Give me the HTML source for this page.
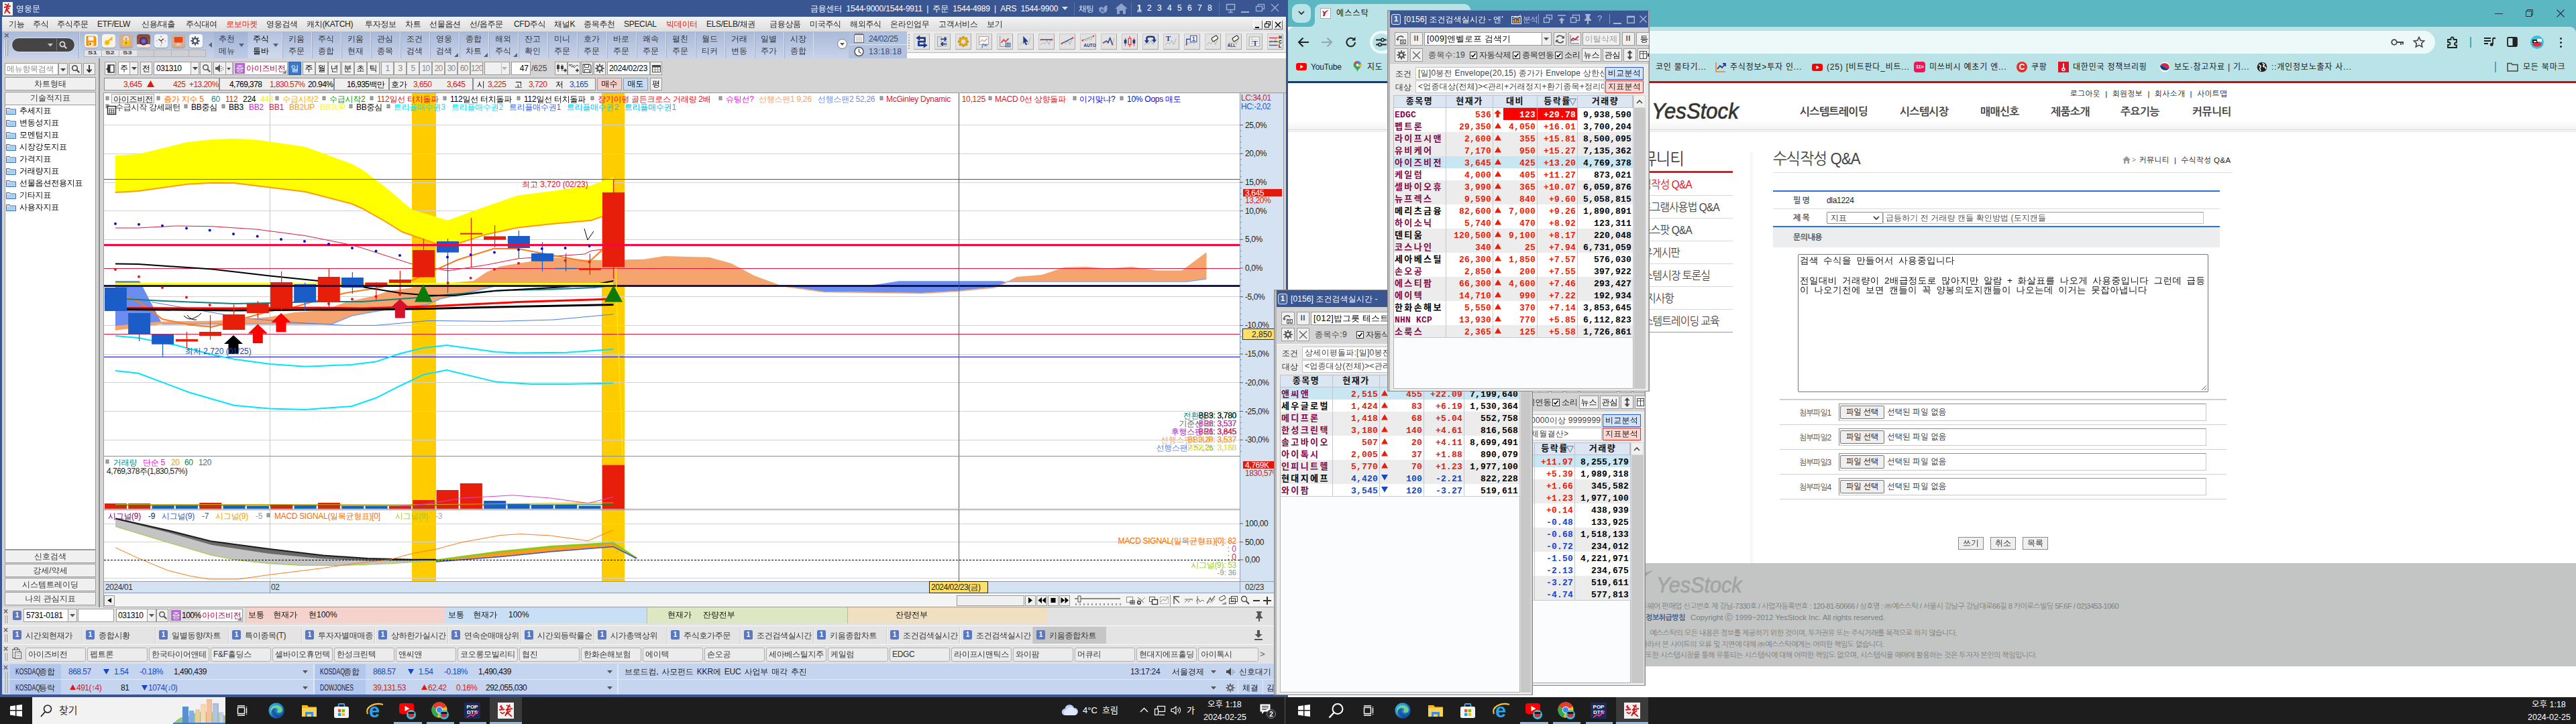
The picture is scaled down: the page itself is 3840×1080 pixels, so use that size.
<!DOCTYPE html>
<html lang="ko"><head><meta charset="utf-8"><title>screen</title>
<style>
html,body{margin:0;padding:0;background:#fff;}
#root{position:relative;width:3840px;height:1080px;overflow:hidden;background:#fff;font-family:"Liberation Sans","WenQuanYi Zen Hei",sans-serif;font-size:12px;color:#000;}
#root div{position:absolute;box-sizing:border-box;}
#root svg{position:absolute;overflow:visible;}
.t{white-space:nowrap;line-height:14px;}
.g{font-family:"Liberation Sans","WenQuanYi Zen Hei",sans-serif;}
.m{font-family:"Liberation Sans","Noto Sans CJK KR",sans-serif;}
.n{font-family:"Liberation Sans","NanumGothic",sans-serif;}
.btn{background:#f0f0f0;border:1px solid #9a9a9a;text-align:center;line-height:18px;white-space:nowrap;overflow:hidden;}
.inp{background:#fff;border:1px solid #9a9a9a;line-height:18px;white-space:nowrap;overflow:hidden;}
.r{color:#e0190d;} .b{color:#1545c8;}

</style></head>
<body>
<div id="root">
<!-- s_left_top -->
<div style="left:0px;top:0px;width:1920px;height:1040px;background:#3a5692;"></div>
<div style="left:4px;top:3px;width:15px;height:20px;background:#f4f4f4;"><svg width="15" height="20" viewBox="0 0 15 20"><path d="M3 3l4 2M9 2l-2 5M2 8l10-2M7 7l-4 10M5 11l6 6M10 9l-6 4" stroke="#d01818" stroke-width="1.8" fill="none"/></svg></div>
<div class="t" style="left:24px;top:6px;color:#fff;font-size:12px;">영웅문</div>
<div class="t" style="left:1208px;top:6px;color:#fff;font-size:12px;letter-spacing:-0.2px;">금융센터&nbsp; 1544-9000/1544-9911&nbsp; |&nbsp; 주문&nbsp; 1544-4989&nbsp; |&nbsp; ARS&nbsp; 1544-9900</div>
<svg style="left:1583px;top:10px" width="10" height="6"><path d="M0 0h9l-4.5 5z" fill="#d8e0f0"/></svg>
<div style="left:1601px;top:3px;width:1px;height:20px;background:#5a74a8;"></div>
<div class="t" style="left:1608px;top:6px;color:#e4eaf6;font-size:12px;letter-spacing:-1px;">채팅</div>
<svg style="left:1636px;top:5px" width="18" height="16"><path d="M2 7l4-2 3 2 3-4 3 1-1 3 1 1-2 5-6 2-4-3z" fill="#8ea2cc"/><text x="5" y="13" font-size="8" font-weight="bold" fill="#3a5692" font-family="Liberation Sans,sans-serif">K</text></svg>
<svg style="left:1662px;top:5px" width="19" height="16"><path d="M0 8L9.5 0 19 8h-3v8h-4v-5H7v5H3V8z" fill="#8ea2cc"/></svg>
<div style="left:1686px;top:3px;width:1px;height:20px;background:#5a74a8;"></div>
<div class="t" style="left:1695px;top:5px;color:#fff;font-size:12px;font-weight:bold;text-decoration:underline;">1</div>
<div class="t" style="left:1710px;top:5px;color:#fff;font-size:12px;">2</div>
<div class="t" style="left:1725px;top:5px;color:#fff;font-size:12px;">3</div>
<div class="t" style="left:1740px;top:5px;color:#fff;font-size:12px;">4</div>
<div class="t" style="left:1755px;top:5px;color:#fff;font-size:12px;">5</div>
<div class="t" style="left:1770px;top:5px;color:#fff;font-size:12px;">6</div>
<div class="t" style="left:1785px;top:5px;color:#fff;font-size:12px;">7</div>
<div class="t" style="left:1800px;top:5px;color:#fff;font-size:12px;">8</div>
<div style="left:1817px;top:3px;width:1px;height:20px;background:#5a74a8;"></div>
<svg style="left:1828px;top:6px" width="14" height="14"><rect x="0.5" y="0.5" width="12" height="8" fill="none" stroke="#9fb0d4" stroke-width="1.5"/><path d="M6.5 9v3M3 12.5h7" stroke="#9fb0d4" stroke-width="1.5"/></svg>
<div style="left:1850px;top:17px;width:12px;height:2px;background:#9fb0d4;"></div>
<svg style="left:1872px;top:6px" width="14" height="12"><rect x="3.5" y="0.5" width="9" height="7" fill="none" stroke="#9fb0d4" stroke-width="1.3"/><rect x="0.5" y="3.5" width="9" height="7" fill="#3a5692" stroke="#9fb0d4" stroke-width="1.3"/></svg>
<svg style="left:1895px;top:6px" width="12" height="12"><path d="M0 0l11 11M11 0L0 11" stroke="#9fb0d4" stroke-width="1.3"/></svg>
<div style="left:3px;top:25px;width:1914px;height:22px;background:linear-gradient(#f2f2f2,#dedede);"></div>
<div class="t" style="left:13px;top:29px;letter-spacing:-0.3px;color:#222;">기능</div>
<div class="t" style="left:49px;top:29px;letter-spacing:-0.3px;color:#222;">주식</div>
<div class="t" style="left:85px;top:29px;letter-spacing:-0.3px;color:#222;">주식주문</div>
<div class="t" style="left:145px;top:29px;letter-spacing:-0.3px;color:#222;">ETF/ELW</div>
<div class="t" style="left:211px;top:29px;letter-spacing:-0.3px;color:#222;">신용/대출</div>
<div class="t" style="left:277px;top:29px;letter-spacing:-0.3px;color:#222;">주식대여</div>
<div class="t" style="left:337px;top:29px;letter-spacing:-0.3px;color:#e8150a;">로보마켓</div>
<div class="t" style="left:397px;top:29px;letter-spacing:-0.3px;color:#222;">영웅검색</div>
<div class="t" style="left:457px;top:29px;letter-spacing:-0.3px;color:#222;">캐치(KATCH)</div>
<div class="t" style="left:544px;top:29px;letter-spacing:-0.3px;color:#222;">투자정보</div>
<div class="t" style="left:604px;top:29px;letter-spacing:-0.3px;color:#222;">차트</div>
<div class="t" style="left:640px;top:29px;letter-spacing:-0.3px;color:#222;">선물옵션</div>
<div class="t" style="left:700px;top:29px;letter-spacing:-0.3px;color:#222;">선/옵주문</div>
<div class="t" style="left:766px;top:29px;letter-spacing:-0.3px;color:#222;">CFD주식</div>
<div class="t" style="left:826px;top:29px;letter-spacing:-0.3px;color:#222;">채널K</div>
<div class="t" style="left:870px;top:29px;letter-spacing:-0.3px;color:#222;">종목추천</div>
<div class="t" style="left:930px;top:29px;letter-spacing:-0.3px;color:#222;">SPECIAL</div>
<div class="t" style="left:993px;top:29px;letter-spacing:-0.3px;color:#e8150a;">빅데이터</div>
<div class="t" style="left:1053px;top:29px;letter-spacing:-0.3px;color:#222;">ELS/ELB/채권</div>
<div class="t" style="left:1147px;top:29px;letter-spacing:-0.3px;color:#222;">금융상품</div>
<div class="t" style="left:1207px;top:29px;letter-spacing:-0.3px;color:#222;">미국주식</div>
<div class="t" style="left:1267px;top:29px;letter-spacing:-0.3px;color:#222;">해외주식</div>
<div class="t" style="left:1327px;top:29px;letter-spacing:-0.3px;color:#222;">온라인업무</div>
<div class="t" style="left:1399px;top:29px;letter-spacing:-0.3px;color:#222;">고객서비스</div>
<div class="t" style="left:1471px;top:29px;letter-spacing:-0.3px;color:#222;">보기</div>
<div style="left:1868px;top:30px;width:14px;height:14px;background:#ececec;border:1px solid #fff;border-right-color:#666;border-bottom-color:#666;"></div>
<div style="left:1883px;top:30px;width:14px;height:14px;background:#ececec;border:1px solid #fff;border-right-color:#666;border-bottom-color:#666;"></div>
<div style="left:1898px;top:30px;width:14px;height:14px;background:#ececec;border:1px solid #fff;border-right-color:#666;border-bottom-color:#666;"></div>
<div style="left:1871px;top:40px;width:6px;height:2px;background:#000;"></div>
<svg style="left:1885px;top:32px" width="10" height="10"><rect x="2.5" y="0.5" width="6" height="5" fill="none" stroke="#000"/><rect x="0.5" y="3.5" width="6" height="5" fill="#ececec" stroke="#000"/></svg>
<svg style="left:1901px;top:33px" width="9" height="9"><path d="M0 0l8 8M8 0L0 8" stroke="#000" stroke-width="1.4"/></svg>
<div style="left:3px;top:47px;width:1349px;height:40px;background:linear-gradient(#a9b9d9,#c8d3ea);"></div>
<div class="t" style="left:6px;top:46px;color:#666;font-size:13px;font-weight:bold;">×</div>
<div style="left:7px;top:59px;width:2px;height:25px;background:#fff;border-right:1px solid #888;"></div>
<div style="left:10px;top:59px;width:2px;height:25px;background:#fff;border-right:1px solid #888;"></div>
<div style="left:17px;top:56px;width:95px;height:22px;background:#454545;border-radius:11px;border:1px solid #dfe5f0;"></div>
<svg style="left:71px;top:65px" width="9" height="5"><path d="M0 0h8l-4 4.5z" fill="#c8c8c8"/></svg>
<div style="left:84px;top:58px;width:1px;height:18px;background:#777;"></div>
<svg style="left:88px;top:61px" width="13" height="13"><circle cx="5" cy="5" r="3.6" fill="none" stroke="#ddd" stroke-width="1.7"/><path d="M7.8 7.8l3.6 3.6" stroke="#ddd" stroke-width="2"/></svg>
<div style="left:126px;top:51px;width:20px;height:20px;background:#fdf7e8;border-radius:4px;box-shadow:0 1px 1px rgba(0,0,0,.25);"></div>
<div style="left:152px;top:51px;width:20px;height:20px;background:#fbf4e2;border-radius:4px;box-shadow:0 1px 1px rgba(0,0,0,.25);"></div>
<div style="left:178px;top:51px;width:20px;height:20px;background:#d7ad8e;border-radius:4px;box-shadow:0 1px 1px rgba(0,0,0,.25);"></div>
<div style="left:204px;top:51px;width:20px;height:20px;background:#f5e8dc;border-radius:4px;box-shadow:0 1px 1px rgba(0,0,0,.25);"></div>
<div style="left:230px;top:51px;width:20px;height:20px;background:#eef1f2;border-radius:4px;box-shadow:0 1px 1px rgba(0,0,0,.25);"></div>
<div style="left:256px;top:51px;width:20px;height:20px;background:#d7ad8e;border-radius:4px;box-shadow:0 1px 1px rgba(0,0,0,.25);"></div>
<div style="left:282px;top:51px;width:20px;height:20px;background:#f7f8f9;border-radius:4px;box-shadow:0 1px 1px rgba(0,0,0,.25);"></div>
<svg style="left:128px;top:53px" width="16" height="16"><path d="M1 1h12l2 2v12H1z" fill="#f59a0c" stroke="#d87a00" stroke-width=".8"/><rect x="3.500" y="1.500" width="8" height="6" fill="#f4f6fb"/><rect x="4.500" y="10" width="7" height="5" fill="#fbe9c8"/><rect x="5.500" y="11" width="2" height="3" fill="#a05a00"/></svg>
<svg style="left:155px;top:54px" width="14" height="14"><circle cx="4.5" cy="9.5" r="3.5" fill="#f7b612"/><path d="M6.5 7.5l6-6M10 4l2 2" stroke="#f7b612" stroke-width="2.2"/></svg>
<svg style="left:181px;top:53px" width="14" height="16"><path d="M4 7V4.5a3 3 0 016 0V7" fill="none" stroke="#f3f3f3" stroke-width="1.6"/><rect x="2" y="7" width="10" height="8" rx="1" fill="#f7c41a"/><rect x="6.3" y="9.5" width="1.6" height="3" fill="#8a5a10"/></svg>
<svg style="left:204px;top:51px" width="20" height="20"><rect x="0" y="0" width="20" height="20" rx="4" fill="#f3e6d4"/><path d="M0 4a4 4 0 014-4h12a4 4 0 014 4v3H0z" fill="#8a4a3c"/><rect x="0" y="7" width="20" height="8" fill="#7a3e34" opacity=".85"/><circle cx="10" cy="10.500" r="6" fill="#3a2a4a"/><circle cx="10" cy="10.500" r="4.600" fill="#6a4a9c"/><circle cx="10" cy="10.500" r="2.300" fill="#8a6cc0"/><circle cx="3.500" cy="3.500" r="1" fill="#e83030"/></svg>
<svg style="left:232px;top:53px" width="16" height="16"><path d="M8 8L4.5 5.5M8 8l4-3.2" stroke="#333" stroke-width="1.2"/><path d="M8 8l1.5 4" stroke="#d22" stroke-width="1"/><circle cx="8" cy="1.5" r=".8" fill="#d22"/><circle cx="14.5" cy="8" r=".8" fill="#888"/><circle cx="8" cy="14.5" r=".8" fill="#888"/><circle cx="1.5" cy="8" r=".8" fill="#888"/></svg>
<svg style="left:258px;top:54px" width="16" height="14"><rect x="1" y="0.5" width="14" height="9.5" rx="1" fill="#f0470c" stroke="#c7c7c7"/><path d="M8 10v2.5M4.5 13h7" stroke="#ddd" stroke-width="1.4"/></svg>
<svg style="left:284px;top:54px" width="14" height="14"><circle cx="7" cy="7" r="3.6" fill="none" stroke="#4a5263" stroke-width="2.4"/><path d="M7 0.3v2.4M7 11.3v2.4M.3 7h2.4M11.3 7h2.4M2.2 2.2l1.8 1.8M10 10l1.8 1.8M2.2 11.8L4 10M10 4l1.8-1.8" stroke="#4a5263" stroke-width="2"/></svg>
<div style="left:125px;top:74px;width:182px;height:11px;background:#cfcfcf;border:1px solid #b0b4bc;"></div>
<div style="left:151px;top:75px;width:1px;height:9px;background:#b4b4b4;"></div>
<div style="left:177px;top:75px;width:1px;height:9px;background:#b4b4b4;"></div>
<div style="left:203px;top:75px;width:1px;height:9px;background:#b4b4b4;"></div>
<div style="left:229px;top:75px;width:1px;height:9px;background:#b4b4b4;"></div>
<div style="left:255px;top:75px;width:1px;height:9px;background:#b4b4b4;"></div>
<div style="left:281px;top:75px;width:1px;height:9px;background:#b4b4b4;"></div>
<div style="left:126px;top:75px;width:78px;height:9px;background:#e6e6e6;"></div>
<div style="left:151px;top:75px;width:1px;height:9px;background:#b4b4b4;"></div>
<div style="left:177px;top:75px;width:1px;height:9px;background:#b4b4b4;"></div>
<div style="left:118px;top:48px;width:1px;height:39px;background:#d3dcee;"></div>
<div style="left:117px;top:48px;width:1px;height:39px;background:#9babc9;"></div>
<div class="t" style="left:131px;top:73px;font-size:8px;font-weight:bold;color:#444;line-height:12px;transform:scaleX(1.4);transform-origin:0 0;">S1</div>
<div class="t" style="left:157px;top:73px;font-size:8px;font-weight:bold;color:#444;line-height:12px;transform:scaleX(1.4);transform-origin:0 0;">S2</div>
<div class="t" style="left:183px;top:73px;font-size:8px;font-weight:bold;color:#444;line-height:12px;transform:scaleX(1.4);transform-origin:0 0;">S3</div>
<svg style="left:311px;top:63px" width="6" height="9"><path d="M5 0v8L0 4z" fill="#5a6474"/></svg>
<div style="left:319px;top:48px;width:50px;height:39px;background:linear-gradient(#a2b3d6,#bfcbe6);"></div>
<div class="t" style="left:326px;top:51px;color:#333;">추천</div>
<div class="t" style="left:326px;top:69px;color:#333;">메뉴</div>
<svg style="left:356px;top:65px" width="8" height="5"><path d="M0 0h8l-4 5z" fill="#566074"/></svg>
<div style="left:370px;top:48px;width:50px;height:39px;background:linear-gradient(#b4c2e0,#d0daee);"></div>
<div class="t" style="left:377px;top:51px;color:#000;">주식</div>
<div class="t" style="left:377px;top:69px;color:#000;">툴바</div>
<svg style="left:407px;top:65px" width="8" height="5"><path d="M0 0h8l-4 5z" fill="#566074"/></svg>
<div style="left:420px;top:48px;width:1px;height:39px;background:#d6deef;"></div>
<div style="left:421px;top:48px;width:1px;height:39px;background:#9dadcd;"></div>
<div class="t" style="left:430px;top:51px;color:#333;">키움</div>
<div class="t" style="left:430px;top:69px;color:#333;">주문</div>
<div style="left:464px;top:48px;width:1px;height:39px;background:#d6deef;"></div>
<div style="left:465px;top:48px;width:1px;height:39px;background:#9dadcd;"></div>
<div class="t" style="left:474px;top:51px;color:#333;">주식</div>
<div class="t" style="left:474px;top:69px;color:#333;">종합</div>
<div style="left:508px;top:48px;width:1px;height:39px;background:#d6deef;"></div>
<div style="left:509px;top:48px;width:1px;height:39px;background:#9dadcd;"></div>
<div class="t" style="left:518px;top:51px;color:#333;">키움</div>
<div class="t" style="left:518px;top:69px;color:#333;">현재</div>
<div style="left:552px;top:48px;width:1px;height:39px;background:#d6deef;"></div>
<div style="left:553px;top:48px;width:1px;height:39px;background:#9dadcd;"></div>
<div class="t" style="left:562px;top:51px;color:#333;">관심</div>
<div class="t" style="left:562px;top:69px;color:#333;">종목</div>
<div style="left:596px;top:48px;width:1px;height:39px;background:#d6deef;"></div>
<div style="left:597px;top:48px;width:1px;height:39px;background:#9dadcd;"></div>
<div class="t" style="left:606px;top:51px;color:#333;">조건</div>
<div class="t" style="left:606px;top:69px;color:#333;">검색</div>
<div style="left:640px;top:48px;width:1px;height:39px;background:#d6deef;"></div>
<div style="left:641px;top:48px;width:1px;height:39px;background:#9dadcd;"></div>
<div class="t" style="left:650px;top:51px;color:#333;">영웅</div>
<div class="t" style="left:650px;top:69px;color:#333;">검색</div>
<svg style="left:677px;top:79px" width="6" height="6"><path d="M6 0v6H0z" fill="#5a6474"/></svg>
<div style="left:684px;top:48px;width:1px;height:39px;background:#d6deef;"></div>
<div style="left:685px;top:48px;width:1px;height:39px;background:#9dadcd;"></div>
<div class="t" style="left:694px;top:51px;color:#333;">종합</div>
<div class="t" style="left:694px;top:69px;color:#333;">차트</div>
<svg style="left:721px;top:79px" width="6" height="6"><path d="M6 0v6H0z" fill="#5a6474"/></svg>
<div style="left:728px;top:48px;width:1px;height:39px;background:#d6deef;"></div>
<div style="left:729px;top:48px;width:1px;height:39px;background:#9dadcd;"></div>
<div class="t" style="left:738px;top:51px;color:#333;">해외</div>
<div class="t" style="left:738px;top:69px;color:#333;">주식</div>
<svg style="left:765px;top:79px" width="6" height="6"><path d="M6 0v6H0z" fill="#5a6474"/></svg>
<div style="left:772px;top:48px;width:1px;height:39px;background:#d6deef;"></div>
<div style="left:773px;top:48px;width:1px;height:39px;background:#9dadcd;"></div>
<div class="t" style="left:782px;top:51px;color:#333;">잔고</div>
<div class="t" style="left:782px;top:69px;color:#333;">확인</div>
<div style="left:816px;top:48px;width:1px;height:39px;background:#d6deef;"></div>
<div style="left:817px;top:48px;width:1px;height:39px;background:#9dadcd;"></div>
<div class="t" style="left:826px;top:51px;color:#333;">미니</div>
<div class="t" style="left:826px;top:69px;color:#333;">주문</div>
<div style="left:860px;top:48px;width:1px;height:39px;background:#d6deef;"></div>
<div style="left:861px;top:48px;width:1px;height:39px;background:#9dadcd;"></div>
<div class="t" style="left:870px;top:51px;color:#333;">호가</div>
<div class="t" style="left:870px;top:69px;color:#333;">주문</div>
<div style="left:904px;top:48px;width:1px;height:39px;background:#d6deef;"></div>
<div style="left:905px;top:48px;width:1px;height:39px;background:#9dadcd;"></div>
<div class="t" style="left:914px;top:51px;color:#333;">바로</div>
<div class="t" style="left:914px;top:69px;color:#333;">주문</div>
<div style="left:948px;top:48px;width:1px;height:39px;background:#d6deef;"></div>
<div style="left:949px;top:48px;width:1px;height:39px;background:#9dadcd;"></div>
<div class="t" style="left:958px;top:51px;color:#333;">쾌속</div>
<div class="t" style="left:958px;top:69px;color:#333;">주문</div>
<div style="left:992px;top:48px;width:1px;height:39px;background:#d6deef;"></div>
<div style="left:993px;top:48px;width:1px;height:39px;background:#9dadcd;"></div>
<div class="t" style="left:1002px;top:51px;color:#333;">펼친</div>
<div class="t" style="left:1002px;top:69px;color:#333;">주문</div>
<div style="left:1036px;top:48px;width:1px;height:39px;background:#d6deef;"></div>
<div style="left:1037px;top:48px;width:1px;height:39px;background:#9dadcd;"></div>
<div class="t" style="left:1046px;top:51px;color:#333;">월드</div>
<div class="t" style="left:1046px;top:69px;color:#333;">티커</div>
<div style="left:1080px;top:48px;width:1px;height:39px;background:#d6deef;"></div>
<div style="left:1081px;top:48px;width:1px;height:39px;background:#9dadcd;"></div>
<div class="t" style="left:1090px;top:51px;color:#333;">거래</div>
<div class="t" style="left:1090px;top:69px;color:#333;">변동</div>
<div style="left:1124px;top:48px;width:1px;height:39px;background:#d6deef;"></div>
<div style="left:1125px;top:48px;width:1px;height:39px;background:#9dadcd;"></div>
<div class="t" style="left:1134px;top:51px;color:#333;">일별</div>
<div class="t" style="left:1134px;top:69px;color:#333;">주가</div>
<div style="left:1168px;top:48px;width:1px;height:39px;background:#d6deef;"></div>
<div style="left:1169px;top:48px;width:1px;height:39px;background:#9dadcd;"></div>
<div class="t" style="left:1178px;top:51px;color:#333;">시장</div>
<div class="t" style="left:1178px;top:69px;color:#333;">종합</div>
<div style="left:1212px;top:48px;width:1px;height:39px;background:#d6deef;"></div>
<div style="left:1248px;top:58px;width:15px;height:15px;background:#fff;border:1px solid #7a7a7a;border-radius:8px;"></div>
<svg style="left:1252px;top:64px" width="8" height="5"><path d="M0 0h7l-3.5 4z" fill="#555"/></svg>
<div style="left:1265px;top:48px;width:87px;height:19px;background:#b3c2df;border-bottom:1px solid #dbe3f1;"></div>
<div style="left:1265px;top:68px;width:87px;height:19px;background:#b3c2df;"></div>
<svg style="left:1273px;top:49px" width="16" height="16"><rect x="0.5" y="2.5" width="14" height="12" fill="#fff" stroke="#666"/><path d="M3 0v4M6 0v4M9 0v4M12 0v4" stroke="#555"/><path d="M2 7h11M2 9.5h11M2 12h11M4.5 5v9M7.5 5v9M10.5 5v9" stroke="#bbb" stroke-width=".8"/></svg>
<div class="t" style="left:1295px;top:51px;color:#3c4a66;letter-spacing:-0.4px;">24/02/25</div>
<svg style="left:1273px;top:69px" width="16" height="16"><circle cx="7.5" cy="8" r="6.5" fill="#fff" stroke="#555" stroke-width="1.5"/><path d="M7.5 4v4.5l3 2" stroke="#555" stroke-width="1.4" fill="none"/></svg>
<div class="t" style="left:1295px;top:70px;color:#3c4a66;letter-spacing:0.3px;">13:18:18</div>
<div style="left:1352px;top:47px;width:565px;height:31px;background:#eaeaea;"></div>
<div style="left:1352px;top:78px;width:565px;height:1px;background:#b8b8b8;"></div>
<div style="left:1352px;top:79px;width:565px;height:8px;background:#fcfcfc;"></div>
<div style="left:1354px;top:51px;width:2px;height:2px;background:#aaa;"></div>
<div style="left:1354px;top:55px;width:2px;height:2px;background:#aaa;"></div>
<div style="left:1354px;top:59px;width:2px;height:2px;background:#aaa;"></div>
<div style="left:1354px;top:63px;width:2px;height:2px;background:#aaa;"></div>
<div style="left:1354px;top:67px;width:2px;height:2px;background:#aaa;"></div>
<div style="left:1354px;top:71px;width:2px;height:2px;background:#aaa;"></div>
<div style="left:1362px;top:50px;width:24px;height:24px;background:#e2e2e2;border:1px solid #a8a8a8;border-left-color:#c8c8c8;border-top-color:#c8c8c8;"><svg width="22" height="22" viewBox="0 0 24 24"><path d="M7 6H17v6H7v6h10" stroke="#1d3a8c" stroke-width="3" fill="none"/><path d="M9 1.500L2.500 6 9 10.500zM15 13.500L21.500 18 15 22.500z" fill="#1d3a8c"/></svg></div>
<div style="left:1393px;top:50px;width:24px;height:24px;background:#e2e2e2;border:1px solid #a8a8a8;border-left-color:#c8c8c8;border-top-color:#c8c8c8;"><svg width="22" height="22" viewBox="0 0 24 24"><path d="M4 4h6v16H4zM14 5h6M14 12h6M14 19h6" stroke="#999" fill="none"/><path d="M9 8h8M15 5l3 3-3 3M19 16h-8M13 13l-3 3 3 3" stroke="#1d3a8c" stroke-width="1.8" fill="none"/></svg></div>
<div style="left:1424px;top:50px;width:24px;height:24px;background:#e2e2e2;border:1px solid #a8a8a8;border-left-color:#c8c8c8;border-top-color:#c8c8c8;"><svg width="22" height="22" viewBox="0 0 24 24"><circle cx="12" cy="12" r="5" fill="none" stroke="#e9a400" stroke-width="3"/><path d="M12 3v3M12 18v3M3 12h3M18 12h3M5.6 5.6l2.2 2.2M16.2 16.2l2.2 2.2M5.6 18.4l2.2-2.2M16.2 7.8l2.2-2.2" stroke="#e9a400" stroke-width="2.6"/><circle cx="12" cy="12" r="7.5" fill="none" stroke="#7a5a00" stroke-width=".6"/></svg></div>
<div style="left:1455px;top:50px;width:24px;height:24px;background:#e2e2e2;border:1px solid #a8a8a8;border-left-color:#c8c8c8;border-top-color:#c8c8c8;"><svg width="22" height="22" viewBox="0 0 24 24"><rect x="4" y="4" width="15" height="13" fill="#fff" stroke="#999"/><path d="M5 13l4-4 3 3 5-5" stroke="#e33" fill="none"/><text x="8" y="21" font-size="10" fill="#1d3a8c" font-family="Liberation Serif,serif" font-style="italic">f∞</text></svg></div>
<div style="left:1486px;top:50px;width:24px;height:24px;background:#e2e2e2;border:1px solid #a8a8a8;border-left-color:#c8c8c8;border-top-color:#c8c8c8;"><svg width="22" height="22" viewBox="0 0 24 24"><path d="M4 3v17h16" stroke="#666" fill="none" stroke-dasharray="2 1"/><path d="M6 14l4-5 3 3 5-5" stroke="#e33" stroke-width="1.8" fill="none"/><rect x="13.500" y="14.500" width="7" height="6" fill="#fff" stroke="#1d3a8c"/><path d="M17 14.500v6M13.500 17.500h7" stroke="#1d3a8c"/></svg></div>
<div style="left:1517px;top:50px;width:24px;height:24px;background:#e2e2e2;border:1px solid #a8a8a8;border-left-color:#c8c8c8;border-top-color:#c8c8c8;"><svg width="22" height="22" viewBox="0 0 24 24"><path d="M2 18l4-5 3 3 4-8 3 9 4-12" stroke="#aaa" fill="none"/><path d="M8 3l8 9-4 .3 2.200 4.700-2 1-2.200-4.800L8 15z" fill="#1d3a8c"/></svg></div>
<div style="left:1548px;top:50px;width:24px;height:24px;background:#e2e2e2;border:1px solid #a8a8a8;border-left-color:#c8c8c8;border-top-color:#c8c8c8;"><svg width="22" height="22" viewBox="0 0 24 24"><path d="M2 18l4-5 3 3 4-6 3 7 4-10" stroke="#aaa" fill="none"/><path d="M3 9h18" stroke="#1d3a8c" stroke-width="1.5"/><circle cx="3" cy="9" r="1.300" fill="#e33"/><circle cx="21" cy="9" r="1.300" fill="#e33"/></svg></div>
<div style="left:1579px;top:50px;width:24px;height:24px;background:#e2e2e2;border:1px solid #a8a8a8;border-left-color:#c8c8c8;border-top-color:#c8c8c8;"><svg width="22" height="22" viewBox="0 0 24 24"><path d="M2 18l4-5 3 3 4-6 3 7 4-10" stroke="#aaa" fill="none"/><path d="M3 15L21 6" stroke="#1d3a8c" stroke-width="1.5"/><circle cx="3" cy="15" r="1.300" fill="#e33"/><circle cx="21" cy="6" r="1.300" fill="#e33"/></svg></div>
<div style="left:1610px;top:50px;width:24px;height:24px;background:#e2e2e2;border:1px solid #a8a8a8;border-left-color:#c8c8c8;border-top-color:#c8c8c8;"><svg width="22" height="22" viewBox="0 0 24 24"><path d="M2 12l4-3 3 2 4-4 3 3 4-6" stroke="#aaa" fill="none"/><path d="M3 10L21 3" stroke="#888" stroke-width="1"/><circle cx="3" cy="10" r="1.300" fill="#e33"/><circle cx="21" cy="3" r="1.300" fill="#e33"/><text x="5" y="21" font-size="7" font-weight="bold" fill="#1d3a8c" font-family="Liberation Sans,sans-serif">AUTO</text></svg></div>
<div style="left:1641px;top:50px;width:24px;height:24px;background:#e2e2e2;border:1px solid #a8a8a8;border-left-color:#c8c8c8;border-top-color:#c8c8c8;"><svg width="22" height="22" viewBox="0 0 24 24"><path d="M2 14l4-2 3 3 4-9 4 12 4-12" stroke="#aaa" fill="none"/><path d="M3 14l5-3 3 3 3-8 4 11" stroke="#1d3a8c" stroke-width="1.400" fill="none"/><circle cx="3" cy="14" r="1.200" fill="#e33"/><circle cx="8" cy="11" r="1.200" fill="#e33"/><circle cx="18" cy="17" r="1.200" fill="#e33"/></svg></div>
<div style="left:1672px;top:50px;width:24px;height:24px;background:#e2e2e2;border:1px solid #a8a8a8;border-left-color:#c8c8c8;border-top-color:#c8c8c8;"><svg width="22" height="22" viewBox="0 0 24 24"><path d="M5 6v13M12 3v18M19 6v13" stroke="#e33" stroke-width="1.200"/><rect x="3" y="9" width="4" height="6" fill="#1d3a8c"/><rect x="10" y="7" width="4" height="10" fill="#fff" stroke="#e33" stroke-width="1.500"/><rect x="17" y="9" width="4" height="6" fill="#1d3a8c"/></svg></div>
<div style="left:1703px;top:50px;width:24px;height:24px;background:#e2e2e2;border:1px solid #a8a8a8;border-left-color:#c8c8c8;border-top-color:#c8c8c8;"><svg width="22" height="22" viewBox="0 0 24 24"><path d="M2 18l4-5 3 3 4-6 3 7 4-10" stroke="#aaa" fill="none"/><path d="M6 13V7q0-3 3-3h6q3 0 3 3v5" stroke="#1d3a8c" stroke-width="2.800" fill="none"/><path d="M2 10h8l-4 5zM14 9h8l-4 5z" fill="#1d3a8c"/></svg></div>
<div style="left:1734px;top:50px;width:24px;height:24px;background:#e2e2e2;border:1px solid #a8a8a8;border-left-color:#c8c8c8;border-top-color:#c8c8c8;"><svg width="22" height="22" viewBox="0 0 24 24"><path d="M2 18l4-5 3 3 4-6 3 7 4-10" stroke="#aaa" fill="none"/><text x="3" y="11" font-size="12" font-weight="bold" fill="#1d3a8c" font-family="Liberation Serif,serif">T</text></svg></div>
<div style="left:1765px;top:50px;width:24px;height:24px;background:#e2e2e2;border:1px solid #a8a8a8;border-left-color:#c8c8c8;border-top-color:#c8c8c8;"><svg width="22" height="22" viewBox="0 0 24 24"><path d="M2 18l4-5 3 3 4-6 3 7" stroke="#aaa" fill="none"/><path d="M3 17V8h6" stroke="#1d3a8c" stroke-width="1.300" fill="none"/><circle cx="3" cy="17" r="1.300" fill="#e33"/><rect x="9.500" y="2.500" width="10" height="10" fill="#fff" stroke="#1d3a8c"/><text x="12" y="11" font-size="9" font-weight="bold" fill="#1d3a8c" font-family="Liberation Sans,sans-serif">1</text></svg></div>
<div style="left:1796px;top:50px;width:24px;height:24px;background:#e2e2e2;border:1px solid #a8a8a8;border-left-color:#c8c8c8;border-top-color:#c8c8c8;"><svg width="22" height="22" viewBox="0 0 24 24"><path d="M2 18l4-5 3 3 4-6 3 7 4-10" stroke="#aaa" fill="none"/><rect x="10" y="4" width="10" height="6" rx="2" transform="rotate(-35 15 7)" fill="#fdfbe8" stroke="#222" stroke-width="1.200"/></svg></div>
<div style="left:1827px;top:50px;width:24px;height:24px;background:#e2e2e2;border:1px solid #a8a8a8;border-left-color:#c8c8c8;border-top-color:#c8c8c8;"><svg width="22" height="22" viewBox="0 0 24 24"><path d="M2 18l4-5 3 3 4-6 3 7 4-10" stroke="#aaa" fill="none"/><rect x="10" y="4" width="10" height="6" rx="2" transform="rotate(-35 15 7)" fill="#fdfbe8" stroke="#222" stroke-width="1.200"/><text x="2" y="21" font-size="7" font-weight="bold" fill="#1d3a8c" font-family="Liberation Sans,sans-serif">ALL</text></svg></div>
<div style="left:1858px;top:50px;width:24px;height:24px;background:#e2e2e2;border:1px solid #a8a8a8;border-left-color:#c8c8c8;border-top-color:#c8c8c8;"><svg width="22" height="22" viewBox="0 0 24 24"><rect x="3.500" y="4.500" width="17" height="15" fill="#fff" stroke="#999"/><path d="M3.500 8h17M3.500 11.500h17M3.500 15h17M8 4.500v15" stroke="#bbb"/><text x="9" y="18" font-size="12" font-weight="bold" fill="#1d3a8c" font-family="Liberation Serif,serif">T</text></svg></div>
<div style="left:1889px;top:50px;width:24px;height:24px;background:#e2e2e2;border:1px solid #a8a8a8;border-left-color:#c8c8c8;border-top-color:#c8c8c8;"><svg width="22" height="22" viewBox="0 0 24 24"><path d="M2 6h14" stroke="#e33" stroke-width="1.500"/><path d="M2 12h14" stroke="#222" stroke-width="1.500"/><path d="M2 18h14" stroke="#1d5ad0" stroke-width="1.500"/><path d="M3 16l3-6 3 3 3-5 3 4" stroke="#aaa" fill="none"/><text x="17.500" y="8" font-size="7" font-weight="bold" fill="#000" font-family="Liberation Sans,sans-serif">H</text><text x="17.500" y="15" font-size="7" font-weight="bold" fill="#000" font-family="Liberation Sans,sans-serif">C</text><text x="17.500" y="22" font-size="7" font-weight="bold" fill="#000" font-family="Liberation Sans,sans-serif">L</text></svg></div>
<!-- s_left_panel -->
<div style="left:3px;top:87px;width:1914px;height:819px;background:#d4d4d4;"></div>
<div class="inp" style="left:7px;top:94px;width:80px;height:18px;color:#8a8a8a;padding-left:2px;line-height:16px;letter-spacing:-0.3px;">메뉴항목검색</div>
<div class="btn" style="left:87px;top:94px;width:14px;height:18px;"><svg width="9" height="5" style="left:2px;top:7px"><path d="M0 0h8l-4 4.500z" fill="#444"/></svg></div>
<div class="btn" style="left:103px;top:94px;width:19px;height:18px;"><svg width="14" height="14" viewBox="0 0 14 14" style="left:2px;top:1px"><circle cx="5.5" cy="5.5" r="3.8" fill="none" stroke="#444" stroke-width="1.6"/><path d="M8.300 8.300l4 4" stroke="#444" stroke-width="2"/></svg></div>
<div class="btn" style="left:124px;top:94px;width:18px;height:18px;"><svg width="10" height="12" style="left:3px;top:2px"><path d="M5 0v9M1.500 6.500L5 10.500l3.500-4" stroke="#222" stroke-width="1.800" fill="none"/></svg></div>
<div class="btn" style="left:7px;top:115px;width:136px;height:20px;line-height:18px;color:#333;">차트형태</div>
<div class="btn" style="left:7px;top:137px;width:136px;height:19px;line-height:17px;color:#333;border-bottom:none;">기술적지표</div>
<div style="left:7px;top:156px;width:136px;height:664px;background:#fff;border:1px solid #9a9a9a;"></div>
<svg style="left:9px;top:159px" width="15" height="12"><path d="M0.500 2.500h5l1 1.500h8v7.500h-14z" fill="#cfe3f7" stroke="#2f6fb5"/><path d="M1.500 5.500h12v5h-12z" fill="#a8cdf0"/></svg>
<div class="t" style="left:29px;top:158px;letter-spacing:-0.2px;">추세지표</div>
<svg style="left:9px;top:177px" width="15" height="12"><path d="M0.500 2.500h5l1 1.500h8v7.500h-14z" fill="#cfe3f7" stroke="#2f6fb5"/><path d="M1.500 5.500h12v5h-12z" fill="#a8cdf0"/></svg>
<div class="t" style="left:29px;top:176px;letter-spacing:-0.2px;">변동성지표</div>
<svg style="left:9px;top:195px" width="15" height="12"><path d="M0.500 2.500h5l1 1.500h8v7.500h-14z" fill="#cfe3f7" stroke="#2f6fb5"/><path d="M1.500 5.500h12v5h-12z" fill="#a8cdf0"/></svg>
<div class="t" style="left:29px;top:194px;letter-spacing:-0.2px;">모멘텀지표</div>
<svg style="left:9px;top:213px" width="15" height="12"><path d="M0.500 2.500h5l1 1.500h8v7.500h-14z" fill="#cfe3f7" stroke="#2f6fb5"/><path d="M1.500 5.500h12v5h-12z" fill="#a8cdf0"/></svg>
<div class="t" style="left:29px;top:212px;letter-spacing:-0.2px;">시장강도지표</div>
<svg style="left:9px;top:231px" width="15" height="12"><path d="M0.500 2.500h5l1 1.500h8v7.500h-14z" fill="#cfe3f7" stroke="#2f6fb5"/><path d="M1.500 5.500h12v5h-12z" fill="#a8cdf0"/></svg>
<div class="t" style="left:29px;top:230px;letter-spacing:-0.2px;">가격지표</div>
<svg style="left:9px;top:249px" width="15" height="12"><path d="M0.500 2.500h5l1 1.500h8v7.500h-14z" fill="#cfe3f7" stroke="#2f6fb5"/><path d="M1.500 5.500h12v5h-12z" fill="#a8cdf0"/></svg>
<div class="t" style="left:29px;top:248px;letter-spacing:-0.2px;">거래량지표</div>
<svg style="left:9px;top:267px" width="15" height="12"><path d="M0.500 2.500h5l1 1.500h8v7.500h-14z" fill="#cfe3f7" stroke="#2f6fb5"/><path d="M1.500 5.500h12v5h-12z" fill="#a8cdf0"/></svg>
<div class="t" style="left:29px;top:266px;letter-spacing:-0.2px;">선물옵션전용지표</div>
<svg style="left:9px;top:285px" width="15" height="12"><path d="M0.500 2.500h5l1 1.500h8v7.500h-14z" fill="#cfe3f7" stroke="#2f6fb5"/><path d="M1.500 5.500h12v5h-12z" fill="#a8cdf0"/></svg>
<div class="t" style="left:29px;top:284px;letter-spacing:-0.2px;">기타지표</div>
<svg style="left:9px;top:303px" width="15" height="12"><path d="M0.500 2.500h5l1 1.500h8v7.500h-14z" fill="#cfe3f7" stroke="#2f6fb5"/><path d="M1.500 5.500h12v5h-12z" fill="#a8cdf0"/></svg>
<div class="t" style="left:29px;top:302px;letter-spacing:-0.2px;">사용자지표</div>
<div class="btn" style="left:7px;top:820px;width:136px;height:20px;line-height:18px;color:#333;">신호검색</div>
<div class="btn" style="left:7px;top:841px;width:136px;height:20px;line-height:18px;color:#333;">강세/약세</div>
<div class="btn" style="left:7px;top:862px;width:136px;height:20px;line-height:18px;color:#333;">시스템트레이딩</div>
<div class="btn" style="left:7px;top:883px;width:136px;height:20px;line-height:18px;color:#333;">나의 관심지표</div>
<div style="left:143px;top:87px;width:11px;height:819px;background:#d4d4d4;"></div>
<div style="left:147px;top:87px;width:2px;height:819px;background:#8c8c8c;"></div>
<div class="btn" style="left:156px;top:92px;width:17px;height:20px;"><svg width="13" height="13" style="left:1px;top:3px"><rect x="3" y="1" width="9" height="11" fill="#fff" stroke="#333" stroke-width="1.400"/><rect x="3" y="1" width="3.500" height="11" fill="#333"/><path d="M0 7l3-2.500v5z" fill="#333"/></svg></div>
<div class="btn" style="left:176px;top:92px;width:18px;height:20px;background:#fff;">주</div>
<div class="btn" style="left:193px;top:92px;width:13px;height:20px;"><svg width="9" height="5" style="left:2px;top:7px"><path d="M0 0h8l-4 4.500z" fill="#444"/></svg></div>
<div class="btn" style="left:209px;top:92px;width:18px;height:20px;">전</div>
<div class="inp" style="left:229px;top:92px;width:56px;height:20px;padding-left:3px;letter-spacing:-0.4px;">031310</div>
<div class="btn" style="left:284px;top:92px;width:13px;height:20px;"><svg width="9" height="5" style="left:2px;top:7px"><path d="M0 0h8l-4 4.500z" fill="#444"/></svg></div>
<div class="btn" style="left:298px;top:92px;width:18px;height:20px;"><svg width="14" height="14" viewBox="0 0 14 14" style="left:2px;top:2px"><circle cx="5.500" cy="5.500" r="3.800" fill="none" stroke="#555" stroke-width="1.500"/><path d="M8.300 8.300l4 4" stroke="#555" stroke-width="2"/></svg></div>
<div class="btn" style="left:318px;top:92px;width:19px;height:20px;"><svg width="14" height="12" style="left:2px;top:3px"><path d="M0 4h3l4-4v12l-4-4H0z" fill="#555"/><path d="M9 3v1M9 6v1M9 9v1M11.500 4.500v1M11.500 7v1" stroke="#555" stroke-width="1.200"/></svg></div>
<div class="btn" style="left:336px;top:92px;width:11px;height:20px;"><svg width="7" height="4" style="left:1px;top:8px"><path d="M0 0h6l-3 3.500z" fill="#444"/></svg></div>
<div style="left:348px;top:92px;width:81px;height:20px;background:#fff;border:1px solid #9a9a9a;"></div>
<div style="left:350px;top:94px;width:15px;height:16px;background:#b565d6;color:#fff;text-align:center;line-height:16px;">증</div>
<div class="t" style="left:367px;top:95px;color:#a0104a;letter-spacing:-0.3px;">아이즈비전</div>
<svg style="left:421px;top:104px" width="6" height="6"><path d="M6 0v6H0z" fill="#888"/></svg>
<div class="btn" style="left:430px;top:92px;width:19px;height:20px;background:#3d78c8;color:#fff;border-color:#2e62aa;">일</div>
<div class="btn" style="left:451px;top:92px;width:19px;height:20px;">주</div>
<div class="btn" style="left:470px;top:92px;width:19px;height:20px;">월</div>
<div class="btn" style="left:489px;top:92px;width:19px;height:20px;">년</div>
<div class="btn" style="left:509px;top:92px;width:19px;height:20px;">분</div>
<div class="btn" style="left:528px;top:92px;width:19px;height:20px;">초</div>
<div class="btn" style="left:547px;top:92px;width:19px;height:20px;">틱</div>
<div class="btn" style="left:568px;top:92px;width:19px;height:20px;color:#8a8a8a;letter-spacing:-0.8px;">1</div>
<div class="btn" style="left:587px;top:92px;width:19px;height:20px;color:#8a8a8a;letter-spacing:-0.8px;">3</div>
<div class="btn" style="left:606px;top:92px;width:19px;height:20px;color:#8a8a8a;letter-spacing:-0.8px;">5</div>
<div class="btn" style="left:625px;top:92px;width:19px;height:20px;color:#8a8a8a;letter-spacing:-0.8px;">10</div>
<div class="btn" style="left:644px;top:92px;width:19px;height:20px;color:#8a8a8a;letter-spacing:-0.8px;">20</div>
<div class="btn" style="left:663px;top:92px;width:19px;height:20px;color:#8a8a8a;letter-spacing:-0.8px;">30</div>
<div class="btn" style="left:682px;top:92px;width:19px;height:20px;color:#8a8a8a;letter-spacing:-0.8px;">60</div>
<div class="btn" style="left:701px;top:92px;width:19px;height:20px;color:#8a8a8a;letter-spacing:-0.8px;">120</div>
<div class="btn" style="left:722px;top:92px;width:38px;height:20px;"><svg width="9" height="5" style="left:25px;top:7px"><path d="M0 0h8l-4 4.500z" fill="#b0b0b0"/></svg></div>
<div style="left:747px;top:92px;width:1px;height:20px;background:#c0c0c0;"></div>
<div class="inp" style="left:762px;top:92px;width:29px;height:20px;text-align:right;padding-right:2px;">47</div>
<div class="t" style="left:792px;top:95px;color:#444;">/625</div>
<div class="btn" style="left:827px;top:92px;width:19px;height:20px;"><svg width="16" height="14" style="left:1px;top:2px"><path d="M3 0v12M9 1v10" stroke="#444"/><rect x="1" y="2" width="4" height="6" fill="#444"/><rect x="7" y="3" width="4" height="5" fill="#444"/><path d="M11 10h5M13.500 7.500v5" stroke="#333" stroke-width="1.600"/></svg></div>
<div class="btn" style="left:846px;top:92px;width:19px;height:20px;"><svg width="16" height="14" style="left:1px;top:2px"><path d="M0 3l4-2 4 5 4-4 3 2M0 1l5 4 4-3" stroke="#555" fill="none"/><path d="M10 10h5M12.500 7.500v5" stroke="#333" stroke-width="1.600"/></svg></div>
<div class="btn" style="left:866px;top:92px;width:18px;height:20px;"><svg width="14" height="14" style="left:1px;top:2px"><path d="M1 1h10l2 2v10H1z" fill="#eee" stroke="#555" stroke-width="1.300"/><rect x="3.500" y="1.500" width="6" height="4" fill="#fff" stroke="#555"/><rect x="3.500" y="8.500" width="7" height="4.500" fill="#fff" stroke="#555"/></svg></div>
<div class="btn" style="left:885px;top:92px;width:18px;height:20px;"><svg width="14" height="14" style="left:1px;top:2px"><circle cx="7" cy="7" r="3.500" fill="none" stroke="#555" stroke-width="2.200"/><path d="M7 .3v2.400M7 11.300v2.400M.3 7h2.400M11.300 7h2.400M2.200 2.200l1.800 1.800M10 10l1.800 1.800M2.200 11.800L4 10M10 4l1.800-1.800" stroke="#555" stroke-width="1.900"/></svg></div>
<div class="inp" style="left:905px;top:92px;width:64px;height:20px;padding-left:2px;letter-spacing:-0.3px;">2024/02/23</div>
<div class="btn" style="left:969px;top:92px;width:18px;height:20px;"><svg width="13" height="12" style="left:2px;top:3px"><rect x=".500" y="1.500" width="12" height="10" fill="#fff" stroke="#444"/><rect x=".500" y="1.500" width="12" height="3" fill="#444"/><path d="M4.500 4v7M8.500 4v7M1 8h11" stroke="#888"/></svg></div>
<div style="left:155px;top:116px;width:172px;height:19px;background:#efefef;border:1px solid #8e8e8e;"></div>
<div style="left:327px;top:116px;width:171px;height:19px;background:#efefef;border:1px solid #8e8e8e;"></div>
<div style="left:498px;top:116px;width:82px;height:19px;background:#efefef;border:1px solid #8e8e8e;"></div>
<div style="left:580px;top:116px;width:125px;height:19px;background:#efefef;border:1px solid #8e8e8e;"></div>
<div style="left:705px;top:116px;width:183px;height:19px;background:#efefef;border:1px solid #8e8e8e;"></div>
<div class="t" style="left:184px;top:119px;color:#e0190d;letter-spacing:-0.55px;">3,645</div>
<svg style="left:219px;top:120px" width="11" height="10"><path d="M5.500 0L11 10H0z" fill="#e0190d"/></svg>
<div class="t" style="left:258px;top:119px;color:#e0190d;letter-spacing:-0.55px;">425&nbsp; +13.20%</div>
<div class="t" style="left:342px;top:119px;color:#000;letter-spacing:-0.55px;">4,769,378</div>
<div class="t" style="left:402px;top:119px;color:#e0190d;letter-spacing:-0.55px;">1,830.57%</div>
<div class="t" style="left:459px;top:119px;color:#000;letter-spacing:-0.55px;">20.94%</div>
<div class="t" style="left:517px;top:119px;color:#000;letter-spacing:-0.55px;">16,935백만</div>
<div class="t" style="left:583px;top:119px;color:#000;">호가</div>
<div class="t" style="left:616px;top:119px;color:#e0190d;letter-spacing:-0.55px;">3,650</div>
<div class="t" style="left:666px;top:119px;color:#e0190d;letter-spacing:-0.55px;">3,645</div>
<div class="t" style="left:711px;top:119px;color:#000;">시</div>
<div class="t" style="left:727px;top:119px;color:#e0190d;letter-spacing:-0.55px;">3,225</div>
<div class="t" style="left:767px;top:119px;color:#000;">고</div>
<div class="t" style="left:788px;top:119px;color:#e0190d;letter-spacing:-0.55px;">3,720</div>
<div class="t" style="left:828px;top:119px;color:#000;">저</div>
<div class="t" style="left:849px;top:119px;color:#1545c8;letter-spacing:-0.55px;">3,165</div>
<div class="btn" style="left:890px;top:116px;width:37px;height:19px;background:#f6cfc8;line-height:17px;">매수</div>
<div class="btn" style="left:929px;top:116px;width:37px;height:19px;background:#c4dcf6;line-height:17px;">매도</div>
<div class="btn" style="left:969px;top:116px;width:18px;height:19px;line-height:17px;">평</div>
<!-- s_chart -->
<div style="left:154px;top:138px;width:1763px;height:768px;background:#fff;border:1px solid #9a9a9a;"></div>
<div style="left:1848px;top:139px;width:65px;height:746px;background:#d5e2f1;border-left:1px solid #8c9cb4;"></div>
<div style="left:1913px;top:139px;width:4px;height:766px;background:#d4d4d4;border-left:1px solid #999;"></div>
<div style="left:155px;top:867px;width:1758px;height:18px;background:#d5e2f1;border-top:1px solid #8c9cb4;border-bottom:1px solid #8c9cb4;"></div>
<div style="left:155px;top:885px;width:1758px;height:20px;background:#f4f4f4;"></div>
<svg style="left:0;top:0" width="1920" height="910" viewBox="0 0 1920 910" font-family="Liberation Sans,WenQuanYi Zen Hei,sans-serif" font-size="12">
<rect x="614" y="139" width="36" height="728" fill="#ffcc00"/>
<rect x="897" y="139" width="34" height="728" fill="#ffcc00"/>
<path d="M155 186.5 H1848" stroke="#d2d2d2" stroke-width="1"/>
<path d="M155 229.5 H1848" stroke="#d2d2d2" stroke-width="1"/>
<path d="M155 272.5 H1848" stroke="#d2d2d2" stroke-width="1"/>
<path d="M155 314.5 H1848" stroke="#d2d2d2" stroke-width="1"/>
<path d="M155 357.5 H1848" stroke="#d2d2d2" stroke-width="1"/>
<path d="M155 442.5 H1848" stroke="#d2d2d2" stroke-width="1"/>
<path d="M155 485.5 H1848" stroke="#d2d2d2" stroke-width="1"/>
<path d="M155 528.5 H1848" stroke="#d2d2d2" stroke-width="1"/>
<path d="M155 570.5 H1848" stroke="#d2d2d2" stroke-width="1"/>
<path d="M155 613.5 H1848" stroke="#d2d2d2" stroke-width="1"/>
<path d="M155 656.5 H1848" stroke="#d2d2d2" stroke-width="1"/>
<path d="M155 781.5 H1848" stroke="#d2d2d2" stroke-width="1"/>
<path d="M155 808.5 H1848" stroke="#d2d2d2" stroke-width="1"/>
<path d="M155 862.5 H1848" stroke="#d2d2d2" stroke-width="1"/>
<path d="M402.500 139V867" stroke="#c8c8c8"/>
<polygon points="172,232 206,230 279,212 316,208 349,206.7 382,208.4 455,219 524.5,244.5 540,253 573,278 614.6,313 667.6,328.8 705.7,314.6 772,291.4 825,284.7 881.4,276.5 914.5,263.9 914.5,317 898,322.9 881.4,328.8 825,333.8 772,339.4 725.6,349.4 682.5,363.3 649.4,363.3 599.7,346 573,329.5 540,311 524.5,304 455,286 349,273 316,272.7 279,274.7 206,285 172,287" fill="#ffff00" />
<polyline points="172,287 206,285 279,274.7 316,272.7 349,273 455,286 524.5,304 540,311 573,329.5 599.7,346 649.4,363.3 682.5,363.3 725.6,349.4 772,339.4 825,333.8 881.4,328.8 898,322.9 914.5,317" fill="none" stroke="#ff9a00" stroke-width="2" />
<polygon points="172,419 208,419 242,483.4 172,491" fill="#6b8df0" />
<polygon points="172,486 242,479.4 242,483.4 172,493" fill="#f4a46c" />
<polygon points="242,479.4 316,478.8 365,476 402,472.8 438,466 481.5,463 514.6,451 560,440.7 579.8,434 614.6,429 649.4,424 705.7,419 725.6,405.7 745.5,397.4 772,393 792,389.8 825,384 871.5,387.5 898,388 960,386.7 990,382 1057,383.8 1090.5,393 1124,411 1161,424.8 1172,427 1172,427.4 735.6,427.4 656,446 636,454.6 583,461 560,464.5 524.5,471 494.7,483.4 242,483.4" fill="#f4a46c" />
<polyline points="242,483.4 494.7,483.4 524.5,471 560,464.5 583,461 636,454.6 656,446 735.6,427.4" fill="none" stroke="#7f9cf0" stroke-width="1.5" />
<polygon points="1172,427 1228,435 1374,437 1426,434 1482,428.5 1501,421 1493,419.2 1340,419.2 1310,424 1290,426" fill="#6b8df0" />
<polyline points="1172,427.4 1228,435.5 1374,437.5 1426,434.5 1482,429 1501,421" fill="none" stroke="#f4a46c" stroke-width="1.5" />
<polygon points="1501,421 1504.6,418.5 1515.8,412.9 1553,409.9 1586.6,398.7 1620,398 1650,400.5 1687,398 1724.6,403.5 1762,403.5 1798.5,376.3 1798.5,415.5 1769,419.2 1504.6,419.2" fill="#f4a46c" />
<polyline points="1501,420 1769,420 1798.5,416" fill="none" stroke="#7f9cf0" stroke-width="1.5" />
<path d="M155 267.500H1848" stroke="#e8143c" stroke-width="1"/>
<path d="M155 400.500H1848" stroke="#e8143c" stroke-width="1"/>
<path d="M155 498.500H1848" stroke="#e8143c" stroke-width="1"/>
<path d="M155 532.500H1848" stroke="#0a0ae0" stroke-width="1"/>
<polyline points="172,501 206,504 262.7,515 316,529 349,535.8 402,543 455,546.7 524.5,544 560,539.6 596,527.5 631,519 666,515 739,525 772,526.5 845,525.8 914.5,520.9" fill="none" stroke="#00e5ff" stroke-width="2" />
<polyline points="172,553 206,556.7 282.6,585.5 349,604.7 402,609.4 455,611 524.5,606 560,593.8 596,575.6 631,559 666,552 739,569.6 792,573 845,573 914.5,571.6" fill="none" stroke="#00e5ff" stroke-width="2" />
<polyline points="226,450.6 365,474.5 438,481 514.6,485.4 560,485.4 639,478.4 739,479.4 825,477 914.5,468.8" fill="none" stroke="#4a7ae8" stroke-width="1" />
<polyline points="172,340 206,340 262.7,337 316,337.7 382,342 455,351.6 524.5,365.5 540,370 614.6,394 667.6,404 725.6,395 772,385.8 871.5,379 881.4,374 898,372 914.5,368" fill="none" stroke="#e8143c" stroke-width="1" />
<polyline points="189,443 208,451 242,476 282.6,484.4 316,487.7 335.6,482.8 401,464.5 438,458 481.5,446 514.6,437 560,430 614.6,418 649.4,402.4 682.5,387.5 735.6,371 772,371 825,381 878,390.8 898,372.6 914.5,360" fill="none" stroke="#ff7a1a" stroke-width="2" />
<polyline points="189,446 226,448 282.6,450.6 349,453 402,452 475,450 540,450 616,444.6 666,439.7 739,433.7 825,431.4 884.7,429 914.5,425.7" fill="none" stroke="#0e8080" stroke-width="2" />
<polyline points="189,459.5 349,460 475,459 540,460 639,456.9 772,450.6 904.6,446.3 914.5,446" fill="none" stroke="#ff0000" stroke-width="3" />
<polyline points="189,461.5 349,463 475,462 540,462 639,460.5 739,457.9 914.5,454.6" fill="none" stroke="#000" stroke-width="3" />
<polyline points="172,393.6 206,394 316,401.5 402,411.5 475,419 540,428 596,437 639,440.7 679,440.7 739,433.7 825,429 884.7,424.7 914.5,419" fill="none" stroke="#000" stroke-width="2" />
<path d="M172 423.400H914" stroke="#ffff00" stroke-width="3"/>
<path d="M172.4 429V464" stroke="#1a5cc8" stroke-width="1.200"/>
<rect x="155.9" y="429" width="33" height="35" fill="#1a5cc8"/>
<path d="M207.6 467V509" stroke="#1a5cc8" stroke-width="1.200"/>
<rect x="191.1" y="467" width="33" height="31.5" fill="#1a5cc8"/>
<path d="M242.6 498V531.5" stroke="#1a5cc8" stroke-width="1.200"/>
<rect x="226.1" y="498.7" width="33" height="14.9" fill="#1a5cc8"/>
<path d="M278.4 495V519" stroke="#e61e0a" stroke-width="1.200"/>
<rect x="261.9" y="506" width="33" height="3.5" fill="#e61e0a"/>
<path d="M313.5 470V507" stroke="#e61e0a" stroke-width="1.200"/>
<rect x="297" y="495" width="33" height="6" fill="#e61e0a"/>
<path d="M348.6 454.6V492" stroke="#e61e0a" stroke-width="1.200"/>
<rect x="332.1" y="469" width="33" height="23" fill="#e61e0a"/>
<path d="M384.3 449V474.5" stroke="#e61e0a" stroke-width="1.200"/>
<rect x="367.8" y="453" width="33" height="14" fill="#e61e0a"/>
<path d="M419.6 405V463" stroke="#e61e0a" stroke-width="1.200"/>
<rect x="403.1" y="421" width="33" height="38" fill="#e61e0a"/>
<path d="M454.7 421.4V463" stroke="#1a5cc8" stroke-width="1.200"/>
<rect x="438.2" y="424" width="33" height="27" fill="#1a5cc8"/>
<path d="M490.3 400.5V459.5" stroke="#e61e0a" stroke-width="1.200"/>
<rect x="473.8" y="413" width="33" height="37.6" fill="#e61e0a"/>
<path d="M525.4 406V438" stroke="#1a5cc8" stroke-width="1.200"/>
<rect x="508.9" y="414" width="33" height="15" fill="#1a5cc8"/>
<path d="M560.8 421V448" stroke="#e61e0a" stroke-width="1.200"/>
<rect x="544.3" y="421.4" width="33" height="3.6" fill="#e61e0a"/>
<path d="M596.4 404V441.6" stroke="#e61e0a" stroke-width="1.200"/>
<rect x="579.9" y="417" width="33" height="5" fill="#e61e0a"/>
<path d="M631.5 356V413.5" stroke="#e61e0a" stroke-width="1.200"/>
<rect x="615" y="373" width="33" height="40.5" fill="#e61e0a"/>
<path d="M667.5 356V437" stroke="#1a5cc8" stroke-width="1.200"/>
<rect x="651" y="360" width="33" height="16.6" fill="#1a5cc8"/>
<path d="M702.5 325V398.4" stroke="#e61e0a" stroke-width="1.200"/>
<rect x="686" y="347.6" width="33" height="2" fill="#e61e0a"/>
<path d="M737.6 336V369" stroke="#e61e0a" stroke-width="1.200"/>
<rect x="721.1" y="352.5" width="33" height="5.2" fill="#e61e0a"/>
<path d="M773.4 343.7V385.8" stroke="#1a5cc8" stroke-width="1.200"/>
<rect x="756.9" y="352" width="33" height="18" fill="#1a5cc8"/>
<path d="M808.5 361V404.7" stroke="#1a5cc8" stroke-width="1.200"/>
<rect x="792" y="378" width="33" height="11.8" fill="#1a5cc8"/>
<path d="M843.6 378V404.7" stroke="#1a5cc8" stroke-width="1.200"/>
<rect x="827.1" y="399.8" width="33" height="1.5" fill="#1a5cc8"/>
<path d="M879.4 378.5V409.7" stroke="#e61e0a" stroke-width="1.200"/>
<rect x="862.9" y="400" width="33" height="2.8" fill="#e61e0a"/>
<path d="M914.5 268V415.7" stroke="#e61e0a" stroke-width="1.200"/>
<rect x="898" y="287" width="33" height="111.5" fill="#e61e0a"/>
<path d="M155 365.500H1848" stroke="#f8083c" stroke-width="3"/>
<path d="M155 426.500H1848" stroke="#14145a" stroke-width="3"/>
<circle cx="172" cy="333.7" r="2" fill="#0a0ae0"/>
<circle cx="207" cy="334.7" r="2" fill="#0a0ae0"/>
<circle cx="242" cy="336.7" r="2" fill="#0a0ae0"/>
<circle cx="278" cy="340.6" r="2" fill="#0a0ae0"/>
<circle cx="312.7" cy="343.6" r="2" fill="#0a0ae0"/>
<circle cx="348" cy="349" r="2" fill="#0a0ae0"/>
<circle cx="383.7" cy="352.6" r="2" fill="#0a0ae0"/>
<circle cx="419" cy="357" r="2" fill="#0a0ae0"/>
<circle cx="454" cy="360" r="2" fill="#0a0ae0"/>
<circle cx="490" cy="364" r="2" fill="#0a0ae0"/>
<circle cx="525" cy="370" r="2" fill="#0a0ae0"/>
<circle cx="560.5" cy="374.6" r="2" fill="#0a0ae0"/>
<circle cx="596" cy="380.9" r="2" fill="#0a0ae0"/>
<circle cx="667" cy="383.5" r="2" fill="#0a0ae0"/>
<circle cx="701.7" cy="379.9" r="2" fill="#0a0ae0"/>
<circle cx="737" cy="376.6" r="2" fill="#0a0ae0"/>
<circle cx="773" cy="372.6" r="2" fill="#0a0ae0"/>
<circle cx="807.8" cy="371" r="2" fill="#0a0ae0"/>
<circle cx="842.6" cy="370" r="2" fill="#0a0ae0"/>
<circle cx="878.7" cy="367" r="2" fill="#0a0ae0"/>
<circle cx="172" cy="402" r="2" fill="#e8141e"/>
<circle cx="207" cy="412.8" r="2" fill="#e8141e"/>
<circle cx="242" cy="429" r="2" fill="#e8141e"/>
<circle cx="278" cy="443.6" r="2" fill="#e8141e"/>
<circle cx="312.7" cy="455" r="2" fill="#e8141e"/>
<circle cx="490" cy="453" r="2" fill="#e8141e"/>
<circle cx="525" cy="446.3" r="2" fill="#e8141e"/>
<circle cx="560.5" cy="442.3" r="2" fill="#e8141e"/>
<circle cx="596" cy="439" r="2" fill="#e8141e"/>
<circle cx="667.6" cy="422" r="2" fill="#e8141e"/>
<circle cx="701.7" cy="414.7" r="2" fill="#e8141e"/>
<circle cx="737" cy="401.7" r="2" fill="#e8141e"/>
<circle cx="773" cy="392.8" r="2" fill="#e8141e"/>
<circle cx="842.6" cy="388.8" r="2" fill="#e8141e"/>
<circle cx="878.7" cy="390.8" r="2" fill="#e8141e"/>
<polyline points="918,400 921,500 926,620 928,680" fill="none" stroke="#ffee00" stroke-width="1.2" />
<polygon points="348,500 362,513 355.5,513 355.5,528 340.5,528 340.5,513 334,513" fill="#000" />
<polygon points="384.3,483.4 398.8,497.4 391.8,497.4 391.8,512 376.8,512 376.8,497.4 369.8,497.4" fill="#ff0000" />
<polygon points="419,467 433.5,481 426.5,481 426.5,495.3 411.5,495.3 411.5,481 404.5,481" fill="#ff0000" />
<polygon points="596.3,446 611.3,460 603.8,460 603.8,474.5 588.8,474.5 588.8,460 581.3,460" fill="#d8102a" />
<polygon points="631,423.8 644.4,450.6 618,450.6" fill="#0a7a0a" />
<polygon points="914.5,425.4 928,450.6 901,450.6" fill="#0a7a0a" />
<path d="M1429.500 139V867" stroke="#e02020"/>
<path d="M871 341l5 17 9-13" stroke="#000" fill="none"/>
<path d="M274 471q8 8 16 3q6-2 10-7M279 470q6 8 14 7" stroke="#000" fill="none"/>
<text x="778" y="279" fill="#e8141e">최고 3,720 (02/23)</text>
<text x="276" y="528" fill="#1545c8">최저 2,720 (01/25)</text>
<path d="M155 680.500H1848" stroke="#8e8e8e"/><path d="M155 758.500H1848" stroke="#d0d0d0"/><path d="M155 760.500H1848" stroke="#8e8e8e"/>
<rect x="155.9" y="751" width="33" height="8" fill="#e61e0a"/>
<rect x="191.233" y="751" width="33" height="8" fill="#e61e0a"/>
<rect x="226.566" y="753.7" width="33" height="5.3" fill="#1a5cc8"/>
<rect x="261.899" y="753.7" width="33" height="5.3" fill="#1a5cc8"/>
<rect x="297.232" y="750" width="33" height="9" fill="#e61e0a"/>
<rect x="332.565" y="753.7" width="33" height="5.3" fill="#1a5cc8"/>
<rect x="367.898" y="754.8" width="33" height="4.2" fill="#1a5cc8"/>
<rect x="403.231" y="753" width="33" height="6" fill="#e61e0a"/>
<rect x="438.564" y="753.7" width="33" height="5.3" fill="#1a5cc8"/>
<rect x="473.897" y="750" width="33" height="9" fill="#e61e0a"/>
<rect x="509.23" y="754.8" width="33" height="4.2" fill="#1a5cc8"/>
<rect x="544.563" y="754.8" width="33" height="4.2" fill="#1a5cc8"/>
<rect x="579.896" y="754.8" width="33" height="4.2" fill="#e61e0a"/>
<rect x="615.229" y="746" width="33" height="13" fill="#e61e0a"/>
<rect x="650.562" y="731" width="33" height="28" fill="#e61e0a"/>
<rect x="685.895" y="721" width="33" height="38" fill="#e61e0a"/>
<rect x="721.228" y="747" width="33" height="12" fill="#1a5cc8"/>
<rect x="756.561" y="751.5" width="33" height="7.5" fill="#1a5cc8"/>
<rect x="791.894" y="753" width="33" height="6" fill="#1a5cc8"/>
<rect x="827.227" y="753" width="33" height="6" fill="#1a5cc8"/>
<rect x="862.56" y="754.5" width="33" height="4.5" fill="#1a5cc8"/>
<rect x="897.893" y="693.7" width="33" height="65.3" fill="#e61e0a"/>
<polyline points="172,752.5 400,752.5 600,753 914,750" fill="none" stroke="#e8a000" stroke-width="1" />
<polyline points="172,754 600,754 914,752.5" fill="none" stroke="#0a8a3a" stroke-width="1" />
<polyline points="596,755 634,752 690,743 764.6,738.8 820.6,743 876.5,750.7 914,741.4" fill="none" stroke="#e040d0" stroke-width="1" />
<polygon points="172,773.4 249.5,791 316,807.6 402,819 481.6,828.5 548,833 614,834.8 650,834.8 650,836.5 581,840.8 514.7,843.4 448,843.4 402,840.8 355.6,835.8 316,828.5 249.5,809 172,785.4" fill="#c4c4c4" />
<polygon points="172,773.4 249.5,791 316,807.6 402,819 481.6,828.5 548,833 614,834.8 650,834.8 650,835.5 614,836.5 548,836.5 481.6,833.5 402,826 316,813 249.5,794 172,774.5" fill="#6a6a6a" />
<polyline points="172,773.4 249.5,791 316,807.6 402,819 481.6,828.5 548,833 614,834.8 650,834.8" fill="none" stroke="#1a1a1a" stroke-width="2" />
<polyline points="172,785.4 249.5,809 316,828.5 355.6,835.8 402,840.8 448,843.4 514.7,843.4 581,840.8 650,836.5" fill="none" stroke="#9acd32" stroke-width="1" />
<polygon points="650,836 746,823 820.6,815.6 914,810 949,833 949,833 914,815.6 820.6,823 746,830.5 650,838" fill="#ff9a1a" />
<polyline points="650,836 746,823 820.6,815.6 914,810 949,833" fill="none" stroke="#8cc818" stroke-width="3" />
<polyline points="650,838 746,830.5 820.6,823 914,815.6 949,833" fill="none" stroke="#3a50d8" stroke-width="1.5" />
<path d="M155 835.500H1848" stroke="#000" stroke-dasharray="3 2"/>
<polyline points="172,816.9 206,832.5 249.5,850.7 282.6,859 312.5,864 355.6,864 402,857.3 448,851.7 481.6,847.4 514.7,842.4 548,838.4 581,834.8 614,825.8 650,819.2 690,808.6 746,798.5 776,796.6 820.6,799 876.5,806.7 914,790.7" fill="none" stroke="#ff7a1a" stroke-width="1" />
<path d="M1848 186.5h5" stroke="#556"/>
<text x="1856" y="190.5" fill="#222" letter-spacing="-0.4">25,0%</text>
<path d="M1848 195.04h3" stroke="#8896aa"/>
<path d="M1848 203.58h3" stroke="#8896aa"/>
<path d="M1848 212.12h3" stroke="#8896aa"/>
<path d="M1848 220.66h3" stroke="#8896aa"/>
<path d="M1848 229.2h5" stroke="#556"/>
<text x="1856" y="233.2" fill="#222" letter-spacing="-0.4">20,0%</text>
<path d="M1848 237.74h3" stroke="#8896aa"/>
<path d="M1848 246.28h3" stroke="#8896aa"/>
<path d="M1848 254.82h3" stroke="#8896aa"/>
<path d="M1848 263.36h3" stroke="#8896aa"/>
<path d="M1848 272h5" stroke="#556"/>
<text x="1856" y="276" fill="#222" letter-spacing="-0.4">15,0%</text>
<path d="M1848 280.54h3" stroke="#8896aa"/>
<path d="M1848 289.08h3" stroke="#8896aa"/>
<path d="M1848 297.62h3" stroke="#8896aa"/>
<path d="M1848 306.16h3" stroke="#8896aa"/>
<path d="M1848 314.6h5" stroke="#556"/>
<text x="1856" y="318.6" fill="#222" letter-spacing="-0.4">10,0%</text>
<path d="M1848 323.14h3" stroke="#8896aa"/>
<path d="M1848 331.68h3" stroke="#8896aa"/>
<path d="M1848 340.22h3" stroke="#8896aa"/>
<path d="M1848 348.76h3" stroke="#8896aa"/>
<path d="M1848 357.3h5" stroke="#556"/>
<text x="1856" y="361.3" fill="#222" letter-spacing="-0.4">5,0%</text>
<path d="M1848 365.84h3" stroke="#8896aa"/>
<path d="M1848 374.38h3" stroke="#8896aa"/>
<path d="M1848 382.92h3" stroke="#8896aa"/>
<path d="M1848 391.46h3" stroke="#8896aa"/>
<path d="M1848 400h5" stroke="#556"/>
<text x="1856" y="404" fill="#222" letter-spacing="-0.4">0,0%</text>
<path d="M1848 408.54h3" stroke="#8896aa"/>
<path d="M1848 417.08h3" stroke="#8896aa"/>
<path d="M1848 425.62h3" stroke="#8896aa"/>
<path d="M1848 434.16h3" stroke="#8896aa"/>
<path d="M1848 442.7h5" stroke="#556"/>
<text x="1856" y="446.7" fill="#222" letter-spacing="-0.4">-5,0%</text>
<path d="M1848 451.24h3" stroke="#8896aa"/>
<path d="M1848 459.78h3" stroke="#8896aa"/>
<path d="M1848 468.32h3" stroke="#8896aa"/>
<path d="M1848 476.86h3" stroke="#8896aa"/>
<path d="M1848 485.4h5" stroke="#556"/>
<text x="1856" y="489.4" fill="#222" letter-spacing="-0.4">-10,0%</text>
<path d="M1848 493.94h3" stroke="#8896aa"/>
<path d="M1848 502.48h3" stroke="#8896aa"/>
<path d="M1848 511.02h3" stroke="#8896aa"/>
<path d="M1848 519.56h3" stroke="#8896aa"/>
<path d="M1848 528h5" stroke="#556"/>
<text x="1856" y="532" fill="#222" letter-spacing="-0.4">-15,0%</text>
<path d="M1848 536.54h3" stroke="#8896aa"/>
<path d="M1848 545.08h3" stroke="#8896aa"/>
<path d="M1848 553.62h3" stroke="#8896aa"/>
<path d="M1848 562.16h3" stroke="#8896aa"/>
<path d="M1848 570.8h5" stroke="#556"/>
<text x="1856" y="574.8" fill="#222" letter-spacing="-0.4">-20,0%</text>
<path d="M1848 579.34h3" stroke="#8896aa"/>
<path d="M1848 587.88h3" stroke="#8896aa"/>
<path d="M1848 596.42h3" stroke="#8896aa"/>
<path d="M1848 604.96h3" stroke="#8896aa"/>
<path d="M1848 613.5h5" stroke="#556"/>
<text x="1856" y="617.5" fill="#222" letter-spacing="-0.4">-25,0%</text>
<path d="M1848 622.04h3" stroke="#8896aa"/>
<path d="M1848 630.58h3" stroke="#8896aa"/>
<path d="M1848 639.12h3" stroke="#8896aa"/>
<path d="M1848 647.66h3" stroke="#8896aa"/>
<path d="M1848 656.2h5" stroke="#556"/>
<text x="1856" y="660.2" fill="#222" letter-spacing="-0.4">-30,0%</text>
<path d="M1848 664.74h3" stroke="#8896aa"/>
<path d="M1848 673.28h3" stroke="#8896aa"/>
<path d="M1848 781h5" stroke="#556"/>
<text x="1856" y="785" fill="#222" letter-spacing="-0.4">100,00</text>
<path d="M1848 808.6h5" stroke="#556"/>
<text x="1856" y="812.6" fill="#222" letter-spacing="-0.4">50,00</text>
<path d="M1848 835h5" stroke="#556"/>
<text x="1856" y="839" fill="#222" letter-spacing="-0.4">0,00</text>
<text x="1850" y="150" fill="#e0190d" letter-spacing="-0.5">LC:34,01</text>
<text x="1850" y="163" fill="#1a5cc8" letter-spacing="-0.5">HC:-2,02</text>
<rect x="1853" y="282" width="58" height="11" fill="#e0190d"/><text x="1856" y="292" fill="#fff" letter-spacing="-0.4">3,645</text>
<text x="1856" y="303" fill="#e0190d" letter-spacing="-0.4">13,20%</text>
<rect x="1852.500" y="490.500" width="58" height="16" fill="#ffe066" stroke="#333"/><text x="1896" y="503" text-anchor="end" fill="#222">2,850</text>
<rect x="1853" y="688" width="58" height="11" fill="#e0190d"/><text x="1856" y="698" fill="#fff" letter-spacing="-0.4">4,769K</text>
<text x="1856" y="710" fill="#e0190d" letter-spacing="-0.4">1830,57%</text>
<text x="1843" y="624" text-anchor="end" fill="#0e8a6a" letter-spacing="-0.3">전환선 9: 3,780</text>
<text x="1843" y="636" text-anchor="end" fill="#555" letter-spacing="-0.3">기준선 26: 3,537</text>
<text x="1843" y="648" text-anchor="end" fill="#a020c0" letter-spacing="-0.3">후행스팬 26: 3,645</text>
<text x="1843" y="660" text-anchor="end" fill="#f4a46c" letter-spacing="-0.3">선행스팬1 9,26: 3,537</text>
<text x="1843" y="672" text-anchor="end" fill="#5a80e0" letter-spacing="-0.3">선행스팬2 52,26: 3,168</text>
<text x="1843" y="624" text-anchor="end" fill="#000" letter-spacing="-0.3">BB3: 3,780</text>
<text x="1843" y="636" text-anchor="end" fill="#e020d0" letter-spacing="-0.3">BB2: 3,537</text>
<text x="1843" y="648" text-anchor="end" fill="#e8143c" letter-spacing="-0.3">BB1: 3,845</text>
<text x="1843" y="660" text-anchor="end" fill="#ff9a00" letter-spacing="-0.3">BB2UP: 3,537</text>
<text x="1843" y="672" text-anchor="end" fill="#ffff00" letter-spacing="-0.3">BB3UP: 3,168</text>
<text x="1843" y="811" text-anchor="end" fill="#ff6a00" letter-spacing="-0.3">MACD SIGNAL(일목균형표)[0]: 82</text>
<text x="1843" y="823" text-anchor="end" fill="#e020d0">: 0</text>
<text x="1843" y="835" text-anchor="end" fill="#e8143c">: 0</text>
<text x="1843" y="847" text-anchor="end" fill="#9acd32" letter-spacing="-0.3">시그널(9): 53</text>
<text x="1843" y="858" text-anchor="end" fill="#888" font-size="11">-9: 36</text>
<path d="M402.500 867V885" stroke="#8c9cb4"/><path d="M1848.500 867V885" stroke="#8c9cb4"/>
<text x="157" y="880" fill="#333" letter-spacing="-0.4">2024/01</text><text x="404" y="880" fill="#333" letter-spacing="-0.4">02</text><text x="1856" y="880" fill="#333" letter-spacing="-0.4">02/23</text>
<rect x="1385.500" y="867.500" width="87" height="17" fill="#ffe066" stroke="#222"/><text x="1388" y="880" fill="#222" letter-spacing="-0.5">2024/02/23(금)</text>
<rect x="158" y="686" width="4" height="5" fill="#aaa" stroke="#666" stroke-width=".8"/>
<text x="169" y="694" fill="#0e8a8a" letter-spacing="-0.3">거래량</text>
<text x="213" y="694" fill="#e020d0" letter-spacing="-0.3">단순 5</text>
<text x="255" y="694" fill="#f0a000" letter-spacing="-0.3">20</text>
<text x="275" y="694" fill="#0a8a3a" letter-spacing="-0.3">60</text>
<text x="296" y="694" fill="#666" letter-spacing="-0.3">120</text>
<text x="159" y="707" fill="#222" letter-spacing="-0.5">4,769,378주(1,830,57%)</text>
<text x="161" y="774" fill="#800080" letter-spacing="-0.3">시그널(9)</text>
<text x="221" y="774" fill="#222" letter-spacing="-0.3">-9</text>
<text x="241" y="774" fill="#2a60d8" letter-spacing="-0.3">시그널(9)</text>
<text x="301" y="774" fill="#555" letter-spacing="-0.3">-7</text>
<text x="321" y="774" fill="#f0a000" letter-spacing="-0.3">시그널(9)</text>
<text x="381" y="774" fill="#999" letter-spacing="-0.3">-5</text>
<text x="409" y="774" fill="#ff6a00" letter-spacing="-0.3">MACD SIGNAL(일목균형표)[0]</text>
<text x="589" y="774" fill="#9acd32" letter-spacing="-0.3">시그널(9)</text>
<text x="649" y="774" fill="#aaa" letter-spacing="-0.3">-3</text>
<rect x="398" y="766" width="4" height="5" fill="#aaa" stroke="#666" stroke-width=".8"/>
<rect x="166.500" y="140.500" width="63" height="13" fill="#f4f4f4" stroke="#aaa"/><text x="169" y="151.500" fill="#222" letter-spacing="-0.2">아이즈비전</text>
<text x="244" y="151.500" fill="#ff6a00" letter-spacing="-0.25">종가 지수 5</text>
<text x="315" y="151.500" fill="#0e8a8a" letter-spacing="-0.25">60</text>
<text x="336" y="151.500" fill="#e8141e" letter-spacing="-0.25">112</text>
<text x="362" y="151.500" fill="#000" letter-spacing="-0.25">224</text>
<text x="388" y="151.500" fill="#ffee00" letter-spacing="-0.25">448</text>
<text x="421" y="151.500" fill="#ffaa00" letter-spacing="-0.25">수급시작2</text>
<text x="491" y="151.500" fill="#0a9a0a" letter-spacing="-0.25">수급시작2</text>
<text x="562" y="151.500" fill="#e8141e" letter-spacing="-0.25">112일선 터치돌파</text>
<text x="671" y="151.500" fill="#000" letter-spacing="-0.25">112일선 터치돌파</text>
<text x="781" y="151.500" fill="#000" letter-spacing="-0.25">112일선 터치돌파</text>
<text x="891" y="151.500" fill="#e8141e" letter-spacing="-0.25">장기이평 골든크로스 거래량 2배</text>
<text x="1082" y="151.500" fill="#f010e0" letter-spacing="-0.25">슈팅선?</text>
<text x="1131" y="151.500" fill="#f4a46c" letter-spacing="-0.25">선행스팬1 9,26</text>
<text x="1219" y="151.500" fill="#6a8fe8" letter-spacing="-0.25">선행스팬2 52,26</text>
<text x="1321" y="151.500" fill="#e8141e" letter-spacing="-0.25">McGinley Dynamic</text>
<text x="1433.7" y="151.500" fill="#e8141e" letter-spacing="-0.25">10,125</text>
<text x="1483" y="151.500" fill="#e8141e" letter-spacing="-0.25">MACD 0선 상향돌파</text>
<text x="1609" y="151.500" fill="#0a0ae0" letter-spacing="-0.25">이거맞냐?</text>
<text x="1680" y="151.500" fill="#0a0ae0" letter-spacing="-0.25">10% Oops 매도</text>
<rect x="158" y="144" width="4" height="5" fill="#aaa" stroke="#666" stroke-width=".8"/>
<rect x="234" y="144" width="4" height="5" fill="#aaa" stroke="#666" stroke-width=".8"/>
<rect x="411" y="144" width="4" height="5" fill="#aaa" stroke="#666" stroke-width=".8"/>
<rect x="481" y="144" width="4" height="5" fill="#aaa" stroke="#666" stroke-width=".8"/>
<rect x="552" y="144" width="4" height="5" fill="#aaa" stroke="#666" stroke-width=".8"/>
<rect x="661" y="144" width="4" height="5" fill="#aaa" stroke="#666" stroke-width=".8"/>
<rect x="771" y="144" width="4" height="5" fill="#aaa" stroke="#666" stroke-width=".8"/>
<rect x="881" y="144" width="4" height="5" fill="#aaa" stroke="#666" stroke-width=".8"/>
<rect x="1072" y="144" width="4" height="5" fill="#aaa" stroke="#666" stroke-width=".8"/>
<rect x="1312" y="144" width="4" height="5" fill="#aaa" stroke="#666" stroke-width=".8"/>
<rect x="1474" y="144" width="4" height="5" fill="#aaa" stroke="#666" stroke-width=".8"/>
<rect x="1600" y="144" width="4" height="5" fill="#aaa" stroke="#666" stroke-width=".8"/>
<rect x="1670" y="144" width="4" height="5" fill="#aaa" stroke="#666" stroke-width=".8"/>
<text x="172" y="163.500" fill="#222" letter-spacing="-0.25">수급시작 강세패턴</text>
<text x="285" y="163.500" fill="#000" letter-spacing="-0.25">BB중심</text>
<text x="341" y="163.500" fill="#000" letter-spacing="-0.25">BB3</text>
<text x="371" y="163.500" fill="#f010e0" letter-spacing="-0.25">BB2</text>
<text x="401" y="163.500" fill="#e8143c" letter-spacing="-0.25">BB1</text>
<text x="431" y="163.500" fill="#ff9a00" letter-spacing="-0.25">BB2UP</text>
<text x="477" y="163.500" fill="#ffff00" letter-spacing="-0.25">BB3UP</text>
<text x="531" y="163.500" fill="#000" letter-spacing="-0.25">BB중심</text>
<text x="587" y="163.500" fill="#00e5ff" letter-spacing="-0.25">트리플매수권3</text>
<text x="673" y="163.500" fill="#00e5ff" letter-spacing="-0.25">트리플매수권2</text>
<text x="759" y="163.500" fill="#3060ff" letter-spacing="-0.25">트리플매수권1</text>
<text x="845" y="163.500" fill="#00c8ff" letter-spacing="-0.25">트리플매수권2</text>
<text x="931" y="163.500" fill="#00b8f0" letter-spacing="-0.25">트리플매수권1</text>
<rect x="158" y="156" width="4" height="5" fill="#aaa" stroke="#666" stroke-width=".8"/>
<rect x="275" y="156" width="4" height="5" fill="#aaa" stroke="#666" stroke-width=".8"/>
<rect x="331" y="156" width="4" height="5" fill="#aaa" stroke="#666" stroke-width=".8"/>
<rect x="521" y="156" width="4" height="5" fill="#aaa" stroke="#666" stroke-width=".8"/>
<rect x="577" y="156" width="4" height="5" fill="#aaa" stroke="#666" stroke-width=".8"/>
<rect x="160.500" y="158.500" width="12" height="12" fill="#fff" stroke="#222" stroke-width="1.400"/><path d="M162 162h9M163.500 162v8M166.500 162v8M169.500 162v8M162 165h9M162 168h9" stroke="#444" stroke-width=".8"/>
</svg>
<div class="btn" style="left:155px;top:888px;width:16px;height:16px;line-height:14px;font-size:9px;">◀</div>
<div style="left:1426px;top:888px;width:101px;height:16px;background:#f0f0f0;border:1px solid #999;"></div>
<div class="btn" style="left:1528px;top:888px;width:16px;height:16px;"><svg width="14" height="14" style="left:0;top:0"><path d="M4 2v9l6-4.500z" fill="#000"/></svg></div>
<div class="btn" style="left:1545px;top:888px;width:16px;height:16px;"><svg width="14" height="14" style="left:0;top:0"><path d="M7 2v9L1.500 6.500zM13 2v9L7.500 6.500z" fill="#000"/></svg></div>
<div class="btn" style="left:1562px;top:888px;width:16px;height:16px;"><svg width="14" height="14" style="left:0;top:0"><rect x="3.500" y="3" width="7" height="7" fill="#000"/></svg></div>
<div class="btn" style="left:1579px;top:888px;width:16px;height:16px;"><svg width="14" height="14" style="left:0;top:0"><path d="M1.500 2v9L7 6.500zM7.500 2v9L13 6.500z" fill="#000"/></svg></div>
<svg style="left:1600px;top:888px" width="72" height="16"><path d="M2 5h68" stroke="#888" stroke-width="2"/><rect x="7" y="1" width="4" height="9" fill="#eee" stroke="#555"/><path d="M4 12v3" stroke="#444"/><path d="M10 12v3" stroke="#444"/><path d="M16 12v3" stroke="#444"/><path d="M22 12v3" stroke="#444"/><path d="M28 12v3" stroke="#444"/><path d="M34 12v3" stroke="#444"/><path d="M40 12v3" stroke="#444"/><path d="M46 12v3" stroke="#444"/><path d="M52 12v3" stroke="#444"/><path d="M58 12v3" stroke="#444"/><path d="M64 12v3" stroke="#444"/><path d="M70 12v3" stroke="#444"/></svg>
<div style="left:1744px;top:887px;width:1px;height:18px;background:#999;"></div>
<svg style="left:1678px;top:888px" width="15" height="15"><rect x="1.500" y="2.500" width="9" height="8" fill="#fff" stroke="#888"/><rect x="7" y="8" width="6" height="5" fill="#fff" stroke="#333"/><path d="M10 8v5M7 10.500h6" stroke="#333"/></svg>
<svg style="left:1694px;top:888px" width="15" height="15"><path d="M1 9l4-4 3 3 5-5" stroke="#888" fill="none"/><path d="M2 3l9 8" stroke="#555"/><circle cx="4" cy="11" r="2.200" fill="none" stroke="#333" stroke-width="1.600"/></svg>
<svg style="left:1712px;top:888px" width="15" height="15"><rect x="1.500" y="2.500" width="8" height="7" fill="#fff" stroke="#555"/><rect x="5.500" y="6.500" width="8" height="7" fill="#fff" stroke="#333" stroke-width="1.400"/></svg>
<svg style="left:1728px;top:888px" width="15" height="15"><rect x="1.500" y="2.500" width="12" height="10" fill="none" stroke="#999" stroke-dasharray="2 1"/><path d="M2 10l4-4 3 2 4-5" stroke="#888" fill="none"/></svg>
<svg style="left:1747px;top:888px" width="15" height="15"><path d="M2 2h9M3 2v11M3 3l8 8" stroke="#444" stroke-width="1.300" fill="none"/></svg>
<svg style="left:1765px;top:888px" width="15" height="15"><path d="M1 6h12" stroke="#666"/><path d="M1 11l3-4 3 3 3-5 3 3" stroke="#888" fill="none"/></svg>
<svg style="left:1782px;top:888px" width="15" height="15"><path d="M3 1v12M1 9l3-4 3 5 3-3 3 2" stroke="#666" fill="none"/></svg>
<svg style="left:1798px;top:888px" width="15" height="15"><path d="M1 12l5-8 2 4 5-7" stroke="#666" stroke-width="1.400" fill="none"/><path d="M1 13l4-4 3 2 5-6" stroke="#999" fill="none"/></svg>
<svg style="left:1815px;top:888px" width="15" height="15"><rect x="3" y="2" width="9" height="5" rx="1.500" transform="rotate(-30 7 5)" fill="#fff" stroke="#444"/><path d="M8 12v2M10 11v3M12 10v4" stroke="#444"/></svg>
<svg style="left:1831px;top:888px" width="15" height="15"><rect x="1.500" y="4.500" width="9" height="8" fill="#fff" stroke="#444"/><rect x="4.500" y="1.500" width="9" height="8" fill="none" stroke="#444"/><path d="M3 10l2-2 2 1 2-3" stroke="#444" fill="none"/></svg>
<svg style="left:1849px;top:888px" width="15" height="15"><circle cx="5.500" cy="5.500" r="4" fill="none" stroke="#444" stroke-width="1.300"/><path d="M8.500 8.500l4.500 4.500" stroke="#444" stroke-width="1.800"/></svg>
<svg style="left:1866px;top:888px" width="15" height="15"><path d="M2 8h10" stroke="#333" stroke-width="2"/></svg>
<svg style="left:1882px;top:888px" width="15" height="15"><path d="M1 8h12M7 2v12" stroke="#333" stroke-width="2"/></svg>
<!-- s_left_bottom -->
<div style="left:3px;top:906px;width:1914px;height:27px;background:#e2e2e2;"></div>
<div class="t" style="left:5px;top:905px;color:#666;font-size:12px;font-weight:bold;">×</div><div style="left:6px;top:918px;width:2px;height:12px;background:#fff;border-right:1px solid #888;"></div><div style="left:9px;top:918px;width:2px;height:12px;background:#fff;border-right:1px solid #888;"></div>
<div style="left:19px;top:911px;width:13px;height:14px;background:#5a78c0;border-radius:2px;color:#fff;font-size:10px;font-weight:bold;text-align:center;line-height:14px;">1</div>
<div class="inp" style="left:35px;top:908px;width:67px;height:20px;padding-left:3px;letter-spacing:-0.3px;line-height:18px;">5731-0181</div>
<div class="btn" style="left:101px;top:908px;width:14px;height:20px;"><svg width="9" height="5" style="left:2px;top:7px"><path d="M0 0h8l-4 4.500z" fill="#555"/></svg></div>
<div class="inp" style="left:116px;top:908px;width:54px;height:20px;"></div>
<div class="inp" style="left:173px;top:908px;width:47px;height:20px;padding-left:2px;letter-spacing:-0.4px;line-height:18px;">031310</div>
<div class="btn" style="left:219px;top:908px;width:14px;height:20px;"><svg width="9" height="5" style="left:2px;top:7px"><path d="M0 0h8l-4 4.500z" fill="#555"/></svg></div>
<div class="btn" style="left:233px;top:908px;width:18px;height:20px;"><svg width="14" height="14" viewBox="0 0 14 14" style="left:2px;top:2px"><circle cx="5.500" cy="5.500" r="3.800" fill="none" stroke="#555" stroke-width="1.500"/><path d="M8.300 8.300l4 4" stroke="#555" stroke-width="2"/></svg></div>
<div style="left:253px;top:908px;width:109px;height:20px;background:#fff;border:1px solid #9a9a9a;"></div>
<div style="left:255px;top:910px;width:15px;height:16px;background:#b565d6;color:#fff;text-align:center;line-height:16px;">증</div>
<div style="left:271px;top:910px;width:28px;height:16px;background:#dcdcdc;line-height:16px;letter-spacing:-0.5px;">100%</div>
<div class="t" style="left:301px;top:911px;color:#a0104a;letter-spacing:-0.3px;">아이즈비전</div>
<svg style="left:354px;top:920px" width="6" height="6"><path d="M6 0v6H0z" fill="#888"/></svg>
<div style="left:366px;top:906px;width:298px;height:24px;background:#f5d3cc;border-left:1px solid #c8c8c8;"></div>
<div class="t" style="left:370px;top:910px;color:#111;">보통&nbsp;&nbsp;&nbsp; 현재가&nbsp;&nbsp;&nbsp;&nbsp; 현100%</div>
<div style="left:664px;top:906px;width:300px;height:24px;background:#c9dff5;"></div>
<div class="t" style="left:668px;top:910px;color:#111;">보통&nbsp;&nbsp;&nbsp; 현재가&nbsp;&nbsp;&nbsp;&nbsp; 100%</div>
<div style="left:964px;top:906px;width:299px;height:24px;background:#dde8c2;border-left:1px solid #b8c0a8;"></div>
<div class="t" style="left:995px;top:910px;color:#111;">현재가&nbsp;&nbsp;&nbsp;&nbsp; 잔량전부</div>
<div style="left:1263px;top:906px;width:298px;height:24px;background:#f0dfc0;border-left:1px solid #c8b898;"></div>
<div class="t" style="left:1335px;top:910px;color:#111;">잔량전부</div>
<svg style="left:1870px;top:911px" width="14" height="16"><path d="M3 1h8v2H9.500v5l2.500 2v1.500H8V16H6v-4.500H2V10l2.500-2V3H3z" fill="#555"/></svg>
<div style="left:3px;top:933px;width:1914px;height:28px;background:#e4e4e4;border-top:1px solid #f8f8f8;"></div>
<div class="t" style="left:5px;top:933px;color:#666;font-size:12px;font-weight:bold;">×</div><div style="left:6px;top:946px;width:2px;height:12px;background:#fff;border-right:1px solid #888;"></div><div style="left:9px;top:946px;width:2px;height:12px;background:#fff;border-right:1px solid #888;"></div>
<div style="left:122px;top:936px;width:1px;height:24px;background:#cfcfcf;"></div>
<div style="left:123px;top:936px;width:1px;height:24px;background:#f6f6f6;"></div>
<div style="left:19px;top:940px;width:13px;height:14px;background:#5a78c0;border-radius:2px;color:#fff;font-size:10px;font-weight:bold;text-align:center;line-height:14px;">1</div>
<div class="t" style="left:38px;top:941px;color:#333;letter-spacing:-0.3px;">시간외현재가</div>
<div style="left:231px;top:936px;width:1px;height:24px;background:#cfcfcf;"></div>
<div style="left:232px;top:936px;width:1px;height:24px;background:#f6f6f6;"></div>
<div style="left:128px;top:940px;width:13px;height:14px;background:#5a78c0;border-radius:2px;color:#fff;font-size:10px;font-weight:bold;text-align:center;line-height:14px;">1</div>
<div class="t" style="left:147px;top:941px;color:#333;letter-spacing:-0.3px;">종합시황</div>
<div style="left:340px;top:936px;width:1px;height:24px;background:#cfcfcf;"></div>
<div style="left:341px;top:936px;width:1px;height:24px;background:#f6f6f6;"></div>
<div style="left:237px;top:940px;width:13px;height:14px;background:#5a78c0;border-radius:2px;color:#fff;font-size:10px;font-weight:bold;text-align:center;line-height:14px;">1</div>
<div class="t" style="left:256px;top:941px;color:#333;letter-spacing:-0.3px;">일별동향/차트</div>
<div style="left:449px;top:936px;width:1px;height:24px;background:#cfcfcf;"></div>
<div style="left:450px;top:936px;width:1px;height:24px;background:#f6f6f6;"></div>
<div style="left:346px;top:940px;width:13px;height:14px;background:#5a78c0;border-radius:2px;color:#fff;font-size:10px;font-weight:bold;text-align:center;line-height:14px;">1</div>
<div class="t" style="left:365px;top:941px;color:#333;letter-spacing:-0.3px;">특이종목(T)</div>
<div style="left:558px;top:936px;width:1px;height:24px;background:#cfcfcf;"></div>
<div style="left:559px;top:936px;width:1px;height:24px;background:#f6f6f6;"></div>
<div style="left:455px;top:940px;width:13px;height:14px;background:#5a78c0;border-radius:2px;color:#fff;font-size:10px;font-weight:bold;text-align:center;line-height:14px;">1</div>
<div class="t" style="left:474px;top:941px;color:#333;letter-spacing:-0.3px;">투자자별매매종</div>
<div style="left:667px;top:936px;width:1px;height:24px;background:#cfcfcf;"></div>
<div style="left:668px;top:936px;width:1px;height:24px;background:#f6f6f6;"></div>
<div style="left:564px;top:940px;width:13px;height:14px;background:#5a78c0;border-radius:2px;color:#fff;font-size:10px;font-weight:bold;text-align:center;line-height:14px;">1</div>
<div class="t" style="left:583px;top:941px;color:#333;letter-spacing:-0.3px;">상하한가실시간</div>
<div style="left:776px;top:936px;width:1px;height:24px;background:#cfcfcf;"></div>
<div style="left:777px;top:936px;width:1px;height:24px;background:#f6f6f6;"></div>
<div style="left:673px;top:940px;width:13px;height:14px;background:#5a78c0;border-radius:2px;color:#fff;font-size:10px;font-weight:bold;text-align:center;line-height:14px;">1</div>
<div class="t" style="left:692px;top:941px;color:#333;letter-spacing:-0.3px;">연속순매매상위</div>
<div style="left:885px;top:936px;width:1px;height:24px;background:#cfcfcf;"></div>
<div style="left:886px;top:936px;width:1px;height:24px;background:#f6f6f6;"></div>
<div style="left:782px;top:940px;width:13px;height:14px;background:#5a78c0;border-radius:2px;color:#fff;font-size:10px;font-weight:bold;text-align:center;line-height:14px;">1</div>
<div class="t" style="left:801px;top:941px;color:#333;letter-spacing:-0.3px;">시간외등락률순</div>
<div style="left:994px;top:936px;width:1px;height:24px;background:#cfcfcf;"></div>
<div style="left:995px;top:936px;width:1px;height:24px;background:#f6f6f6;"></div>
<div style="left:891px;top:940px;width:13px;height:14px;background:#5a78c0;border-radius:2px;color:#fff;font-size:10px;font-weight:bold;text-align:center;line-height:14px;">1</div>
<div class="t" style="left:910px;top:941px;color:#333;letter-spacing:-0.3px;">시가총액상위</div>
<div style="left:1103px;top:936px;width:1px;height:24px;background:#cfcfcf;"></div>
<div style="left:1104px;top:936px;width:1px;height:24px;background:#f6f6f6;"></div>
<div style="left:1000px;top:940px;width:13px;height:14px;background:#5a78c0;border-radius:2px;color:#fff;font-size:10px;font-weight:bold;text-align:center;line-height:14px;">1</div>
<div class="t" style="left:1019px;top:941px;color:#333;letter-spacing:-0.3px;">주식호가주문</div>
<div style="left:1212px;top:936px;width:1px;height:24px;background:#cfcfcf;"></div>
<div style="left:1213px;top:936px;width:1px;height:24px;background:#f6f6f6;"></div>
<div style="left:1109px;top:940px;width:13px;height:14px;background:#5a78c0;border-radius:2px;color:#fff;font-size:10px;font-weight:bold;text-align:center;line-height:14px;">1</div>
<div class="t" style="left:1128px;top:941px;color:#333;letter-spacing:-0.3px;">조건검색실시간</div>
<div style="left:1321px;top:936px;width:1px;height:24px;background:#cfcfcf;"></div>
<div style="left:1322px;top:936px;width:1px;height:24px;background:#f6f6f6;"></div>
<div style="left:1218px;top:940px;width:13px;height:14px;background:#5a78c0;border-radius:2px;color:#fff;font-size:10px;font-weight:bold;text-align:center;line-height:14px;">1</div>
<div class="t" style="left:1237px;top:941px;color:#333;letter-spacing:-0.3px;">키움종합차트</div>
<div style="left:1430px;top:936px;width:1px;height:24px;background:#cfcfcf;"></div>
<div style="left:1431px;top:936px;width:1px;height:24px;background:#f6f6f6;"></div>
<div style="left:1327px;top:940px;width:13px;height:14px;background:#5a78c0;border-radius:2px;color:#fff;font-size:10px;font-weight:bold;text-align:center;line-height:14px;">1</div>
<div class="t" style="left:1346px;top:941px;color:#333;letter-spacing:-0.3px;">조건검색실시간</div>
<div style="left:1539px;top:936px;width:1px;height:24px;background:#cfcfcf;"></div>
<div style="left:1540px;top:936px;width:1px;height:24px;background:#f6f6f6;"></div>
<div style="left:1436px;top:940px;width:13px;height:14px;background:#5a78c0;border-radius:2px;color:#fff;font-size:10px;font-weight:bold;text-align:center;line-height:14px;">1</div>
<div class="t" style="left:1455px;top:941px;color:#333;letter-spacing:-0.3px;">조건검색실시간</div>
<div style="left:1540px;top:935px;width:109px;height:25px;background:#c6c6c6;"></div>
<div style="left:1545px;top:940px;width:13px;height:14px;background:#5a78c0;border-radius:2px;color:#fff;font-size:10px;font-weight:bold;text-align:center;line-height:14px;">1</div>
<div class="t" style="left:1564px;top:941px;color:#333;letter-spacing:-0.3px;">키움종합차트</div>
<svg style="left:1869px;top:940px" width="14" height="15"><path d="M5 0h4v6h3.500L7 11.500 1.500 6H5zM1 13h12v2H1z" fill="#555"/></svg>
<div style="left:3px;top:961px;width:1914px;height:29px;background:#e2e2e2;border-top:1px solid #f8f8f8;"></div>
<div class="t" style="left:5px;top:961px;color:#666;font-size:12px;font-weight:bold;">×</div><div style="left:6px;top:974px;width:2px;height:12px;background:#fff;border-right:1px solid #888;"></div><div style="left:9px;top:974px;width:2px;height:12px;background:#fff;border-right:1px solid #888;"></div>
<svg style="left:18px;top:966px" width="15" height="18"><rect x="1" y="2.500" width="10" height="13" fill="#f4f4f4" stroke="#555"/><rect x="3.500" y=".500" width="5" height="3" fill="#ddd" stroke="#555"/><rect x="4.500" y="6.500" width="9" height="10" fill="#fff" stroke="#555"/><path d="M6 9h6M6 11.500h6M6 14h6" stroke="#999"/></svg>
<div style="left:38px;top:966px;width:90px;height:21px;background:#ececec;border:1px solid #b0b0b0;border-radius:3px;text-align:left;padding-left:3px;line-height:19px;color:#333;letter-spacing:-0.3px;white-space:nowrap;overflow:hidden;">아이즈비전</div>
<div style="left:130px;top:966px;width:90px;height:21px;background:#ececec;border:1px solid #b0b0b0;border-radius:3px;text-align:left;padding-left:3px;line-height:19px;color:#333;letter-spacing:-0.3px;white-space:nowrap;overflow:hidden;">펩트론</div>
<div style="left:222px;top:966px;width:90px;height:21px;background:#ececec;border:1px solid #b0b0b0;border-radius:3px;text-align:left;padding-left:3px;line-height:19px;color:#333;letter-spacing:-0.3px;white-space:nowrap;overflow:hidden;">한국타이어앤테</div>
<div style="left:314px;top:966px;width:90px;height:21px;background:#ececec;border:1px solid #b0b0b0;border-radius:3px;text-align:left;padding-left:3px;line-height:19px;color:#333;letter-spacing:-0.3px;white-space:nowrap;overflow:hidden;">F&amp;F홀딩스</div>
<div style="left:406px;top:966px;width:90px;height:21px;background:#ececec;border:1px solid #b0b0b0;border-radius:3px;text-align:left;padding-left:3px;line-height:19px;color:#333;letter-spacing:-0.3px;white-space:nowrap;overflow:hidden;">셀바이오휴먼텍</div>
<div style="left:498px;top:966px;width:90px;height:21px;background:#ececec;border:1px solid #b0b0b0;border-radius:3px;text-align:left;padding-left:3px;line-height:19px;color:#333;letter-spacing:-0.3px;white-space:nowrap;overflow:hidden;">한성크린텍</div>
<div style="left:590px;top:966px;width:90px;height:21px;background:#ececec;border:1px solid #b0b0b0;border-radius:3px;text-align:left;padding-left:3px;line-height:19px;color:#333;letter-spacing:-0.3px;white-space:nowrap;overflow:hidden;">앤씨앤</div>
<div style="left:682px;top:966px;width:90px;height:21px;background:#ececec;border:1px solid #b0b0b0;border-radius:3px;text-align:left;padding-left:3px;line-height:19px;color:#333;letter-spacing:-0.3px;white-space:nowrap;overflow:hidden;">코오롱모빌리티</div>
<div style="left:774px;top:966px;width:90px;height:21px;background:#ececec;border:1px solid #b0b0b0;border-radius:3px;text-align:left;padding-left:3px;line-height:19px;color:#333;letter-spacing:-0.3px;white-space:nowrap;overflow:hidden;">협진</div>
<div style="left:866px;top:966px;width:90px;height:21px;background:#ececec;border:1px solid #b0b0b0;border-radius:3px;text-align:left;padding-left:3px;line-height:19px;color:#333;letter-spacing:-0.3px;white-space:nowrap;overflow:hidden;">한화손해보험</div>
<div style="left:958px;top:966px;width:90px;height:21px;background:#ececec;border:1px solid #b0b0b0;border-radius:3px;text-align:left;padding-left:3px;line-height:19px;color:#333;letter-spacing:-0.3px;white-space:nowrap;overflow:hidden;">에이텍</div>
<div style="left:1050px;top:966px;width:90px;height:21px;background:#ececec;border:1px solid #b0b0b0;border-radius:3px;text-align:left;padding-left:3px;line-height:19px;color:#333;letter-spacing:-0.3px;white-space:nowrap;overflow:hidden;">손오공</div>
<div style="left:1142px;top:966px;width:90px;height:21px;background:#ececec;border:1px solid #b0b0b0;border-radius:3px;text-align:left;padding-left:3px;line-height:19px;color:#333;letter-spacing:-0.3px;white-space:nowrap;overflow:hidden;">세아베스틸지주</div>
<div style="left:1234px;top:966px;width:90px;height:21px;background:#ececec;border:1px solid #b0b0b0;border-radius:3px;text-align:left;padding-left:3px;line-height:19px;color:#333;letter-spacing:-0.3px;white-space:nowrap;overflow:hidden;">케일럼</div>
<div style="left:1326px;top:966px;width:90px;height:21px;background:#ececec;border:1px solid #b0b0b0;border-radius:3px;text-align:left;padding-left:3px;line-height:19px;color:#333;letter-spacing:-0.3px;white-space:nowrap;overflow:hidden;">EDGC</div>
<div style="left:1418px;top:966px;width:90px;height:21px;background:#ececec;border:1px solid #b0b0b0;border-radius:3px;text-align:left;padding-left:3px;line-height:19px;color:#333;letter-spacing:-0.3px;white-space:nowrap;overflow:hidden;">라이프시맨틱스</div>
<div style="left:1510px;top:966px;width:90px;height:21px;background:#ececec;border:1px solid #b0b0b0;border-radius:3px;text-align:left;padding-left:3px;line-height:19px;color:#333;letter-spacing:-0.3px;white-space:nowrap;overflow:hidden;">와이팜</div>
<div style="left:1602px;top:966px;width:90px;height:21px;background:#ececec;border:1px solid #b0b0b0;border-radius:3px;text-align:left;padding-left:3px;line-height:19px;color:#333;letter-spacing:-0.3px;white-space:nowrap;overflow:hidden;">머큐리</div>
<div style="left:1694px;top:966px;width:90px;height:21px;background:#ececec;border:1px solid #b0b0b0;border-radius:3px;text-align:left;padding-left:3px;line-height:19px;color:#333;letter-spacing:-0.3px;white-space:nowrap;overflow:hidden;">현대지에프홀딩</div>
<div style="left:1786px;top:966px;width:90px;height:21px;background:#ececec;border:1px solid #b0b0b0;border-radius:3px;text-align:left;padding-left:3px;line-height:19px;color:#333;letter-spacing:-0.3px;white-space:nowrap;overflow:hidden;">아이톡시</div>
<div class="t" style="left:1878px;top:969px;color:#666;font-size:13px;">&gt;</div>
<div style="left:3px;top:990px;width:1914px;height:46px;background:#c5d5f0;"></div>
<div style="left:3px;top:1013px;width:1914px;height:1px;background:#dfe8f8;"></div>
<div class="t" style="left:5px;top:989px;color:#666;font-size:12px;font-weight:bold;">×</div><div style="left:6px;top:1002px;width:2px;height:32px;background:#fff;border-right:1px solid #888;"></div><div style="left:9px;top:1002px;width:2px;height:32px;background:#fff;border-right:1px solid #888;"></div>
<div style="left:15px;top:991px;width:76px;height:22px;background:#b3c7ec;"></div>
<div style="left:15px;top:1014px;width:76px;height:22px;background:#b3c7ec;"></div>
<div class="t" style="left:23px;top:995px;color:#222;"><span style="display:inline-block;width:35px;"><span style="display:inline-block;transform:scaleX(.72);transform-origin:0 50%;">KOSDAQ</span></span>종합</div>
<div class="t" style="left:102px;top:995px;color:#1545c8;letter-spacing:-0.5px;">868.57</div>
<svg style="left:154px;top:998px" width="9" height="8"><path d="M0 0h9L4.500 8z" fill="#1545c8"/></svg>
<div class="t" style="left:170px;top:995px;color:#1545c8;letter-spacing:-0.5px;">1.54</div>
<div class="t" style="left:208px;top:995px;color:#1545c8;letter-spacing:-0.5px;">-0.18%</div>
<div class="t" style="left:259px;top:995px;color:#111;letter-spacing:-0.5px;">1,490,439</div>
<svg style="left:451px;top:1000px" width="9" height="5"><path d="M0 0h8l-4 4.500z" fill="#555"/></svg>
<svg style="left:451px;top:1024px" width="9" height="5"><path d="M0 0h8l-4 4.500z" fill="#555"/></svg>
<div style="left:469px;top:991px;width:76px;height:22px;background:#b3c7ec;"></div>
<div style="left:469px;top:1014px;width:76px;height:22px;background:#b3c7ec;"></div>
<div class="t" style="left:477px;top:995px;color:#222;"><span style="display:inline-block;width:35px;"><span style="display:inline-block;transform:scaleX(.72);transform-origin:0 50%;">KOSDAQ</span></span>종합</div>
<div class="t" style="left:556px;top:995px;color:#1545c8;letter-spacing:-0.5px;">868.57</div>
<svg style="left:608px;top:998px" width="9" height="8"><path d="M0 0h9L4.500 8z" fill="#1545c8"/></svg>
<div class="t" style="left:624px;top:995px;color:#1545c8;letter-spacing:-0.5px;">1.54</div>
<div class="t" style="left:662px;top:995px;color:#1545c8;letter-spacing:-0.5px;">-0.18%</div>
<div class="t" style="left:713px;top:995px;color:#111;letter-spacing:-0.5px;">1,490,439</div>
<svg style="left:905px;top:1000px" width="9" height="5"><path d="M0 0h8l-4 4.500z" fill="#555"/></svg>
<svg style="left:905px;top:1024px" width="9" height="5"><path d="M0 0h8l-4 4.500z" fill="#555"/></svg>
<div style="left:467px;top:991px;width:2px;height:45px;background:#dfe8f8;"></div>
<div style="left:920px;top:991px;width:2px;height:45px;background:#dfe8f8;"></div>
<div class="t" style="left:23px;top:1019px;color:#222;"><span style="display:inline-block;width:35px;"><span style="display:inline-block;transform:scaleX(.72);transform-origin:0 50%;">KOSDAQ</span></span>등락</div>
<svg style="left:104px;top:1021px" width="9" height="8"><path d="M0 8h9L4.500 0z" fill="#e0190d"/></svg>
<div class="t" style="left:114px;top:1019px;color:#e0190d;letter-spacing:-0.5px;">491(↑4)</div>
<div class="t" style="left:180px;top:1019px;color:#111;letter-spacing:-0.5px;">81</div>
<svg style="left:211px;top:1022px" width="9" height="8"><path d="M0 0h9L4.500 8z" fill="#1545c8"/></svg>
<div class="t" style="left:221px;top:1019px;color:#1545c8;letter-spacing:-0.5px;">1074(↓0)</div>
<div class="t" style="left:477px;top:1019px;color:#222;"><span style="display:inline-block;width:48px;"><span style="display:inline-block;transform:scaleX(.72);transform-origin:0 50%;">DOWJONES</span></span></div>
<div class="t" style="left:556px;top:1019px;color:#e0190d;letter-spacing:-0.5px;">39,131.53</div>
<svg style="left:628px;top:1021px" width="9" height="8"><path d="M0 8h9L4.500 0z" fill="#e0190d"/></svg>
<div class="t" style="left:638px;top:1019px;color:#e0190d;letter-spacing:-0.5px;">62.42</div>
<div class="t" style="left:680px;top:1019px;color:#e0190d;letter-spacing:-0.5px;">0.16%</div>
<div class="t" style="left:724px;top:1019px;color:#111;letter-spacing:-0.5px;">292,055,030</div>
<div class="t" style="left:931px;top:995px;color:#222;letter-spacing:-0.2px;word-spacing:2px;">브로드컴, 사모펀드 KKR에 EUC 사업부 매각 추진</div>
<div class="t" style="left:1685px;top:995px;color:#222;letter-spacing:-0.3px;">13:17:24</div>
<div class="t" style="left:1747px;top:995px;color:#222;">서울경제</div>
<svg style="left:1805px;top:1000px" width="9" height="5"><path d="M0 0h8l-4 4.500z" fill="#555"/></svg>
<svg style="left:1805px;top:1024px" width="9" height="5"><path d="M0 0h8l-4 4.500z" fill="#555"/></svg>
<svg style="left:1828px;top:996px" width="14" height="12"><path d="M0 4h3l4-4v12l-4-4H0z" fill="#444"/><path d="M9 3v1M9 6v1M9 9v1M11.500 4.500v1M11.500 7v1" stroke="#444" stroke-width="1.200"/></svg>
<div class="t" style="left:1847px;top:995px;color:#222;">신호대기</div>
<svg style="left:1827px;top:1019px" width="14" height="14"><circle cx="7" cy="7" r="3.200" fill="none" stroke="#666" stroke-width="2.200"/><path d="M7 .5v2.400M7 11.100v2.400M.5 7h2.400M11.100 7h2.400M2.400 2.400l1.700 1.700M9.900 9.900l1.700 1.700M2.400 11.600l1.700-1.700M9.900 4.100l1.700-1.700" stroke="#666" stroke-width="1.900"/></svg>
<div style="left:1845px;top:1014px;width:1px;height:22px;background:#dfe8f8;"></div>
<div style="left:1882px;top:1014px;width:1px;height:22px;background:#dfe8f8;"></div>
<div class="t" style="left:1852px;top:1019px;color:#222;">체결</div>
<div class="t" style="left:1888px;top:1019px;color:#222;">김</div>
<!-- s_taskbar -->
<div style="left:0px;top:1040px;width:3840px;height:40px;background:#1d1d1d;"></div>
<svg style="left:15px;top:1051px" width="18" height="18"><path d="M0 2.500L8.0 1.300V8.0H0zM9.5 1.100L18 0V8.0H9.5zM0 9.5H8.0V16.7L0 15.5zM9.5 9.5H18V18L9.5 16.9z" fill="#fff"/></svg>
<div style="left:48px;top:1040px;width:288px;height:40px;background:#f2f2f2;"></div>
<svg style="left:60px;top:1050px" width="18" height="20"><circle cx="11" cy="7.500" r="5.500" fill="none" stroke="#222" stroke-width="1.600"/><path d="M7 12L1 19" stroke="#222" stroke-width="1.800"/></svg>
<div class="t m" style="left:88px;top:1051px;color:#333;font-size:15px;line-height:18px;">찾기</div>
<svg style="left:258px;top:1040px" width="78" height="40"><path d="M0 40c6-8 14-12 22-12 10-6 22-8 34-5 8-2 16 0 22 5v12z" fill="#9ac77c"/><rect x="14" y="14" width="9" height="24" fill="#5a8fd0"/><rect x="24" y="20" width="7" height="18" fill="#7fb0e0"/><rect x="33" y="18" width="7" height="20" fill="#f1c9a0"/><rect x="41" y="10" width="8" height="28" fill="#f3d2ae"/><rect x="50" y="3" width="8" height="35" fill="#f0b890"/><rect x="59" y="9" width="9" height="29" fill="#a8b8e0"/><rect x="69" y="22" width="6" height="16" fill="#c8d0e8"/><path d="M0 38h78v2H0z" fill="#4a7ab8"/><path d="M43 12v26M45.500 12v26M52 5v33M55 5v33M61 11v27M64 11v27" stroke="#fff" stroke-width=".7" opacity=".6"/></svg>
<svg style="left:352px;top:1052px" width="18" height="16"><rect x="2.500" y="3.500" width="10" height="9" fill="none" stroke="#fff" stroke-width="1.400"/><path d="M2 1h11M2 15h11M15.500 4v8" stroke="#fff" stroke-width="1.400"/><path d="M15.500 2v1M15.500 13v1" stroke="#fff" stroke-width="1.400"/></svg>
<svg style="left:400px;top:1048px" width="24" height="24"><defs><linearGradient id="eg352" x1="0" y1="0" x2="1" y2="1"><stop offset="0" stop-color="#35c1f1"/><stop offset=".6" stop-color="#1b6fd0"/><stop offset="1" stop-color="#0c4a9c"/></linearGradient></defs><circle cx="12" cy="12" r="11.500" fill="url(#eg352)"/><path d="M3 13c0-6 5-9 9.500-9 5 0 8.500 3.500 8.500 7 0 3-2.500 4.500-5 4.500-2 0-3-1-3-2 0-1.500 1-1.500 1-3s-1.500-2.500-3.500-2.500C7.500 8 5 10 5 13.500c0 5 4 8 8 8-6 1-10-3.500-10-8.500z" fill="#7fe07a" opacity=".85"/><path d="M10 12c0 4 3 7 7 7 2 0 3.500-.5 4.500-1.300C20 21 16.500 23.500 12 23.500 7 23.500 4 19.500 4 15c0-4 3-6 6-6 1 0 2 .5 2 .5s-2 .5-2 2.500z" fill="#123f8c" opacity=".55"/></svg>
<svg style="left:449px;top:1048px" width="24" height="24"><path d="M1 4h8l2 2.500h12V20H1z" fill="#f5b90f"/><path d="M1 8h22v13H1z" fill="#fbd354"/><path d="M6 14h12v7H6z" fill="#3a8de0"/><path d="M9 17.500h6V21H9z" fill="#fbd354"/></svg>
<svg style="left:497px;top:1047px" width="24" height="26"><path d="M7.500 7V4.500a1.500 1.500 0 011.500-1.500h6a1.500 1.500 0 011.500 1.500V7" fill="none" stroke="#3fa7ea" stroke-width="1.800"/><rect x="1" y="7" width="22" height="17" rx="2.500" fill="#f4f4f4"/><rect x="7" y="11" width="4.300" height="4.300" fill="#f25022"/><rect x="12.700" y="11" width="4.300" height="4.300" fill="#7fba00"/><rect x="7" y="16.700" width="4.300" height="4.300" fill="#00a4ef"/><rect x="12.700" y="16.700" width="4.300" height="4.300" fill="#ffb900"/></svg>
<svg style="left:546px;top:1047px" width="27" height="26"><text x="4" y="23" font-family="Liberation Sans,sans-serif" font-size="29" font-weight="bold" fill="#2aa3ea">e</text><path d="M2 18C-2 8 12 0 25 4" fill="none" stroke="#f4c430" stroke-width="2.200"/></svg>
<svg style="left:595px;top:1048px" width="26" height="26"><rect x="0" y="1" width="22" height="16" rx="4" fill="#f00"/><path d="M8.500 5v8l7-4z" fill="#fff"/><circle cx="18" cy="18" r="7" fill="#3ac0d8"/><ellipse cx="18" cy="19" rx="4.500" ry="3" fill="#d8283c"/><rect x="13.500" y="14" width="9" height="3" fill="#14181c"/></svg>
<svg style="left:643px;top:1047px" width="27" height="27"><circle cx="12" cy="12" r="11.500" fill="#fbc116"/><path d="M12 12L1.500 7A11.500 11.500 0 0122.500 7z" fill="#e33b2e"/><path d="M12 12L1.500 7A11.500 11.500 0 009 23z" fill="#2da94f"/><circle cx="12" cy="12" r="5.200" fill="#fff"/><circle cx="12" cy="12" r="4.200" fill="#4285f4"/><circle cx="19" cy="19" r="7" fill="#3ac0d8"/><ellipse cx="19" cy="20" rx="4.500" ry="3" fill="#d8283c"/><rect x="14.500" y="15" width="9" height="3" fill="#14181c"/></svg>
<svg style="left:692px;top:1048px" width="24" height="24"><rect width="24" height="24" rx="2" fill="#1c2a58"/><text x="12" y="9" text-anchor="middle" font-family="Liberation Sans,sans-serif" font-size="8" font-weight="bold" fill="#fff">POP</text><text x="12" y="17" text-anchor="middle" font-family="Liberation Sans,sans-serif" font-size="8" font-weight="bold" fill="#fff">DTS</text><path d="M4 22l6-4 3 2 8-7" stroke="#e8309a" stroke-width="1.800" fill="none"/></svg>
<div style="left:730px;top:1040px;width:48px;height:40px;background:#3a3a3a;"></div>
<div style="left:742px;top:1048px;width:24px;height:24px;background:#f2f2f2;"><svg width="24" height="24"><path d="M3 6l5 2M5 4l1 7M2 11l8-1M4 14c2 3 5 3 6 0M13 4l6 3M18 3l-4 7M12 11l10-2M16 10l-5 10M13 14l8 7M19 12l-7 6" stroke="#d01818" stroke-width="1.800" fill="none"/></svg></div>
<div style="left:587px;top:1077px;width:42px;height:3px;background:#8ab8e0;"></div>
<div style="left:636px;top:1077px;width:41px;height:3px;background:#8ab8e0;"></div>
<div style="left:685px;top:1077px;width:40px;height:3px;background:#8ab8e0;"></div>
<div style="left:730px;top:1077px;width:48px;height:3px;background:#8ab8e0;"></div>
<svg style="left:1582px;top:1050px" width="26" height="18"><path d="M6 17a5 5 0 01-.5-10A7 7 0 0119 6a5.500 5.500 0 011 11z" fill="#b8cdf0"/><path d="M8 17a4 4 0 010-8 6 6 0 0111-1 4.500 4.500 0 010 9z" fill="#dfe9fa"/></svg>
<div class="t m" style="left:1614px;top:1052px;color:#fff;font-size:13px;line-height:16px;">4°C&nbsp; 흐림</div>
<svg style="left:1699px;top:1055px" width="13" height="8"><path d="M1 7l5.500-5.500L12 7" stroke="#fff" stroke-width="1.400" fill="none"/></svg>
<svg style="left:1721px;top:1052px" width="17" height="16"><rect x="4.500" y="1.500" width="11" height="8" fill="none" stroke="#fff" stroke-width="1.200"/><rect x=".500" y="5.500" width="5" height="9" fill="#1d1d1d" stroke="#fff" stroke-width="1.200"/><path d="M7 14.500h8" stroke="#fff" stroke-width="1.200"/></svg>
<svg style="left:1745px;top:1052px" width="17" height="15"><path d="M1 5.500h3L8 2v11L4 9.500H1z" fill="none" stroke="#fff" stroke-width="1.200"/><path d="M10.500 5a3.500 3.500 0 010 5M12.500 3a6 6 0 010 9" stroke="#fff" stroke-width="1.100" fill="none"/></svg>
<div class="t m" style="left:1769px;top:1052px;color:#fff;font-size:13px;line-height:16px;">가</div>
<div class="t m" style="left:1800px;top:1043px;color:#fff;font-size:12.500px;line-height:16px;">오후 1:18</div>
<div class="t m" style="left:1794px;top:1062px;color:#fff;font-size:12.500px;line-height:16px;">2024-02-25</div>
<svg style="left:1877px;top:1049px" width="26" height="24"><path d="M1.500 1.500h15v11h-9l-3.500 3.500v-3.500h-2.500z" fill="#fff"/><path d="M4 4.500h10M4 7h10M4 9.500h7" stroke="#1d1d1d"/><circle cx="18" cy="16" r="6.500" fill="#2a2a2a" stroke="#888"/><text x="18" y="20" text-anchor="middle" font-family="Liberation Sans,sans-serif" font-size="10" font-weight="bold" fill="#fff">2</text></svg>
<div style="left:1915px;top:1040px;width:1px;height:40px;background:#555;"></div>
<svg style="left:1935px;top:1051px" width="18" height="18"><path d="M0 2.500L8.0 1.300V8.0H0zM9.5 1.100L18 0V8.0H9.5zM0 9.5H8.0V16.7L0 15.5zM9.5 9.5H18V18L9.5 16.9z" fill="#fff"/></svg>
<svg style="left:1980px;top:1048px" width="24" height="24"><circle cx="14" cy="9.500" r="7.500" fill="none" stroke="#fff" stroke-width="2"/><path d="M8.500 15L1.500 22.500" stroke="#fff" stroke-width="2.400"/></svg>
<svg style="left:2031px;top:1052px" width="18" height="16"><rect x="2.500" y="3.500" width="10" height="9" fill="none" stroke="#fff" stroke-width="1.400"/><path d="M2 1h11M2 15h11M15.500 4v8" stroke="#fff" stroke-width="1.400"/><path d="M15.500 2v1M15.500 13v1" stroke="#fff" stroke-width="1.400"/></svg>
<svg style="left:2079px;top:1048px" width="24" height="24"><defs><linearGradient id="eg2031" x1="0" y1="0" x2="1" y2="1"><stop offset="0" stop-color="#35c1f1"/><stop offset=".6" stop-color="#1b6fd0"/><stop offset="1" stop-color="#0c4a9c"/></linearGradient></defs><circle cx="12" cy="12" r="11.500" fill="url(#eg2031)"/><path d="M3 13c0-6 5-9 9.500-9 5 0 8.500 3.500 8.500 7 0 3-2.500 4.500-5 4.500-2 0-3-1-3-2 0-1.500 1-1.500 1-3s-1.500-2.500-3.500-2.500C7.500 8 5 10 5 13.500c0 5 4 8 8 8-6 1-10-3.500-10-8.500z" fill="#7fe07a" opacity=".85"/><path d="M10 12c0 4 3 7 7 7 2 0 3.500-.5 4.500-1.300C20 21 16.500 23.500 12 23.500 7 23.500 4 19.500 4 15c0-4 3-6 6-6 1 0 2 .5 2 .5s-2 .5-2 2.500z" fill="#123f8c" opacity=".55"/></svg>
<svg style="left:2128px;top:1048px" width="24" height="24"><path d="M1 4h8l2 2.500h12V20H1z" fill="#f5b90f"/><path d="M1 8h22v13H1z" fill="#fbd354"/><path d="M6 14h12v7H6z" fill="#3a8de0"/><path d="M9 17.500h6V21H9z" fill="#fbd354"/></svg>
<svg style="left:2176px;top:1047px" width="24" height="26"><path d="M7.500 7V4.500a1.500 1.500 0 011.500-1.500h6a1.500 1.500 0 011.500 1.500V7" fill="none" stroke="#3fa7ea" stroke-width="1.800"/><rect x="1" y="7" width="22" height="17" rx="2.500" fill="#f4f4f4"/><rect x="7" y="11" width="4.300" height="4.300" fill="#f25022"/><rect x="12.700" y="11" width="4.300" height="4.300" fill="#7fba00"/><rect x="7" y="16.700" width="4.300" height="4.300" fill="#00a4ef"/><rect x="12.700" y="16.700" width="4.300" height="4.300" fill="#ffb900"/></svg>
<svg style="left:2225px;top:1047px" width="27" height="26"><text x="4" y="23" font-family="Liberation Sans,sans-serif" font-size="29" font-weight="bold" fill="#2aa3ea">e</text><path d="M2 18C-2 8 12 0 25 4" fill="none" stroke="#f4c430" stroke-width="2.200"/></svg>
<svg style="left:2274px;top:1048px" width="26" height="26"><rect x="0" y="1" width="22" height="16" rx="4" fill="#f00"/><path d="M8.500 5v8l7-4z" fill="#fff"/><circle cx="18" cy="18" r="7" fill="#3ac0d8"/><ellipse cx="18" cy="19" rx="4.500" ry="3" fill="#d8283c"/><rect x="13.500" y="14" width="9" height="3" fill="#14181c"/></svg>
<svg style="left:2322px;top:1047px" width="27" height="27"><circle cx="12" cy="12" r="11.500" fill="#fbc116"/><path d="M12 12L1.500 7A11.500 11.500 0 0122.500 7z" fill="#e33b2e"/><path d="M12 12L1.500 7A11.500 11.500 0 009 23z" fill="#2da94f"/><circle cx="12" cy="12" r="5.200" fill="#fff"/><circle cx="12" cy="12" r="4.200" fill="#4285f4"/><circle cx="19" cy="19" r="7" fill="#3ac0d8"/><ellipse cx="19" cy="20" rx="4.500" ry="3" fill="#d8283c"/><rect x="14.500" y="15" width="9" height="3" fill="#14181c"/></svg>
<svg style="left:2371px;top:1048px" width="24" height="24"><rect width="24" height="24" rx="2" fill="#1c2a58"/><text x="12" y="9" text-anchor="middle" font-family="Liberation Sans,sans-serif" font-size="8" font-weight="bold" fill="#fff">POP</text><text x="12" y="17" text-anchor="middle" font-family="Liberation Sans,sans-serif" font-size="8" font-weight="bold" fill="#fff">DTS</text><path d="M4 22l6-4 3 2 8-7" stroke="#e8309a" stroke-width="1.800" fill="none"/></svg>
<div style="left:2409px;top:1040px;width:48px;height:40px;background:#3a3a3a;"></div>
<div style="left:2421px;top:1048px;width:24px;height:24px;background:#f2f2f2;"><svg width="24" height="24"><path d="M3 6l5 2M5 4l1 7M2 11l8-1M4 14c2 3 5 3 6 0M13 4l6 3M18 3l-4 7M12 11l10-2M16 10l-5 10M13 14l8 7M19 12l-7 6" stroke="#d01818" stroke-width="1.800" fill="none"/></svg></div>
<div style="left:2266px;top:1077px;width:42px;height:3px;background:#8ab8e0;"></div>
<div style="left:2315px;top:1077px;width:41px;height:3px;background:#8ab8e0;"></div>
<div style="left:2364px;top:1077px;width:40px;height:3px;background:#8ab8e0;"></div>
<div style="left:2409px;top:1077px;width:48px;height:3px;background:#8ab8e0;"></div>
<div class="t m" style="left:3774px;top:1043px;color:#fff;font-size:12.500px;line-height:16px;">오후 1:18</div>
<div class="t m" style="left:3768px;top:1062px;color:#fff;font-size:12.500px;line-height:16px;">2024-02-25</div>
<!-- s_chrome -->
<div style="left:1920px;top:0px;width:1920px;height:40px;background:#5bb8c3;"></div>
<div style="left:1920px;top:40px;width:1920px;height:81px;background:#b9e3e7;border-top-left-radius:9px;"></div>
<div style="left:3832px;top:40px;width:8px;height:10px;background:#5bb8c3;"></div>
<div style="left:3824px;top:40px;width:16px;height:20px;background:#b9e3e7;border-top-right-radius:9px;"></div>
<div style="left:1926px;top:6px;width:28px;height:28px;background:#b9e3e7;border-radius:9px;"></div>
<svg style="left:1935px;top:16px" width="10" height="7"><path d="M1 1l4 4 4-4" stroke="#222" stroke-width="1.700" fill="none"/></svg>
<div style="left:1960px;top:6px;width:232px;height:36px;background:#b9e3e7;border-radius:9px 9px 0 0;"></div>
<div style="left:1952px;top:32px;width:8px;height:8px;background:#b9e3e7;"></div>
<div style="left:1952px;top:32px;width:8px;height:8px;background:#5bb8c3;border-bottom-right-radius:8px;"></div>
<div style="left:1968px;top:12px;width:16px;height:16px;background:#fff;border:1px solid #aaa;"><svg width="14" height="14"><path d="M3 11C4 5 8 2 12 2 8 4 6 7 6 11z" fill="#e01818"/><path d="M2 3c2 0 3 1 3.500 3L4 8C3.500 6 3 4 2 3z" fill="#2a50c0"/></svg></div>
<div class="t m" style="left:1992px;top:13px;color:#222;font-size:12px;letter-spacing:1.200px;">예스스탁</div>
<div style="left:3719px;top:20px;width:12px;height:1px;background:#234;"></div>
<svg style="left:3765px;top:14px" width="12" height="12"><rect x=".500" y="2.500" width="8" height="8" fill="none" stroke="#234"/><path d="M2.500 2.500v-2h8v8h-2" fill="none" stroke="#234"/></svg>
<svg style="left:3811px;top:14px" width="12" height="12"><path d="M.5.5l11 11M11.500.5l-11 11" stroke="#234" stroke-width="1.100"/></svg>
<svg style="left:1934px;top:55px" width="18" height="16"><path d="M17 8H2M8.500 1.500L2 8l6.500 6.500" stroke="#222" stroke-width="2" fill="none"/></svg>
<svg style="left:1969px;top:55px" width="18" height="16"><path d="M1 8h15M9.500 1.500L16 8l-6.500 6.500" stroke="#8fa6aa" stroke-width="2" fill="none"/></svg>
<svg style="left:2005px;top:54px" width="18" height="18"><path d="M15 9a6.300 6.300 0 11-2-4.600" stroke="#222" stroke-width="2" fill="none"/><path d="M15.500 1v5.500H10z" fill="#222"/></svg>
<div style="left:2042px;top:46px;width:1588px;height:34px;background:#edf8f8;border-radius:17px;"></div>
<div style="left:2046px;top:50px;width:26px;height:26px;background:#b9e3e7;border-radius:13px;"></div>
<svg style="left:2050px;top:56px" width="18" height="14"><path d="M1 3.500h8M13 3.500h4M1 10.500h4M9 10.500h8" stroke="#222" stroke-width="1.800"/><circle cx="11" cy="3.500" r="2.200" fill="none" stroke="#222" stroke-width="1.600"/><circle cx="7" cy="10.500" r="2.200" fill="none" stroke="#222" stroke-width="1.600"/></svg>
<svg style="left:3564px;top:57px" width="20" height="12"><circle cx="5" cy="6" r="3.800" fill="none" stroke="#444" stroke-width="1.800"/><path d="M9 6h10M15 6v4M18 6v3.500" stroke="#444" stroke-width="1.800"/></svg>
<svg style="left:3597px;top:54px" width="18" height="17"><path d="M9 1.500l2.300 4.900 5.300.6-3.900 3.700 1 5.300L9 13.400 4.300 16l1-5.300L1.400 7l5.300-.6z" fill="none" stroke="#444" stroke-width="1.600"/></svg>
<svg style="left:3647px;top:54px" width="18" height="18"><path d="M2 5h4.500V3.500a2 2 0 014 0V5H15v4.500h-1a2 2 0 000 4h1V17H2v-4h1.500a2 2 0 000-4H2z" fill="none" stroke="#222" stroke-width="1.800"/></svg>
<div style="left:3682px;top:55px;width:2px;height:16px;background:#4aa8b8;"></div>
<svg style="left:3702px;top:55px" width="18" height="16"><path d="M1 2h10M1 6h10M1 10h6" stroke="#222" stroke-width="1.800"/><path d="M14 2v9" stroke="#222" stroke-width="1.800"/><path d="M14 2h4" stroke="#222" stroke-width="2.200"/><circle cx="12.200" cy="11.500" r="2.400" fill="#222"/></svg>
<svg style="left:3737px;top:55px" width="16" height="15"><rect x="1" y="1" width="14" height="13" rx="1.500" fill="none" stroke="#222" stroke-width="1.800"/><rect x="8.500" y="1.500" width="6" height="12" fill="#222"/></svg>
<div style="left:3772px;top:53px;width:20px;height:20px;background:#3ac0d8;border-radius:10px;overflow:hidden;"><svg width="20" height="20"><ellipse cx="10" cy="13" rx="7" ry="3.500" fill="#e8283c"/><rect x="3" y="6" width="8" height="5" fill="#14181c"/><rect x="10" y="5" width="7" height="4" fill="#fff"/><rect x="5" y="8" width="4" height="2" fill="#fff"/></svg></div>
<div style="left:3816px;top:56px;width:3px;height:3px;background:#222;border-radius:2px;"></div>
<div style="left:3816px;top:62px;width:3px;height:3px;background:#222;border-radius:2px;"></div>
<div style="left:3816px;top:68px;width:3px;height:3px;background:#222;border-radius:2px;"></div>
<div style="left:1932px;top:94px;width:16px;height:11px;background:#f00;border-radius:3px;"><svg width="16" height="11"><path d="M6.300 2.800v5.400l4.700-2.700z" fill="#fff"/></svg></div>
<div class="t m" style="left:1954px;top:92px;color:#222;font-size:12px;letter-spacing:0.8px;margin-top:1px;letter-spacing:-0.2px;">YouTube</div>
<svg style="left:2017px;top:91px" width="13" height="17"><path d="M6.500 16.500C6.500 12 12.500 10 12.500 6a6 6 0 00-12 0c0 4 6 6 6 10.500z" fill="#34a853"/><path d="M6.500 0a6 6 0 00-5 2.700L6.500 8z" fill="#ea4335"/><path d="M6.500 0a6 6 0 015.500 3.500L6.500 8z" fill="#4285f4"/><path d="M12 3.500c.8 2 .4 4-1 5.500L6.500 8z" fill="#fbbc04"/><circle cx="6.500" cy="6" r="2" fill="#fff"/></svg>
<div class="t m" style="left:2038px;top:92px;color:#222;font-size:12px;letter-spacing:0.8px;margin-top:1px;">지도</div>
<div class="t m" style="left:2452px;top:92px;color:#222;font-size:12px;letter-spacing:0.8px;margin-top:1px;">ㅣ 코인 물타기...</div>
<svg style="left:2557px;top:92px" width="17" height="16"><path d="M1 1v14h14" stroke="#f08030" stroke-width="1.600" fill="none"/><path d="M3 11l4-5 3 3 5-6M11 3h4v4" stroke="#2a3a8c" stroke-width="1.800" fill="none"/></svg>
<div class="t m" style="left:2579px;top:92px;color:#222;font-size:12px;letter-spacing:0.8px;margin-top:1px;">주식정보&gt;투자 인...</div>
<div style="left:2701px;top:95px;width:16px;height:11px;background:#f00;border-radius:3px;"><svg width="16" height="11"><path d="M6.300 2.800v5.400l4.700-2.700z" fill="#fff"/></svg></div>
<div class="t m" style="left:2723px;top:92px;color:#222;font-size:12px;letter-spacing:0.8px;margin-top:1px;">(25) [비트판다_비트...</div>
<div style="left:2853px;top:92px;width:17px;height:16px;background:#f0145a;border-radius:4px;color:#fff;font-size:8px;font-weight:bold;line-height:16px;text-align:center;letter-spacing:-0.5px;">11&gt;</div>
<div class="t m" style="left:2876px;top:92px;color:#222;font-size:12px;letter-spacing:0.8px;margin-top:1px;">미쓰비시 예초기 엔...</div>
<div style="left:3006px;top:92px;width:16px;height:16px;background:#e0302a;border-radius:8px;color:#fff;font-size:12px;font-weight:bold;line-height:16px;text-align:center;">C</div>
<div class="t m" style="left:3028px;top:92px;color:#222;font-size:12px;letter-spacing:0.8px;margin-top:1px;">쿠팡</div>
<div style="left:3068px;top:92px;width:16px;height:16px;background:#e01428;"><svg width="16" height="16"><path d="M8 2.500v8" stroke="#fff" stroke-width="1.800"/><circle cx="8" cy="11.500" r="2" fill="none" stroke="#fff" stroke-width="1.500"/></svg></div>
<div class="t m" style="left:3090px;top:92px;color:#222;font-size:12px;letter-spacing:0.8px;margin-top:1px;">대한민국 정책브리핑</div>
<svg style="left:3219px;top:92px" width="16" height="16"><circle cx="8" cy="8" r="7.500" fill="#fff"/><path d="M1 6a7.500 7.500 0 0114 3c-2 2-5 1-7-1S3 5 1 6z" fill="#d8283c"/><path d="M1 6c2-1 5 0 7 2s5 3 7 1a7.500 7.500 0 01-14-3z" fill="#1c3a8c"/></svg>
<div class="t m" style="left:3241px;top:92px;color:#222;font-size:12px;letter-spacing:0.8px;margin-top:1px;">보도·참고자료 | 기...</div>
<svg style="left:3364px;top:92px" width="16" height="16"><circle cx="8" cy="8" r="7.300" fill="#222"/><path d="M3 5c2 0 3 1 3 2.500S4 9 5 11l1 3M9 1.500c0 2 1 2 2 2.500s0 2-1 2 0 2 2 2 2 1 1 3" stroke="#fff" stroke-width="1.500" fill="none"/></svg>
<div class="t m" style="left:3386px;top:92px;color:#222;font-size:12px;letter-spacing:0.8px;margin-top:1px;">::개인정보노출자 사...</div>
<div style="left:3719px;top:92px;width:2px;height:16px;background:#4aa8b8;"></div>
<svg style="left:3737px;top:93px" width="17" height="14"><path d="M1 1.500h5.500l1.500 2h8v9.500H1z" fill="none" stroke="#444" stroke-width="1.500"/></svg>
<div class="t m" style="left:3761px;top:92px;color:#222;font-size:12px;letter-spacing:0.8px;margin-top:1px;">모든 북마크</div>
<!-- s_page -->
<div style="left:1920px;top:121px;width:1920px;height:919px;background:#fff;"></div>
<div style="left:1920px;top:124px;width:1920px;height:70px;background:linear-gradient(#fff 80%,#f4f4f4);border-bottom:1px solid #d4d4d4;"></div>
<div style="left:1920px;top:195px;width:1920px;height:3px;background:linear-gradient(#e6e6e6,#fff);"></div>
<div style="left:1920px;top:121px;width:540px;height:3px;background:#0a3a8c;"></div>
<div style="left:2460px;top:121px;width:1380px;height:3px;background:#d40a0a;"></div>
<div class="t" style="left:2462px;top:143px;color:#333;font-size:34px;line-height:44px;font-style:italic;-webkit-text-stroke:0.700px #333;font-family:'Liberation Sans',sans-serif;transform:scaleX(.915);transform-origin:0 0;">YesStock</div>
<div class="t n" style="left:2683px;top:156px;color:#444;font-size:16px;font-weight:bold;line-height:22px;letter-spacing:-0.6px;">시스템트레이딩</div>
<div class="t n" style="left:2832px;top:156px;color:#444;font-size:16px;font-weight:bold;line-height:22px;letter-spacing:-0.6px;">시스템시장</div>
<div class="t n" style="left:2952px;top:156px;color:#444;font-size:16px;font-weight:bold;line-height:22px;letter-spacing:-0.6px;">매매신호</div>
<div class="t n" style="left:3057px;top:156px;color:#444;font-size:16px;font-weight:bold;line-height:22px;letter-spacing:-0.6px;">제품소개</div>
<div class="t n" style="left:3161px;top:156px;color:#444;font-size:16px;font-weight:bold;line-height:22px;letter-spacing:-0.6px;">주요기능</div>
<div class="t n" style="left:3268px;top:156px;color:#444;font-size:16px;font-weight:bold;line-height:22px;letter-spacing:-0.6px;">커뮤니티</div>
<div class="t n" style="left:3086px;top:133px;color:#222;font-size:11.500px;letter-spacing:0.45px;">로그아웃&nbsp; |&nbsp; 회원정보&nbsp; |&nbsp; 회사소개&nbsp; |&nbsp; 사이트맵</div>
<div class="t n" style="left:2410px;top:222px;color:#333;font-size:25px;line-height:30px;letter-spacing:-1px;transform:scaleX(.92);transform-origin:100% 0;width:100px;text-align:right;">커뮤니티</div>
<div style="left:2440px;top:255px;width:143px;height:3px;background:#e8141e;"></div>
<div class="t n" style="left:2322px;top:265px;width:200px;text-align:right;color:#e8141e;font-size:17px;line-height:22px;letter-spacing:-0.8px;transform:scaleX(.9);transform-origin:100% 0;">수식작성 Q&amp;A</div>
<div style="left:2440px;top:291px;width:143px;height:1px;background:#d8d8d8;"></div>
<div class="t n" style="left:2363px;top:299px;width:200px;text-align:right;color:#444;font-size:17px;line-height:22px;letter-spacing:-0.8px;transform:scaleX(.9);transform-origin:100% 0;">프로그램사용법 Q&amp;A</div>
<div style="left:2440px;top:325px;width:143px;height:1px;background:#d8d8d8;"></div>
<div class="t n" style="left:2322px;top:333px;width:200px;text-align:right;color:#444;font-size:17px;line-height:22px;letter-spacing:-0.8px;transform:scaleX(.9);transform-origin:100% 0;">예스스팟 Q&amp;A</div>
<div style="left:2440px;top:359px;width:143px;height:1px;background:#d8d8d8;"></div>
<div class="t n" style="left:2304px;top:367px;width:200px;text-align:right;color:#444;font-size:17px;line-height:22px;letter-spacing:-0.8px;transform:scaleX(.9);transform-origin:100% 0;">자유게시판</div>
<div style="left:2440px;top:393px;width:143px;height:1px;background:#d8d8d8;"></div>
<div class="t n" style="left:2349px;top:401px;width:200px;text-align:right;color:#444;font-size:17px;line-height:22px;letter-spacing:-0.8px;transform:scaleX(.9);transform-origin:100% 0;">시스템시장 토론실</div>
<div style="left:2440px;top:427px;width:143px;height:1px;background:#d8d8d8;"></div>
<div class="t n" style="left:2295px;top:435px;width:200px;text-align:right;color:#444;font-size:17px;line-height:22px;letter-spacing:-0.8px;transform:scaleX(.9);transform-origin:100% 0;">공지사항</div>
<div style="left:2440px;top:461px;width:143px;height:1px;background:#d8d8d8;"></div>
<div class="t n" style="left:2363px;top:469px;width:200px;text-align:right;color:#444;font-size:17px;line-height:22px;letter-spacing:-0.8px;transform:scaleX(.9);transform-origin:100% 0;">시스템트레이딩 교육</div>
<div style="left:2440px;top:495px;width:143px;height:1px;background:#999;"></div>
<div style="left:2608px;top:226px;width:6px;height:615px;background:linear-gradient(90deg,#fff,#f3f3f3 50%,#fff);"></div>
<div class="t n" style="left:2643px;top:222px;color:#444;font-size:24px;line-height:30px;letter-spacing:-1px;transform:scaleX(.93);transform-origin:0 0;">수식작성 Q&amp;A</div>
<svg style="left:3164px;top:233px" width="12" height="11"><path d="M6 0l6 5.500h-2V11H7.500V7h-3v4H2V5.500H0z" fill="#999"/></svg>
<div class="t" style="left:3178px;top:232px;color:#888;font-size:10px;">&gt;</div>
<div class="t n" style="left:3189px;top:232px;color:#222;font-size:11.500px;letter-spacing:0.4px;">커뮤니티&nbsp; |&nbsp; 수식작성 Q&amp;A</div>
<div style="left:2643px;top:257px;width:685px;height:1px;background:#dcdcdc;"></div>
<div style="left:2643px;top:284px;width:666px;height:2px;background:#2a72d8;"></div>
<div class="t n" style="left:2673px;top:292px;color:#555;font-size:12px;font-weight:bold;letter-spacing:-0.5px;">필 명</div>
<div class="t" style="left:2723px;top:292px;color:#222;font-size:12px;letter-spacing:-0.3px;">dla1224</div>
<div style="left:2643px;top:311px;width:666px;height:1px;background:#dcdcdc;"></div>
<div class="t n" style="left:2673px;top:318px;color:#555;font-size:12px;font-weight:bold;letter-spacing:-0.5px;">제 목</div>
<div style="left:2723px;top:316px;width:84px;height:18px;background:#fff;border:1px solid #8a8a8a;border-radius:2px;padding-left:5px;line-height:16px;color:#333;">지표</div>
<svg style="left:2792px;top:322px" width="10" height="7"><path d="M1 1l4 4 4-4" stroke="#333" stroke-width="1.600" fill="none"/></svg>
<div style="left:2807px;top:316px;width:478px;height:18px;background:#fff;border:1px solid #c4c4c4;border-top-color:#9a9a9a;padding-left:3px;line-height:16px;color:#555;white-space:nowrap;letter-spacing:0.1px;">급등하기 전 거래량 캔들 확인방법 (도지캔들</div>
<div style="left:2643px;top:337px;width:666px;height:2px;background:#2a72d8;"></div>
<div style="left:2643px;top:339px;width:666px;height:30px;background:#ecedef;"></div>
<div class="t n" style="left:2673px;top:347px;color:#555;font-size:12px;font-weight:bold;letter-spacing:-0.5px;">문의내용</div>
<div style="left:2680px;top:379px;width:612px;height:206px;background:#fff;border:1px solid #767676;border-radius:2px;"></div>
<div class="t" style="left:2683px;top:382px;color:#111;font-size:13.500px;line-height:14.500px;letter-spacing:0.45px;word-spacing:3px;">검색 수식을 만들어서 사용중입니다</div>
<div class="t" style="left:2683px;top:412px;color:#111;font-size:13.500px;line-height:14.500px;letter-spacing:0.45px;word-spacing:3px;">전일대비 거래량이 2배급정도로 많아지만 알람 + 화살표를 나오게 사용중입니다 그런데 급등</div>
<div class="t" style="left:2683px;top:426px;color:#111;font-size:13.500px;line-height:14.500px;letter-spacing:0.45px;word-spacing:3px;">이 나오기전에 보면 캔들이 꼭 양봉의도지캔들이 나오는데 이거는 못잡아냅니다</div>
<svg style="left:3281px;top:574px" width="9" height="9"><path d="M8 1L1 8M8 5L5 8" stroke="#666"/></svg>
<div style="left:2653px;top:595px;width:666px;height:2px;background:#cfcfcf;"></div>
<div class="t n" style="left:2682px;top:609px;color:#555;font-size:12px;letter-spacing:-0.9px;">첨부파일1</div>
<div style="left:2741px;top:602px;width:548px;height:26px;background:#fff;border:1px solid #c8c8c8;border-top-color:#8c8c8c;border-left-color:#8c8c8c;"></div>
<div class="n" style="left:2743px;top:605px;width:66px;height:20px;background:#efefef;border:1px solid #767676;border-radius:2px;text-align:center;line-height:18px;font-size:12px;color:#111;letter-spacing:-0.2px;">파일 선택</div>
<div class="t n" style="left:2813px;top:608px;color:#333;font-size:12px;letter-spacing:0.3px;">선택된 파일 없음</div>
<div style="left:2653px;top:633px;width:666px;height:1px;background:#cfcfcf;"></div>
<div class="t n" style="left:2682px;top:646px;color:#555;font-size:12px;letter-spacing:-0.9px;">첨부파일2</div>
<div style="left:2741px;top:639px;width:548px;height:26px;background:#fff;border:1px solid #c8c8c8;border-top-color:#8c8c8c;border-left-color:#8c8c8c;"></div>
<div class="n" style="left:2743px;top:642px;width:66px;height:20px;background:#efefef;border:1px solid #767676;border-radius:2px;text-align:center;line-height:18px;font-size:12px;color:#111;letter-spacing:-0.2px;">파일 선택</div>
<div class="t n" style="left:2813px;top:645px;color:#333;font-size:12px;letter-spacing:0.3px;">선택된 파일 없음</div>
<div style="left:2653px;top:670px;width:666px;height:1px;background:#cfcfcf;"></div>
<div class="t n" style="left:2682px;top:683px;color:#555;font-size:12px;letter-spacing:-0.9px;">첨부파일3</div>
<div style="left:2741px;top:676px;width:548px;height:26px;background:#fff;border:1px solid #c8c8c8;border-top-color:#8c8c8c;border-left-color:#8c8c8c;"></div>
<div class="n" style="left:2743px;top:679px;width:66px;height:20px;background:#efefef;border:1px solid #767676;border-radius:2px;text-align:center;line-height:18px;font-size:12px;color:#111;letter-spacing:-0.2px;">파일 선택</div>
<div class="t n" style="left:2813px;top:682px;color:#333;font-size:12px;letter-spacing:0.3px;">선택된 파일 없음</div>
<div style="left:2653px;top:707px;width:666px;height:1px;background:#cfcfcf;"></div>
<div class="t n" style="left:2682px;top:720px;color:#555;font-size:12px;letter-spacing:-0.9px;">첨부파일4</div>
<div style="left:2741px;top:713px;width:548px;height:26px;background:#fff;border:1px solid #c8c8c8;border-top-color:#8c8c8c;border-left-color:#8c8c8c;"></div>
<div class="n" style="left:2743px;top:716px;width:66px;height:20px;background:#efefef;border:1px solid #767676;border-radius:2px;text-align:center;line-height:18px;font-size:12px;color:#111;letter-spacing:-0.2px;">파일 선택</div>
<div class="t n" style="left:2813px;top:719px;color:#333;font-size:12px;letter-spacing:0.3px;">선택된 파일 없음</div>
<div style="left:2653px;top:744px;width:666px;height:1px;background:#cfcfcf;"></div>
<div style="left:2919px;top:801px;width:38px;height:19px;background:#efefef;border:1px solid #8a8a8a;text-align:center;line-height:17px;font-size:12px;color:#333;">쓰기</div>
<div style="left:2967px;top:801px;width:38px;height:19px;background:#efefef;border:1px solid #8a8a8a;text-align:center;line-height:17px;font-size:12px;color:#333;">취소</div>
<div style="left:3015px;top:801px;width:38px;height:19px;background:#efefef;border:1px solid #8a8a8a;text-align:center;line-height:17px;font-size:12px;color:#333;">목록</div>
<div style="left:1920px;top:840px;width:1920px;height:154px;background:#c3c5c4;"></div>
<svg style="left:2440px;top:851px" width="26" height="14"><path d="M0 14C6 6 14 2 25 0 18 4 12 8 8 14z" fill="#a0a2a1"/></svg>
<div class="t" style="left:2469px;top:850px;color:#a2a4a3;font-size:34px;line-height:44px;font-style:italic;-webkit-text-stroke:0.700px #a2a4a3;font-family:'Liberation Sans',sans-serif;transform:scaleX(.9);transform-origin:0 0;">YesStock</div>
<div class="t n" style="left:2158px;top:897px;width:1000px;text-align:right;color:#7e8180;font-size:11px;letter-spacing:-0.52px;">투자자문업 및 소프트웨어 판매업 신고번호 제 강남-7330호 / 사업자등록번호 : 120-81-50666 / 상호명 : ㈜예스스탁 / 서울시 강남구 강남대로66길 8 카이로스빌딩 5F.6F / 02)3453-1060</div>
<div class="t n" style="left:2212px;top:914px;width:300px;text-align:right;color:#7e8180;font-size:11px;letter-spacing:-0.52px;color:#3e5a86;font-weight:bold;">개인정보취급방침</div>
<div class="t n" style="left:2520px;top:914px;color:#7e8180;font-size:11px;letter-spacing:-0.52px;font-size:11.500px;letter-spacing:-0.1px;">Copyright ⓒ 1999~2012 YesStock Inc. All rights reserved.</div>
<div class="t n" style="left:1917px;top:937px;width:1000px;text-align:right;color:#7e8180;font-size:11px;letter-spacing:-0.52px;">예스스탁의 모든 내용은 정보를 제공하기 위한 것이며, 투자권유 또는 주식거래를 목적으로 하지 않습니다.</div>
<div class="t n" style="left:1808px;top:954px;width:1000px;text-align:right;color:#7e8180;font-size:11px;letter-spacing:-0.52px;">따라서 본 사이트의 오류 및 지연에 대해 ㈜예스스탁에게는 어떠한 책임도 없습니다.</div>
<div class="t n" style="left:2036px;top:970px;width:1000px;text-align:right;color:#7e8180;font-size:11px;letter-spacing:-0.52px;">또한 시스템시장을 통해 유통되는 시스템식에 대해 어떠한 책임도 없으며, 시스템식을 매매에 활용하는 것은 투자자 본인의 책임입니다.</div>
<!-- s_winC -->
<div style="left:2064px;top:533px;width:389px;height:490px;background:#b6b6b6;border:1px solid #8a8a8a;overflow:hidden;">
<div style="left:3px;top:0px;width:383px;height:25px;background:#3a5692;"></div>
<div style="left:5px;top:5px;width:14px;height:16px;border:1.500px solid #e8ecf6;border-radius:3px;color:#fff;font-weight:bold;font-size:11px;line-height:13px;text-align:center;background:#4a68a8;">1</div>
<div class="t" style="left:24px;top:6px;color:#fff;font-size:12px;letter-spacing:0.1px;">[0156] 조건검색실시간</div>
<svg style="left:184px;top:5px" width="16" height="15"><rect x=".500" y="3.500" width="14" height="11" fill="none" stroke="#fff"/><path d="M3 13V9M6 13V7M9 13V9.500M12 13V6" stroke="#f08a0a" stroke-width="2"/><path d="M2 7l4-3 3 2 5-5" stroke="#fff" fill="none"/></svg>
<div class="t" style="left:201px;top:6px;color:#b4c2e0;font-size:12px;letter-spacing:-1px;">분석</div>
<div style="left:224px;top:5px;width:1px;height:15px;background:#8a9cc4;"></div>
<svg style="left:232px;top:6px" width="13" height="13"><rect x="4.500" y=".500" width="8" height="6" fill="none" stroke="#a9b8d8" stroke-width="1.300"/><rect x=".500" y="4.500" width="8" height="7" fill="#3a5692" stroke="#a9b8d8" stroke-width="1.300"/></svg>
<svg style="left:253px;top:6px" width="12" height="13"><path d="M0 1h12" stroke="#a9b8d8" stroke-width="1.600"/><path d="M6 4l4.500 4.500H7.500V13h-3V8.500H1.500z" fill="#a9b8d8"/></svg>
<svg style="left:272px;top:6px" width="14" height="13"><rect x="3.500" y=".500" width="10" height="8" fill="none" stroke="#a9b8d8" stroke-width="1.300"/><rect x=".500" y="4.500" width="8" height="7" fill="#3a5692" stroke="#a9b8d8" stroke-width="1.300"/></svg>
<svg style="left:292px;top:5px" width="12" height="15"><path d="M2 0h8v2H8.500v4.500L11 8.500V10H7v5H5v-5H1V8.500L3.500 6.500V2H2z" fill="#a9b8d8"/></svg>
<div class="t" style="left:312px;top:5px;color:#a9b8d8;font-size:13px;">?</div>
<div style="left:330px;top:5px;width:1px;height:15px;background:#8a9cc4;"></div>
<div style="left:336px;top:18px;width:12px;height:2px;background:#a9b8d8;"></div>
<svg style="left:356px;top:7px" width="12" height="12"><rect x=".700" y="1.500" width="10.600" height="9.800" fill="none" stroke="#a9b8d8" stroke-width="1.400"/><path d="M0 2h12" stroke="#a9b8d8" stroke-width="2.400"/></svg>
<svg style="left:375px;top:7px" width="11" height="11"><path d="M.5.5l10 10M10.500.5l-10 10" stroke="#a9b8d8" stroke-width="1.300"/></svg>
<div style="left:3px;top:25px;width:383px;height:55px;background:#d4d4d4;"></div>
<div class="btn" style="left:10px;top:32px;width:20px;height:20px;"><svg width="18" height="17" style="left:0;top:1px"><path d="M3 9a5 5 0 019-3" stroke="#555" stroke-width="1.600" fill="none"/><path d="M1 8l2.500 3L6 8z" fill="#555"/><rect x="7.500" y="9.500" width="8" height="6" fill="#eee" stroke="#555"/><path d="M9 9.500v2h4v-2M9.500 15.500v-2h4v2" stroke="#555" fill="none"/></svg></div>
<div class="btn" style="left:33px;top:32px;width:19px;height:20px;font-weight:bold;font-size:10px;letter-spacing:1px;color:#444;">II</div>
<div class="inp" style="left:54px;top:32px;width:176px;height:20px;padding-left:3px;line-height:18px;font-size:12.500px;letter-spacing:0.5px;"></div>
<div class="btn" style="left:229px;top:32px;width:15px;height:20px;"><svg width="9" height="5" style="left:2px;top:7px"><path d="M0 0h8l-4 4.500z" fill="#555"/></svg></div>
<div class="btn" style="left:247px;top:32px;width:19px;height:20px;"><svg width="15" height="15" style="left:1px;top:2px"><path d="M12.500 6A5.500 5.500 0 002.500 5M2.500 9a5.500 5.500 0 0010 1" stroke="#555" stroke-width="1.700" fill="none"/><path d="M14 2v4.500H9.500zM1 13V8.500h4.500z" fill="#555"/></svg></div>
<div class="btn" style="left:269px;top:32px;width:19px;height:20px;"><svg width="15" height="15" style="left:1px;top:2px"><path d="M1 1v13h13" stroke="#666" fill="none"/><path d="M2 10l3-4 3 2 5-5" stroke="#e02020" stroke-width="1.800" fill="none"/><path d="M2 7l3 3 3-2 5 1" stroke="#3a60c0" stroke-width="1" fill="none"/></svg></div>
<div class="btn" style="left:290px;top:32px;width:56px;height:20px;color:#9a9a9a;line-height:18px;letter-spacing:0.3px;">이탈삭제</div>
<div class="btn" style="left:349px;top:32px;width:19px;height:20px;font-weight:bold;font-size:10px;letter-spacing:1px;color:#444;">II</div>
<div class="btn" style="left:370px;top:32px;width:30px;height:20px;line-height:18px;text-align:left;padding-left:5px;">등록</div>
<div class="btn" style="left:10px;top:56px;width:20px;height:20px;"><svg width="14" height="14" style="left:2px;top:2px"><circle cx="7" cy="7" r="3.300" fill="none" stroke="#555" stroke-width="2.300"/><path d="M7 .3v2.400M7 11.300v2.400M.3 7h2.400M11.300 7h2.400M2.200 2.200l1.800 1.800M10 10l1.800 1.800M2.200 11.800L4 10M10 4l1.800-1.800" stroke="#555" stroke-width="2"/></svg></div>
<div class="btn" style="left:33px;top:56px;width:19px;height:20px;"><svg width="13" height="13" style="left:2px;top:3px"><path d="M1 1l11 11M12 1L1 12" stroke="#555" stroke-width="1.100"/></svg></div>
<div class="t" style="left:60px;top:59px;color:#444;letter-spacing:0.4px;"></div>
<div style="left:122px;top:61px;width:11px;height:11px;"><svg width="11" height="11"><rect x=".500" y=".500" width="10" height="10" fill="#fff" stroke="#333"/><path d="M2.500 5.500l2 2.300 4-5" stroke="#000" stroke-width="1.600" fill="none"/></svg></div>
<div class="t" style="left:136px;top:59px;color:#222;letter-spacing:-0.2px;">자동삭제</div>
<div style="left:186px;top:61px;width:11px;height:11px;"><svg width="11" height="11"><rect x=".500" y=".500" width="10" height="10" fill="#fff" stroke="#333"/><path d="M2.500 5.500l2 2.300 4-5" stroke="#000" stroke-width="1.600" fill="none"/></svg></div>
<div class="t" style="left:200px;top:59px;color:#222;letter-spacing:-0.2px;">종목연동</div>
<div style="left:249px;top:61px;width:11px;height:11px;"><svg width="11" height="11"><rect x=".500" y=".500" width="10" height="10" fill="#fff" stroke="#333"/><path d="M2.500 5.500l2 2.300 4-5" stroke="#000" stroke-width="1.600" fill="none"/></svg></div>
<div class="t" style="left:263px;top:59px;color:#222;letter-spacing:-0.2px;">소리</div>
<div class="btn" style="left:289px;top:56px;width:29px;height:20px;line-height:18px;">뉴스</div>
<div class="btn" style="left:320px;top:56px;width:29px;height:20px;line-height:18px;">관심</div>
<div class="btn" style="left:351px;top:56px;width:19px;height:20px;"><svg width="9" height="14" style="left:4px;top:2px"><path d="M4.500 0l4 4.500h-3v5h3l-4 4.500-4-4.500h3v-5h-3z" fill="#444"/></svg></div>
<div class="btn" style="left:372px;top:56px;width:19px;height:20px;"><svg width="16" height="14" style="left:2px;top:2px"><rect x=".500" y="1.500" width="10" height="11" fill="#fff" stroke="#444"/><path d="M.5 5h10M5.500 1.500v11" stroke="#444"/><path d="M12 3.500l4 3.500-4 3.500z" fill="#444"/></svg></div>
<div style="left:3px;top:80px;width:383px;height:410px;background:#ebebeb;border-top:1px solid #f8f8f8;"></div>
<div class="t" style="left:11px;top:87px;color:#333;">조건</div>
<div class="t" style="left:11px;top:107px;color:#333;">대상</div>
<div class="inp" style="left:41px;top:84px;width:282px;height:19px;padding-left:3px;line-height:17px;color:#444;letter-spacing:0.25px;border-color:#c4c4c4;"><span style="padding-left:172px">0000이상 999999999</span></div>
<div class="inp" style="left:41px;top:104px;width:282px;height:19px;padding-left:3px;line-height:17px;color:#444;letter-spacing:0.25px;border-color:#c4c4c4;"><span style="padding-left:172px">체월결산&gt;</span></div>
<div style="left:324px;top:84px;width:57px;height:19px;background:#cfe4fa;border:1px solid #2a5ad0;text-align:center;line-height:17px;color:#111;letter-spacing:0.3px;">비교분석</div>
<div style="left:324px;top:104px;width:57px;height:19px;background:#fbd8d4;border:1px solid #e03020;text-align:center;line-height:17px;color:#111;letter-spacing:0.3px;">지표분석</div>
<div style="left:8px;top:126px;width:358px;height:359px;background:#fbfcfe;border:1px solid #b4b4b4;"></div>
<div style="left:366px;top:126px;width:19px;height:359px;background:#c8c8c8;border-left:1px solid #e0e0e0;"></div>
<div style="left:366px;top:126px;width:19px;height:19px;background:#f0f0f0;border:1px solid #d8d8d8;"><svg width="10" height="7" style="left:3px;top:5px"><path d="M1 6l4-4 4 4" stroke="#444" stroke-width="1.600" fill="none"/></svg></div>
<div style="left:8px;top:126px;width:357px;height:19px;background:#dce6f3;border:1px solid #b8c4d4;"></div>
<div style="left:8px;top:127px;width:78px;height:17px;font-family:'Liberation Mono','Noto Sans CJK KR',monospace;font-weight:bold;font-size:13px;text-align:center;line-height:17px;letter-spacing:1.500px;color:#111;">종목명</div>
<div style="left:86px;top:127px;width:70px;height:17px;font-family:'Liberation Mono','Noto Sans CJK KR',monospace;font-weight:bold;font-size:13px;text-align:center;line-height:17px;letter-spacing:1.500px;color:#111;border-left:1px solid #b8c4d4;">현재가</div>
<div style="left:156px;top:127px;width:66px;height:17px;font-family:'Liberation Mono','Noto Sans CJK KR',monospace;font-weight:bold;font-size:13px;text-align:center;line-height:17px;letter-spacing:1.500px;color:#111;border-left:1px solid #b8c4d4;">대비</div>
<div style="left:222px;top:127px;width:60px;height:17px;font-family:'Liberation Mono','Noto Sans CJK KR',monospace;font-weight:bold;font-size:13px;text-align:center;line-height:17px;letter-spacing:1.500px;color:#111;border-left:1px solid #b8c4d4;">등락률</div>
<div style="left:282px;top:127px;width:83px;height:17px;font-family:'Liberation Mono','Noto Sans CJK KR',monospace;font-weight:bold;font-size:13px;text-align:center;line-height:17px;letter-spacing:1.500px;color:#111;border-left:1px solid #b8c4d4;">거래량</div>
<svg style="left:270px;top:131px" width="11" height="10"><path d="M.5.5h10L5.500 9.500z" fill="none" stroke="#777"/></svg>
<div style="left:9px;top:145px;width:356px;height:18px;background:#c9e6f3;"></div>
<div style="left:10px;top:145px;width:76px;height:18px;font-family:'Liberation Mono','Noto Sans CJK KR',monospace;font-weight:bold;font-size:13px;line-height:22px;letter-spacing:0.200px;color:#800a48;white-space:nowrap;overflow:hidden;"></div>
<div style="left:86px;top:145px;width:68px;height:18px;font-family:'Liberation Mono','Noto Sans CJK KR',monospace;font-weight:bold;font-size:13px;line-height:22px;text-align:right;letter-spacing:0.2px;overflow:hidden;color:#e61e0a;"></div>
<svg style="left:159px;top:149px" width="10" height="9"><path d="M5 0l5 8.500H0z" fill="#e61e0a"/></svg>
<div style="left:156px;top:145px;width:64px;height:18px;font-family:'Liberation Mono','Noto Sans CJK KR',monospace;font-weight:bold;font-size:13px;line-height:22px;text-align:right;letter-spacing:0.2px;overflow:hidden;color:#e61e0a;"></div>
<div style="left:222px;top:145px;width:58px;height:18px;font-family:'Liberation Mono','Noto Sans CJK KR',monospace;font-weight:bold;font-size:13px;line-height:22px;text-align:right;letter-spacing:0.2px;overflow:hidden;color:#e61e0a;">+11.97</div>
<div style="left:282px;top:145px;width:81px;height:18px;font-family:'Liberation Mono','Noto Sans CJK KR',monospace;font-weight:bold;font-size:13px;line-height:22px;text-align:right;letter-spacing:0.2px;overflow:hidden;color:#000;">8,255,179</div>
<div style="left:9px;top:163px;width:356px;height:18px;background:#fff;"></div>
<div style="left:10px;top:163px;width:76px;height:18px;font-family:'Liberation Mono','Noto Sans CJK KR',monospace;font-weight:bold;font-size:13px;line-height:22px;letter-spacing:0.200px;color:#800a48;white-space:nowrap;overflow:hidden;"></div>
<div style="left:86px;top:163px;width:68px;height:18px;font-family:'Liberation Mono','Noto Sans CJK KR',monospace;font-weight:bold;font-size:13px;line-height:22px;text-align:right;letter-spacing:0.2px;overflow:hidden;color:#e61e0a;"></div>
<svg style="left:159px;top:167px" width="10" height="9"><path d="M5 0l5 8.500H0z" fill="#e61e0a"/></svg>
<div style="left:156px;top:163px;width:64px;height:18px;font-family:'Liberation Mono','Noto Sans CJK KR',monospace;font-weight:bold;font-size:13px;line-height:22px;text-align:right;letter-spacing:0.2px;overflow:hidden;color:#e61e0a;"></div>
<div style="left:222px;top:163px;width:58px;height:18px;font-family:'Liberation Mono','Noto Sans CJK KR',monospace;font-weight:bold;font-size:13px;line-height:22px;text-align:right;letter-spacing:0.2px;overflow:hidden;color:#e61e0a;">+5.39</div>
<div style="left:282px;top:163px;width:81px;height:18px;font-family:'Liberation Mono','Noto Sans CJK KR',monospace;font-weight:bold;font-size:13px;line-height:22px;text-align:right;letter-spacing:0.2px;overflow:hidden;color:#000;">1,989,318</div>
<div style="left:9px;top:181px;width:356px;height:18px;background:#ececec;"></div>
<div style="left:10px;top:181px;width:76px;height:18px;font-family:'Liberation Mono','Noto Sans CJK KR',monospace;font-weight:bold;font-size:13px;line-height:22px;letter-spacing:0.200px;color:#800a48;white-space:nowrap;overflow:hidden;"></div>
<div style="left:86px;top:181px;width:68px;height:18px;font-family:'Liberation Mono','Noto Sans CJK KR',monospace;font-weight:bold;font-size:13px;line-height:22px;text-align:right;letter-spacing:0.2px;overflow:hidden;color:#e61e0a;"></div>
<svg style="left:159px;top:185px" width="10" height="9"><path d="M5 0l5 8.500H0z" fill="#e61e0a"/></svg>
<div style="left:156px;top:181px;width:64px;height:18px;font-family:'Liberation Mono','Noto Sans CJK KR',monospace;font-weight:bold;font-size:13px;line-height:22px;text-align:right;letter-spacing:0.2px;overflow:hidden;color:#e61e0a;"></div>
<div style="left:222px;top:181px;width:58px;height:18px;font-family:'Liberation Mono','Noto Sans CJK KR',monospace;font-weight:bold;font-size:13px;line-height:22px;text-align:right;letter-spacing:0.2px;overflow:hidden;color:#e61e0a;">+1.66</div>
<div style="left:282px;top:181px;width:81px;height:18px;font-family:'Liberation Mono','Noto Sans CJK KR',monospace;font-weight:bold;font-size:13px;line-height:22px;text-align:right;letter-spacing:0.2px;overflow:hidden;color:#000;">345,582</div>
<div style="left:9px;top:199px;width:356px;height:18px;background:#ececec;"></div>
<div style="left:10px;top:199px;width:76px;height:18px;font-family:'Liberation Mono','Noto Sans CJK KR',monospace;font-weight:bold;font-size:13px;line-height:22px;letter-spacing:0.200px;color:#800a48;white-space:nowrap;overflow:hidden;"></div>
<div style="left:86px;top:199px;width:68px;height:18px;font-family:'Liberation Mono','Noto Sans CJK KR',monospace;font-weight:bold;font-size:13px;line-height:22px;text-align:right;letter-spacing:0.2px;overflow:hidden;color:#e61e0a;"></div>
<svg style="left:159px;top:203px" width="10" height="9"><path d="M5 0l5 8.500H0z" fill="#e61e0a"/></svg>
<div style="left:156px;top:199px;width:64px;height:18px;font-family:'Liberation Mono','Noto Sans CJK KR',monospace;font-weight:bold;font-size:13px;line-height:22px;text-align:right;letter-spacing:0.2px;overflow:hidden;color:#e61e0a;"></div>
<div style="left:222px;top:199px;width:58px;height:18px;font-family:'Liberation Mono','Noto Sans CJK KR',monospace;font-weight:bold;font-size:13px;line-height:22px;text-align:right;letter-spacing:0.2px;overflow:hidden;color:#e61e0a;">+1.23</div>
<div style="left:282px;top:199px;width:81px;height:18px;font-family:'Liberation Mono','Noto Sans CJK KR',monospace;font-weight:bold;font-size:13px;line-height:22px;text-align:right;letter-spacing:0.2px;overflow:hidden;color:#000;">1,977,100</div>
<div style="left:9px;top:217px;width:356px;height:18px;background:#fff;"></div>
<div style="left:10px;top:217px;width:76px;height:18px;font-family:'Liberation Mono','Noto Sans CJK KR',monospace;font-weight:bold;font-size:13px;line-height:22px;letter-spacing:0.200px;color:#800a48;white-space:nowrap;overflow:hidden;"></div>
<div style="left:86px;top:217px;width:68px;height:18px;font-family:'Liberation Mono','Noto Sans CJK KR',monospace;font-weight:bold;font-size:13px;line-height:22px;text-align:right;letter-spacing:0.2px;overflow:hidden;color:#e61e0a;"></div>
<svg style="left:159px;top:221px" width="10" height="9"><path d="M5 0l5 8.500H0z" fill="#e61e0a"/></svg>
<div style="left:156px;top:217px;width:64px;height:18px;font-family:'Liberation Mono','Noto Sans CJK KR',monospace;font-weight:bold;font-size:13px;line-height:22px;text-align:right;letter-spacing:0.2px;overflow:hidden;color:#e61e0a;"></div>
<div style="left:222px;top:217px;width:58px;height:18px;font-family:'Liberation Mono','Noto Sans CJK KR',monospace;font-weight:bold;font-size:13px;line-height:22px;text-align:right;letter-spacing:0.2px;overflow:hidden;color:#e61e0a;">+0.14</div>
<div style="left:282px;top:217px;width:81px;height:18px;font-family:'Liberation Mono','Noto Sans CJK KR',monospace;font-weight:bold;font-size:13px;line-height:22px;text-align:right;letter-spacing:0.2px;overflow:hidden;color:#000;">438,939</div>
<div style="left:9px;top:235px;width:356px;height:18px;background:#fff;"></div>
<div style="left:10px;top:235px;width:76px;height:18px;font-family:'Liberation Mono','Noto Sans CJK KR',monospace;font-weight:bold;font-size:13px;line-height:22px;letter-spacing:0.200px;color:#800a48;white-space:nowrap;overflow:hidden;"></div>
<div style="left:86px;top:235px;width:68px;height:18px;font-family:'Liberation Mono','Noto Sans CJK KR',monospace;font-weight:bold;font-size:13px;line-height:22px;text-align:right;letter-spacing:0.2px;overflow:hidden;color:#1545c8;"></div>
<svg style="left:159px;top:239px" width="10" height="9"><path d="M0 0h10L5 8.500z" fill="#1545c8"/></svg>
<div style="left:156px;top:235px;width:64px;height:18px;font-family:'Liberation Mono','Noto Sans CJK KR',monospace;font-weight:bold;font-size:13px;line-height:22px;text-align:right;letter-spacing:0.2px;overflow:hidden;color:#1545c8;"></div>
<div style="left:222px;top:235px;width:58px;height:18px;font-family:'Liberation Mono','Noto Sans CJK KR',monospace;font-weight:bold;font-size:13px;line-height:22px;text-align:right;letter-spacing:0.2px;overflow:hidden;color:#1545c8;">-0.48</div>
<div style="left:282px;top:235px;width:81px;height:18px;font-family:'Liberation Mono','Noto Sans CJK KR',monospace;font-weight:bold;font-size:13px;line-height:22px;text-align:right;letter-spacing:0.2px;overflow:hidden;color:#000;">133,925</div>
<div style="left:9px;top:253px;width:356px;height:18px;background:#ececec;"></div>
<div style="left:10px;top:253px;width:76px;height:18px;font-family:'Liberation Mono','Noto Sans CJK KR',monospace;font-weight:bold;font-size:13px;line-height:22px;letter-spacing:0.200px;color:#800a48;white-space:nowrap;overflow:hidden;"></div>
<div style="left:86px;top:253px;width:68px;height:18px;font-family:'Liberation Mono','Noto Sans CJK KR',monospace;font-weight:bold;font-size:13px;line-height:22px;text-align:right;letter-spacing:0.2px;overflow:hidden;color:#1545c8;"></div>
<svg style="left:159px;top:257px" width="10" height="9"><path d="M0 0h10L5 8.500z" fill="#1545c8"/></svg>
<div style="left:156px;top:253px;width:64px;height:18px;font-family:'Liberation Mono','Noto Sans CJK KR',monospace;font-weight:bold;font-size:13px;line-height:22px;text-align:right;letter-spacing:0.2px;overflow:hidden;color:#1545c8;"></div>
<div style="left:222px;top:253px;width:58px;height:18px;font-family:'Liberation Mono','Noto Sans CJK KR',monospace;font-weight:bold;font-size:13px;line-height:22px;text-align:right;letter-spacing:0.2px;overflow:hidden;color:#1545c8;">-0.68</div>
<div style="left:282px;top:253px;width:81px;height:18px;font-family:'Liberation Mono','Noto Sans CJK KR',monospace;font-weight:bold;font-size:13px;line-height:22px;text-align:right;letter-spacing:0.2px;overflow:hidden;color:#000;">1,518,133</div>
<div style="left:9px;top:271px;width:356px;height:18px;background:#ececec;"></div>
<div style="left:10px;top:271px;width:76px;height:18px;font-family:'Liberation Mono','Noto Sans CJK KR',monospace;font-weight:bold;font-size:13px;line-height:22px;letter-spacing:0.200px;color:#800a48;white-space:nowrap;overflow:hidden;"></div>
<div style="left:86px;top:271px;width:68px;height:18px;font-family:'Liberation Mono','Noto Sans CJK KR',monospace;font-weight:bold;font-size:13px;line-height:22px;text-align:right;letter-spacing:0.2px;overflow:hidden;color:#1545c8;"></div>
<svg style="left:159px;top:275px" width="10" height="9"><path d="M0 0h10L5 8.500z" fill="#1545c8"/></svg>
<div style="left:156px;top:271px;width:64px;height:18px;font-family:'Liberation Mono','Noto Sans CJK KR',monospace;font-weight:bold;font-size:13px;line-height:22px;text-align:right;letter-spacing:0.2px;overflow:hidden;color:#1545c8;"></div>
<div style="left:222px;top:271px;width:58px;height:18px;font-family:'Liberation Mono','Noto Sans CJK KR',monospace;font-weight:bold;font-size:13px;line-height:22px;text-align:right;letter-spacing:0.2px;overflow:hidden;color:#1545c8;">-0.72</div>
<div style="left:282px;top:271px;width:81px;height:18px;font-family:'Liberation Mono','Noto Sans CJK KR',monospace;font-weight:bold;font-size:13px;line-height:22px;text-align:right;letter-spacing:0.2px;overflow:hidden;color:#000;">234,012</div>
<div style="left:9px;top:289px;width:356px;height:18px;background:#fff;"></div>
<div style="left:10px;top:289px;width:76px;height:18px;font-family:'Liberation Mono','Noto Sans CJK KR',monospace;font-weight:bold;font-size:13px;line-height:22px;letter-spacing:0.200px;color:#800a48;white-space:nowrap;overflow:hidden;"></div>
<div style="left:86px;top:289px;width:68px;height:18px;font-family:'Liberation Mono','Noto Sans CJK KR',monospace;font-weight:bold;font-size:13px;line-height:22px;text-align:right;letter-spacing:0.2px;overflow:hidden;color:#1545c8;"></div>
<svg style="left:159px;top:293px" width="10" height="9"><path d="M0 0h10L5 8.500z" fill="#1545c8"/></svg>
<div style="left:156px;top:289px;width:64px;height:18px;font-family:'Liberation Mono','Noto Sans CJK KR',monospace;font-weight:bold;font-size:13px;line-height:22px;text-align:right;letter-spacing:0.2px;overflow:hidden;color:#1545c8;"></div>
<div style="left:222px;top:289px;width:58px;height:18px;font-family:'Liberation Mono','Noto Sans CJK KR',monospace;font-weight:bold;font-size:13px;line-height:22px;text-align:right;letter-spacing:0.2px;overflow:hidden;color:#1545c8;">-1.50</div>
<div style="left:282px;top:289px;width:81px;height:18px;font-family:'Liberation Mono','Noto Sans CJK KR',monospace;font-weight:bold;font-size:13px;line-height:22px;text-align:right;letter-spacing:0.2px;overflow:hidden;color:#000;">4,221,971</div>
<div style="left:9px;top:307px;width:356px;height:18px;background:#fff;"></div>
<div style="left:10px;top:307px;width:76px;height:18px;font-family:'Liberation Mono','Noto Sans CJK KR',monospace;font-weight:bold;font-size:13px;line-height:22px;letter-spacing:0.200px;color:#800a48;white-space:nowrap;overflow:hidden;"></div>
<div style="left:86px;top:307px;width:68px;height:18px;font-family:'Liberation Mono','Noto Sans CJK KR',monospace;font-weight:bold;font-size:13px;line-height:22px;text-align:right;letter-spacing:0.2px;overflow:hidden;color:#1545c8;"></div>
<svg style="left:159px;top:311px" width="10" height="9"><path d="M0 0h10L5 8.500z" fill="#1545c8"/></svg>
<div style="left:156px;top:307px;width:64px;height:18px;font-family:'Liberation Mono','Noto Sans CJK KR',monospace;font-weight:bold;font-size:13px;line-height:22px;text-align:right;letter-spacing:0.2px;overflow:hidden;color:#1545c8;"></div>
<div style="left:222px;top:307px;width:58px;height:18px;font-family:'Liberation Mono','Noto Sans CJK KR',monospace;font-weight:bold;font-size:13px;line-height:22px;text-align:right;letter-spacing:0.2px;overflow:hidden;color:#1545c8;">-2.13</div>
<div style="left:282px;top:307px;width:81px;height:18px;font-family:'Liberation Mono','Noto Sans CJK KR',monospace;font-weight:bold;font-size:13px;line-height:22px;text-align:right;letter-spacing:0.2px;overflow:hidden;color:#000;">234,675</div>
<div style="left:9px;top:325px;width:356px;height:18px;background:#ececec;"></div>
<div style="left:10px;top:325px;width:76px;height:18px;font-family:'Liberation Mono','Noto Sans CJK KR',monospace;font-weight:bold;font-size:13px;line-height:22px;letter-spacing:0.200px;color:#800a48;white-space:nowrap;overflow:hidden;"></div>
<div style="left:86px;top:325px;width:68px;height:18px;font-family:'Liberation Mono','Noto Sans CJK KR',monospace;font-weight:bold;font-size:13px;line-height:22px;text-align:right;letter-spacing:0.2px;overflow:hidden;color:#1545c8;"></div>
<svg style="left:159px;top:329px" width="10" height="9"><path d="M0 0h10L5 8.500z" fill="#1545c8"/></svg>
<div style="left:156px;top:325px;width:64px;height:18px;font-family:'Liberation Mono','Noto Sans CJK KR',monospace;font-weight:bold;font-size:13px;line-height:22px;text-align:right;letter-spacing:0.2px;overflow:hidden;color:#1545c8;"></div>
<div style="left:222px;top:325px;width:58px;height:18px;font-family:'Liberation Mono','Noto Sans CJK KR',monospace;font-weight:bold;font-size:13px;line-height:22px;text-align:right;letter-spacing:0.2px;overflow:hidden;color:#1545c8;">-3.27</div>
<div style="left:282px;top:325px;width:81px;height:18px;font-family:'Liberation Mono','Noto Sans CJK KR',monospace;font-weight:bold;font-size:13px;line-height:22px;text-align:right;letter-spacing:0.2px;overflow:hidden;color:#000;">519,611</div>
<div style="left:9px;top:343px;width:356px;height:18px;background:#ececec;"></div>
<div style="left:10px;top:343px;width:76px;height:18px;font-family:'Liberation Mono','Noto Sans CJK KR',monospace;font-weight:bold;font-size:13px;line-height:22px;letter-spacing:0.200px;color:#800a48;white-space:nowrap;overflow:hidden;"></div>
<div style="left:86px;top:343px;width:68px;height:18px;font-family:'Liberation Mono','Noto Sans CJK KR',monospace;font-weight:bold;font-size:13px;line-height:22px;text-align:right;letter-spacing:0.2px;overflow:hidden;color:#1545c8;"></div>
<svg style="left:159px;top:347px" width="10" height="9"><path d="M0 0h10L5 8.500z" fill="#1545c8"/></svg>
<div style="left:156px;top:343px;width:64px;height:18px;font-family:'Liberation Mono','Noto Sans CJK KR',monospace;font-weight:bold;font-size:13px;line-height:22px;text-align:right;letter-spacing:0.2px;overflow:hidden;color:#1545c8;"></div>
<div style="left:222px;top:343px;width:58px;height:18px;font-family:'Liberation Mono','Noto Sans CJK KR',monospace;font-weight:bold;font-size:13px;line-height:22px;text-align:right;letter-spacing:0.2px;overflow:hidden;color:#1545c8;">-4.74</div>
<div style="left:282px;top:343px;width:81px;height:18px;font-family:'Liberation Mono','Noto Sans CJK KR',monospace;font-weight:bold;font-size:13px;line-height:22px;text-align:right;letter-spacing:0.2px;overflow:hidden;color:#000;">577,813</div>
<div style="left:86px;top:145px;width:1px;height:216px;background:#c4c8d0;"></div>
<div style="left:156px;top:145px;width:1px;height:216px;background:#c4c8d0;"></div>
<div style="left:222px;top:145px;width:1px;height:216px;background:#c4c8d0;"></div>
<div style="left:282px;top:145px;width:1px;height:216px;background:#c4c8d0;"></div>
<div style="left:365px;top:145px;width:1px;height:216px;background:#c4c8d0;"></div>
<div style="left:8px;top:361px;width:358px;height:1px;background:#c4c8d0;"></div>
</div>
<!-- s_winB -->
<div style="left:1899px;top:432px;width:386px;height:605px;background:#b6b6b6;border:1px solid #8a8a8a;overflow:hidden;">
<div style="left:3px;top:0px;width:380px;height:25px;background:#3a5692;"></div>
<div style="left:5px;top:5px;width:14px;height:16px;border:1.500px solid #e8ecf6;border-radius:3px;color:#fff;font-weight:bold;font-size:11px;line-height:13px;text-align:center;background:#4a68a8;">1</div>
<div class="t" style="left:24px;top:6px;color:#fff;font-size:12px;letter-spacing:0.1px;">[0156] 조건검색실시간 -</div>
<svg style="left:184px;top:5px" width="16" height="15"><rect x=".500" y="3.500" width="14" height="11" fill="none" stroke="#fff"/><path d="M3 13V9M6 13V7M9 13V9.500M12 13V6" stroke="#f08a0a" stroke-width="2"/><path d="M2 7l4-3 3 2 5-5" stroke="#fff" fill="none"/></svg>
<div class="t" style="left:201px;top:6px;color:#b4c2e0;font-size:12px;letter-spacing:-1px;">분석</div>
<div style="left:224px;top:5px;width:1px;height:15px;background:#8a9cc4;"></div>
<svg style="left:232px;top:6px" width="13" height="13"><rect x="4.500" y=".500" width="8" height="6" fill="none" stroke="#a9b8d8" stroke-width="1.300"/><rect x=".500" y="4.500" width="8" height="7" fill="#3a5692" stroke="#a9b8d8" stroke-width="1.300"/></svg>
<svg style="left:253px;top:6px" width="12" height="13"><path d="M0 1h12" stroke="#a9b8d8" stroke-width="1.600"/><path d="M6 4l4.500 4.500H7.500V13h-3V8.500H1.500z" fill="#a9b8d8"/></svg>
<svg style="left:272px;top:6px" width="14" height="13"><rect x="3.500" y=".500" width="10" height="8" fill="none" stroke="#a9b8d8" stroke-width="1.300"/><rect x=".500" y="4.500" width="8" height="7" fill="#3a5692" stroke="#a9b8d8" stroke-width="1.300"/></svg>
<svg style="left:292px;top:5px" width="12" height="15"><path d="M2 0h8v2H8.500v4.500L11 8.500V10H7v5H5v-5H1V8.500L3.500 6.500V2H2z" fill="#a9b8d8"/></svg>
<div class="t" style="left:312px;top:5px;color:#a9b8d8;font-size:13px;">?</div>
<div style="left:330px;top:5px;width:1px;height:15px;background:#8a9cc4;"></div>
<div style="left:336px;top:18px;width:12px;height:2px;background:#a9b8d8;"></div>
<svg style="left:356px;top:7px" width="12" height="12"><rect x=".700" y="1.500" width="10.600" height="9.800" fill="none" stroke="#a9b8d8" stroke-width="1.400"/><path d="M0 2h12" stroke="#a9b8d8" stroke-width="2.400"/></svg>
<svg style="left:375px;top:7px" width="11" height="11"><path d="M.5.5l10 10M10.500.5l-10 10" stroke="#a9b8d8" stroke-width="1.300"/></svg>
<div style="left:3px;top:25px;width:380px;height:55px;background:#d4d4d4;"></div>
<div class="btn" style="left:10px;top:32px;width:20px;height:20px;"><svg width="18" height="17" style="left:0;top:1px"><path d="M3 9a5 5 0 019-3" stroke="#555" stroke-width="1.600" fill="none"/><path d="M1 8l2.500 3L6 8z" fill="#555"/><rect x="7.500" y="9.500" width="8" height="6" fill="#eee" stroke="#555"/><path d="M9 9.500v2h4v-2M9.500 15.500v-2h4v2" stroke="#555" fill="none"/></svg></div>
<div class="btn" style="left:33px;top:32px;width:19px;height:20px;font-weight:bold;font-size:10px;letter-spacing:1px;color:#444;">II</div>
<div class="inp" style="left:54px;top:32px;width:176px;height:20px;padding-left:3px;line-height:18px;font-size:12.500px;letter-spacing:0.5px;">[012]밥그릇 테스트</div>
<div class="btn" style="left:229px;top:32px;width:15px;height:20px;"><svg width="9" height="5" style="left:2px;top:7px"><path d="M0 0h8l-4 4.500z" fill="#555"/></svg></div>
<div class="btn" style="left:247px;top:32px;width:19px;height:20px;"><svg width="15" height="15" style="left:1px;top:2px"><path d="M12.500 6A5.500 5.500 0 002.500 5M2.500 9a5.500 5.500 0 0010 1" stroke="#555" stroke-width="1.700" fill="none"/><path d="M14 2v4.500H9.500zM1 13V8.500h4.500z" fill="#555"/></svg></div>
<div class="btn" style="left:269px;top:32px;width:19px;height:20px;"><svg width="15" height="15" style="left:1px;top:2px"><path d="M1 1v13h13" stroke="#666" fill="none"/><path d="M2 10l3-4 3 2 5-5" stroke="#e02020" stroke-width="1.800" fill="none"/><path d="M2 7l3 3 3-2 5 1" stroke="#3a60c0" stroke-width="1" fill="none"/></svg></div>
<div class="btn" style="left:290px;top:32px;width:56px;height:20px;color:#9a9a9a;line-height:18px;letter-spacing:0.3px;">이탈삭제</div>
<div class="btn" style="left:349px;top:32px;width:19px;height:20px;font-weight:bold;font-size:10px;letter-spacing:1px;color:#444;">II</div>
<div class="btn" style="left:370px;top:32px;width:30px;height:20px;line-height:18px;text-align:left;padding-left:5px;">등록</div>
<div class="btn" style="left:10px;top:56px;width:20px;height:20px;"><svg width="14" height="14" style="left:2px;top:2px"><circle cx="7" cy="7" r="3.300" fill="none" stroke="#555" stroke-width="2.300"/><path d="M7 .3v2.400M7 11.300v2.400M.3 7h2.400M11.300 7h2.400M2.200 2.200l1.800 1.800M10 10l1.800 1.800M2.200 11.800L4 10M10 4l1.800-1.800" stroke="#555" stroke-width="2"/></svg></div>
<div class="btn" style="left:33px;top:56px;width:19px;height:20px;"><svg width="13" height="13" style="left:2px;top:3px"><path d="M1 1l11 11M12 1L1 12" stroke="#555" stroke-width="1.100"/></svg></div>
<div class="t" style="left:60px;top:59px;color:#444;letter-spacing:0.4px;">종목수:9</div>
<div style="left:122px;top:61px;width:11px;height:11px;"><svg width="11" height="11"><rect x=".500" y=".500" width="10" height="10" fill="#fff" stroke="#333"/><path d="M2.500 5.500l2 2.300 4-5" stroke="#000" stroke-width="1.600" fill="none"/></svg></div>
<div class="t" style="left:136px;top:59px;color:#222;letter-spacing:-0.2px;">자동삭제</div>
<div style="left:186px;top:61px;width:11px;height:11px;"><svg width="11" height="11"><rect x=".500" y=".500" width="10" height="10" fill="#fff" stroke="#333"/><path d="M2.500 5.500l2 2.300 4-5" stroke="#000" stroke-width="1.600" fill="none"/></svg></div>
<div class="t" style="left:200px;top:59px;color:#222;letter-spacing:-0.2px;">종목연동</div>
<div style="left:249px;top:61px;width:11px;height:11px;"><svg width="11" height="11"><rect x=".500" y=".500" width="10" height="10" fill="#fff" stroke="#333"/><path d="M2.500 5.500l2 2.300 4-5" stroke="#000" stroke-width="1.600" fill="none"/></svg></div>
<div class="t" style="left:263px;top:59px;color:#222;letter-spacing:-0.2px;">소리</div>
<div class="btn" style="left:289px;top:56px;width:29px;height:20px;line-height:18px;">뉴스</div>
<div class="btn" style="left:320px;top:56px;width:29px;height:20px;line-height:18px;">관심</div>
<div class="btn" style="left:351px;top:56px;width:19px;height:20px;"><svg width="9" height="14" style="left:4px;top:2px"><path d="M4.500 0l4 4.500h-3v5h3l-4 4.500-4-4.500h3v-5h-3z" fill="#444"/></svg></div>
<div class="btn" style="left:372px;top:56px;width:19px;height:20px;"><svg width="16" height="14" style="left:2px;top:2px"><rect x=".500" y="1.500" width="10" height="11" fill="#fff" stroke="#444"/><path d="M.5 5h10M5.500 1.500v11" stroke="#444"/><path d="M12 3.500l4 3.500-4 3.500z" fill="#444"/></svg></div>
<div style="left:3px;top:80px;width:380px;height:525px;background:#ebebeb;border-top:1px solid #f8f8f8;"></div>
<div class="t" style="left:11px;top:87px;color:#333;">조건</div>
<div class="t" style="left:11px;top:107px;color:#333;">대상</div>
<div class="inp" style="left:41px;top:84px;width:282px;height:19px;padding-left:3px;line-height:17px;color:#444;letter-spacing:0.25px;border-color:#c4c4c4;">상세이평돌파:[일]0봉전</div>
<div class="inp" style="left:41px;top:104px;width:282px;height:19px;padding-left:3px;line-height:17px;color:#444;letter-spacing:0.25px;border-color:#c4c4c4;">&lt;업종대상(전체)&gt;&lt;관리</div>
<div style="left:324px;top:84px;width:57px;height:19px;background:#cfe4fa;border:1px solid #2a5ad0;text-align:center;line-height:17px;color:#111;letter-spacing:0.3px;">비교분석</div>
<div style="left:324px;top:104px;width:57px;height:19px;background:#fbd8d4;border:1px solid #e03020;text-align:center;line-height:17px;color:#111;letter-spacing:0.3px;">지표분석</div>
<div style="left:8px;top:126px;width:358px;height:474px;background:#fbfcfe;border:1px solid #b4b4b4;"></div>
<div style="left:366px;top:126px;width:16px;height:474px;background:#c8c8c8;border-left:1px solid #e0e0e0;"></div>
<div style="left:366px;top:126px;width:16px;height:19px;background:#f0f0f0;border:1px solid #d8d8d8;"><svg width="10" height="7" style="left:3px;top:5px"><path d="M1 6l4-4 4 4" stroke="#444" stroke-width="1.600" fill="none"/></svg></div>
<div style="left:8px;top:126px;width:357px;height:19px;background:#dce6f3;border:1px solid #b8c4d4;"></div>
<div style="left:8px;top:127px;width:78px;height:17px;font-family:'Liberation Mono','Noto Sans CJK KR',monospace;font-weight:bold;font-size:13px;text-align:center;line-height:17px;letter-spacing:1.500px;color:#111;">종목명</div>
<div style="left:86px;top:127px;width:70px;height:17px;font-family:'Liberation Mono','Noto Sans CJK KR',monospace;font-weight:bold;font-size:13px;text-align:center;line-height:17px;letter-spacing:1.500px;color:#111;border-left:1px solid #b8c4d4;">현재가</div>
<div style="left:156px;top:127px;width:66px;height:17px;font-family:'Liberation Mono','Noto Sans CJK KR',monospace;font-weight:bold;font-size:13px;text-align:center;line-height:17px;letter-spacing:1.500px;color:#111;border-left:1px solid #b8c4d4;">대비</div>
<div style="left:222px;top:127px;width:60px;height:17px;font-family:'Liberation Mono','Noto Sans CJK KR',monospace;font-weight:bold;font-size:13px;text-align:center;line-height:17px;letter-spacing:1.500px;color:#111;border-left:1px solid #b8c4d4;">등락률</div>
<div style="left:282px;top:127px;width:83px;height:17px;font-family:'Liberation Mono','Noto Sans CJK KR',monospace;font-weight:bold;font-size:13px;text-align:center;line-height:17px;letter-spacing:1.500px;color:#111;border-left:1px solid #b8c4d4;">거래량</div>
<svg style="left:270px;top:131px" width="11" height="10"><path d="M.5.5h10L5.500 9.500z" fill="none" stroke="#777"/></svg>
<div style="left:9px;top:145px;width:356px;height:18px;background:#c9e6f3;"></div>
<div style="left:10px;top:145px;width:76px;height:18px;font-family:'Liberation Mono','Noto Sans CJK KR',monospace;font-weight:bold;font-size:13px;line-height:22px;letter-spacing:2.400px;color:#800a48;white-space:nowrap;overflow:hidden;">앤씨앤</div>
<div style="left:86px;top:145px;width:68px;height:18px;font-family:'Liberation Mono','Noto Sans CJK KR',monospace;font-weight:bold;font-size:13px;line-height:22px;text-align:right;letter-spacing:0.2px;overflow:hidden;color:#e61e0a;">2,515</div>
<svg style="left:159px;top:149px" width="10" height="9"><path d="M5 0l5 8.500H0z" fill="#e61e0a"/></svg>
<div style="left:156px;top:145px;width:64px;height:18px;font-family:'Liberation Mono','Noto Sans CJK KR',monospace;font-weight:bold;font-size:13px;line-height:22px;text-align:right;letter-spacing:0.2px;overflow:hidden;color:#e61e0a;">455</div>
<div style="left:222px;top:145px;width:58px;height:18px;font-family:'Liberation Mono','Noto Sans CJK KR',monospace;font-weight:bold;font-size:13px;line-height:22px;text-align:right;letter-spacing:0.2px;overflow:hidden;color:#e61e0a;">+22.09</div>
<div style="left:282px;top:145px;width:81px;height:18px;font-family:'Liberation Mono','Noto Sans CJK KR',monospace;font-weight:bold;font-size:13px;line-height:22px;text-align:right;letter-spacing:0.2px;overflow:hidden;color:#000;">7,199,640</div>
<div style="left:9px;top:163px;width:356px;height:18px;background:#fff;"></div>
<div style="left:10px;top:163px;width:76px;height:18px;font-family:'Liberation Mono','Noto Sans CJK KR',monospace;font-weight:bold;font-size:13px;line-height:22px;letter-spacing:2.400px;color:#000;white-space:nowrap;overflow:hidden;">세우글로벌</div>
<div style="left:86px;top:163px;width:68px;height:18px;font-family:'Liberation Mono','Noto Sans CJK KR',monospace;font-weight:bold;font-size:13px;line-height:22px;text-align:right;letter-spacing:0.2px;overflow:hidden;color:#e61e0a;">1,424</div>
<svg style="left:159px;top:167px" width="10" height="9"><path d="M5 0l5 8.500H0z" fill="#e61e0a"/></svg>
<div style="left:156px;top:163px;width:64px;height:18px;font-family:'Liberation Mono','Noto Sans CJK KR',monospace;font-weight:bold;font-size:13px;line-height:22px;text-align:right;letter-spacing:0.2px;overflow:hidden;color:#e61e0a;">83</div>
<div style="left:222px;top:163px;width:58px;height:18px;font-family:'Liberation Mono','Noto Sans CJK KR',monospace;font-weight:bold;font-size:13px;line-height:22px;text-align:right;letter-spacing:0.2px;overflow:hidden;color:#e61e0a;">+6.19</div>
<div style="left:282px;top:163px;width:81px;height:18px;font-family:'Liberation Mono','Noto Sans CJK KR',monospace;font-weight:bold;font-size:13px;line-height:22px;text-align:right;letter-spacing:0.2px;overflow:hidden;color:#000;">1,530,364</div>
<div style="left:9px;top:181px;width:356px;height:18px;background:#ececec;"></div>
<div style="left:10px;top:181px;width:76px;height:18px;font-family:'Liberation Mono','Noto Sans CJK KR',monospace;font-weight:bold;font-size:13px;line-height:22px;letter-spacing:2.400px;color:#800a48;white-space:nowrap;overflow:hidden;">메디프론</div>
<div style="left:86px;top:181px;width:68px;height:18px;font-family:'Liberation Mono','Noto Sans CJK KR',monospace;font-weight:bold;font-size:13px;line-height:22px;text-align:right;letter-spacing:0.2px;overflow:hidden;color:#e61e0a;">1,418</div>
<svg style="left:159px;top:185px" width="10" height="9"><path d="M5 0l5 8.500H0z" fill="#e61e0a"/></svg>
<div style="left:156px;top:181px;width:64px;height:18px;font-family:'Liberation Mono','Noto Sans CJK KR',monospace;font-weight:bold;font-size:13px;line-height:22px;text-align:right;letter-spacing:0.2px;overflow:hidden;color:#e61e0a;">68</div>
<div style="left:222px;top:181px;width:58px;height:18px;font-family:'Liberation Mono','Noto Sans CJK KR',monospace;font-weight:bold;font-size:13px;line-height:22px;text-align:right;letter-spacing:0.2px;overflow:hidden;color:#e61e0a;">+5.04</div>
<div style="left:282px;top:181px;width:81px;height:18px;font-family:'Liberation Mono','Noto Sans CJK KR',monospace;font-weight:bold;font-size:13px;line-height:22px;text-align:right;letter-spacing:0.2px;overflow:hidden;color:#000;">552,758</div>
<div style="left:9px;top:199px;width:356px;height:18px;background:#ececec;"></div>
<div style="left:10px;top:199px;width:76px;height:18px;font-family:'Liberation Mono','Noto Sans CJK KR',monospace;font-weight:bold;font-size:13px;line-height:22px;letter-spacing:2.400px;color:#800a48;white-space:nowrap;overflow:hidden;">한성크린텍</div>
<div style="left:86px;top:199px;width:68px;height:18px;font-family:'Liberation Mono','Noto Sans CJK KR',monospace;font-weight:bold;font-size:13px;line-height:22px;text-align:right;letter-spacing:0.2px;overflow:hidden;color:#e61e0a;">3,180</div>
<svg style="left:159px;top:203px" width="10" height="9"><path d="M5 0l5 8.500H0z" fill="#e61e0a"/></svg>
<div style="left:156px;top:199px;width:64px;height:18px;font-family:'Liberation Mono','Noto Sans CJK KR',monospace;font-weight:bold;font-size:13px;line-height:22px;text-align:right;letter-spacing:0.2px;overflow:hidden;color:#e61e0a;">140</div>
<div style="left:222px;top:199px;width:58px;height:18px;font-family:'Liberation Mono','Noto Sans CJK KR',monospace;font-weight:bold;font-size:13px;line-height:22px;text-align:right;letter-spacing:0.2px;overflow:hidden;color:#e61e0a;">+4.61</div>
<div style="left:282px;top:199px;width:81px;height:18px;font-family:'Liberation Mono','Noto Sans CJK KR',monospace;font-weight:bold;font-size:13px;line-height:22px;text-align:right;letter-spacing:0.2px;overflow:hidden;color:#000;">816,568</div>
<div style="left:9px;top:217px;width:356px;height:18px;background:#fff;"></div>
<div style="left:10px;top:217px;width:76px;height:18px;font-family:'Liberation Mono','Noto Sans CJK KR',monospace;font-weight:bold;font-size:13px;line-height:22px;letter-spacing:2.400px;color:#800a48;white-space:nowrap;overflow:hidden;">솔고바이오</div>
<div style="left:86px;top:217px;width:68px;height:18px;font-family:'Liberation Mono','Noto Sans CJK KR',monospace;font-weight:bold;font-size:13px;line-height:22px;text-align:right;letter-spacing:0.2px;overflow:hidden;color:#e61e0a;">507</div>
<svg style="left:159px;top:221px" width="10" height="9"><path d="M5 0l5 8.500H0z" fill="#e61e0a"/></svg>
<div style="left:156px;top:217px;width:64px;height:18px;font-family:'Liberation Mono','Noto Sans CJK KR',monospace;font-weight:bold;font-size:13px;line-height:22px;text-align:right;letter-spacing:0.2px;overflow:hidden;color:#e61e0a;">20</div>
<div style="left:222px;top:217px;width:58px;height:18px;font-family:'Liberation Mono','Noto Sans CJK KR',monospace;font-weight:bold;font-size:13px;line-height:22px;text-align:right;letter-spacing:0.2px;overflow:hidden;color:#e61e0a;">+4.11</div>
<div style="left:282px;top:217px;width:81px;height:18px;font-family:'Liberation Mono','Noto Sans CJK KR',monospace;font-weight:bold;font-size:13px;line-height:22px;text-align:right;letter-spacing:0.2px;overflow:hidden;color:#000;">8,699,491</div>
<div style="left:9px;top:235px;width:356px;height:18px;background:#fff;"></div>
<div style="left:10px;top:235px;width:76px;height:18px;font-family:'Liberation Mono','Noto Sans CJK KR',monospace;font-weight:bold;font-size:13px;line-height:22px;letter-spacing:2.400px;color:#800a48;white-space:nowrap;overflow:hidden;">아이톡시</div>
<div style="left:86px;top:235px;width:68px;height:18px;font-family:'Liberation Mono','Noto Sans CJK KR',monospace;font-weight:bold;font-size:13px;line-height:22px;text-align:right;letter-spacing:0.2px;overflow:hidden;color:#e61e0a;">2,005</div>
<svg style="left:159px;top:239px" width="10" height="9"><path d="M5 0l5 8.500H0z" fill="#e61e0a"/></svg>
<div style="left:156px;top:235px;width:64px;height:18px;font-family:'Liberation Mono','Noto Sans CJK KR',monospace;font-weight:bold;font-size:13px;line-height:22px;text-align:right;letter-spacing:0.2px;overflow:hidden;color:#e61e0a;">37</div>
<div style="left:222px;top:235px;width:58px;height:18px;font-family:'Liberation Mono','Noto Sans CJK KR',monospace;font-weight:bold;font-size:13px;line-height:22px;text-align:right;letter-spacing:0.2px;overflow:hidden;color:#e61e0a;">+1.88</div>
<div style="left:282px;top:235px;width:81px;height:18px;font-family:'Liberation Mono','Noto Sans CJK KR',monospace;font-weight:bold;font-size:13px;line-height:22px;text-align:right;letter-spacing:0.2px;overflow:hidden;color:#000;">890,079</div>
<div style="left:9px;top:253px;width:356px;height:18px;background:#ececec;"></div>
<div style="left:10px;top:253px;width:76px;height:18px;font-family:'Liberation Mono','Noto Sans CJK KR',monospace;font-weight:bold;font-size:13px;line-height:22px;letter-spacing:2.400px;color:#800a48;white-space:nowrap;overflow:hidden;">인피니트헬</div>
<div style="left:86px;top:253px;width:68px;height:18px;font-family:'Liberation Mono','Noto Sans CJK KR',monospace;font-weight:bold;font-size:13px;line-height:22px;text-align:right;letter-spacing:0.2px;overflow:hidden;color:#e61e0a;">5,770</div>
<svg style="left:159px;top:257px" width="10" height="9"><path d="M5 0l5 8.500H0z" fill="#e61e0a"/></svg>
<div style="left:156px;top:253px;width:64px;height:18px;font-family:'Liberation Mono','Noto Sans CJK KR',monospace;font-weight:bold;font-size:13px;line-height:22px;text-align:right;letter-spacing:0.2px;overflow:hidden;color:#e61e0a;">70</div>
<div style="left:222px;top:253px;width:58px;height:18px;font-family:'Liberation Mono','Noto Sans CJK KR',monospace;font-weight:bold;font-size:13px;line-height:22px;text-align:right;letter-spacing:0.2px;overflow:hidden;color:#e61e0a;">+1.23</div>
<div style="left:282px;top:253px;width:81px;height:18px;font-family:'Liberation Mono','Noto Sans CJK KR',monospace;font-weight:bold;font-size:13px;line-height:22px;text-align:right;letter-spacing:0.2px;overflow:hidden;color:#000;">1,977,100</div>
<div style="left:9px;top:271px;width:356px;height:18px;background:#ececec;"></div>
<div style="left:10px;top:271px;width:76px;height:18px;font-family:'Liberation Mono','Noto Sans CJK KR',monospace;font-weight:bold;font-size:13px;line-height:22px;letter-spacing:2.400px;color:#000;white-space:nowrap;overflow:hidden;">현대지에프</div>
<div style="left:86px;top:271px;width:68px;height:18px;font-family:'Liberation Mono','Noto Sans CJK KR',monospace;font-weight:bold;font-size:13px;line-height:22px;text-align:right;letter-spacing:0.2px;overflow:hidden;color:#1545c8;">4,420</div>
<svg style="left:159px;top:275px" width="10" height="9"><path d="M0 0h10L5 8.500z" fill="#1545c8"/></svg>
<div style="left:156px;top:271px;width:64px;height:18px;font-family:'Liberation Mono','Noto Sans CJK KR',monospace;font-weight:bold;font-size:13px;line-height:22px;text-align:right;letter-spacing:0.2px;overflow:hidden;color:#1545c8;">100</div>
<div style="left:222px;top:271px;width:58px;height:18px;font-family:'Liberation Mono','Noto Sans CJK KR',monospace;font-weight:bold;font-size:13px;line-height:22px;text-align:right;letter-spacing:0.2px;overflow:hidden;color:#1545c8;">-2.21</div>
<div style="left:282px;top:271px;width:81px;height:18px;font-family:'Liberation Mono','Noto Sans CJK KR',monospace;font-weight:bold;font-size:13px;line-height:22px;text-align:right;letter-spacing:0.2px;overflow:hidden;color:#000;">822,228</div>
<div style="left:9px;top:289px;width:356px;height:18px;background:#fff;"></div>
<div style="left:10px;top:289px;width:76px;height:18px;font-family:'Liberation Mono','Noto Sans CJK KR',monospace;font-weight:bold;font-size:13px;line-height:22px;letter-spacing:2.400px;color:#800a48;white-space:nowrap;overflow:hidden;">와이팜</div>
<div style="left:86px;top:289px;width:68px;height:18px;font-family:'Liberation Mono','Noto Sans CJK KR',monospace;font-weight:bold;font-size:13px;line-height:22px;text-align:right;letter-spacing:0.2px;overflow:hidden;color:#1545c8;">3,545</div>
<svg style="left:159px;top:293px" width="10" height="9"><path d="M0 0h10L5 8.500z" fill="#1545c8"/></svg>
<div style="left:156px;top:289px;width:64px;height:18px;font-family:'Liberation Mono','Noto Sans CJK KR',monospace;font-weight:bold;font-size:13px;line-height:22px;text-align:right;letter-spacing:0.2px;overflow:hidden;color:#1545c8;">120</div>
<div style="left:222px;top:289px;width:58px;height:18px;font-family:'Liberation Mono','Noto Sans CJK KR',monospace;font-weight:bold;font-size:13px;line-height:22px;text-align:right;letter-spacing:0.2px;overflow:hidden;color:#1545c8;">-3.27</div>
<div style="left:282px;top:289px;width:81px;height:18px;font-family:'Liberation Mono','Noto Sans CJK KR',monospace;font-weight:bold;font-size:13px;line-height:22px;text-align:right;letter-spacing:0.2px;overflow:hidden;color:#000;">519,611</div>
<div style="left:86px;top:145px;width:1px;height:162px;background:#c4c8d0;"></div>
<div style="left:156px;top:145px;width:1px;height:162px;background:#c4c8d0;"></div>
<div style="left:222px;top:145px;width:1px;height:162px;background:#c4c8d0;"></div>
<div style="left:282px;top:145px;width:1px;height:162px;background:#c4c8d0;"></div>
<div style="left:365px;top:145px;width:1px;height:162px;background:#c4c8d0;"></div>
<div style="left:8px;top:307px;width:358px;height:1px;background:#c4c8d0;"></div>
</div>
<!-- s_winA -->
<div style="left:2068px;top:15px;width:391px;height:569px;background:#b6b6b6;border:1px solid #8a8a8a;overflow:hidden;">
<div style="left:3px;top:0px;width:385px;height:25px;background:#3a5692;"></div>
<div style="left:5px;top:5px;width:14px;height:16px;border:1.500px solid #e8ecf6;border-radius:3px;color:#fff;font-weight:bold;font-size:11px;line-height:13px;text-align:center;background:#4a68a8;">1</div>
<div class="t" style="left:24px;top:6px;color:#fff;font-size:12px;letter-spacing:0.1px;">[0156] 조건검색실시간 - 엔'</div>
<svg style="left:184px;top:5px" width="16" height="15"><rect x=".500" y="3.500" width="14" height="11" fill="none" stroke="#fff"/><path d="M3 13V9M6 13V7M9 13V9.500M12 13V6" stroke="#f08a0a" stroke-width="2"/><path d="M2 7l4-3 3 2 5-5" stroke="#fff" fill="none"/></svg>
<div class="t" style="left:201px;top:6px;color:#b4c2e0;font-size:12px;letter-spacing:-1px;">분석</div>
<div style="left:224px;top:5px;width:1px;height:15px;background:#8a9cc4;"></div>
<svg style="left:232px;top:6px" width="13" height="13"><rect x="4.500" y=".500" width="8" height="6" fill="none" stroke="#a9b8d8" stroke-width="1.300"/><rect x=".500" y="4.500" width="8" height="7" fill="#3a5692" stroke="#a9b8d8" stroke-width="1.300"/></svg>
<svg style="left:253px;top:6px" width="12" height="13"><path d="M0 1h12" stroke="#a9b8d8" stroke-width="1.600"/><path d="M6 4l4.500 4.500H7.500V13h-3V8.500H1.500z" fill="#a9b8d8"/></svg>
<svg style="left:272px;top:6px" width="14" height="13"><rect x="3.500" y=".500" width="10" height="8" fill="none" stroke="#a9b8d8" stroke-width="1.300"/><rect x=".500" y="4.500" width="8" height="7" fill="#3a5692" stroke="#a9b8d8" stroke-width="1.300"/></svg>
<svg style="left:292px;top:5px" width="12" height="15"><path d="M2 0h8v2H8.500v4.500L11 8.500V10H7v5H5v-5H1V8.500L3.500 6.500V2H2z" fill="#a9b8d8"/></svg>
<div class="t" style="left:312px;top:5px;color:#a9b8d8;font-size:13px;">?</div>
<div style="left:330px;top:5px;width:1px;height:15px;background:#8a9cc4;"></div>
<div style="left:336px;top:18px;width:12px;height:2px;background:#a9b8d8;"></div>
<svg style="left:356px;top:7px" width="12" height="12"><rect x=".700" y="1.500" width="10.600" height="9.800" fill="none" stroke="#a9b8d8" stroke-width="1.400"/><path d="M0 2h12" stroke="#a9b8d8" stroke-width="2.400"/></svg>
<svg style="left:375px;top:7px" width="11" height="11"><path d="M.5.5l10 10M10.500.5l-10 10" stroke="#a9b8d8" stroke-width="1.300"/></svg>
<div style="left:3px;top:25px;width:385px;height:55px;background:#d4d4d4;"></div>
<div class="btn" style="left:10px;top:32px;width:20px;height:20px;"><svg width="18" height="17" style="left:0;top:1px"><path d="M3 9a5 5 0 019-3" stroke="#555" stroke-width="1.600" fill="none"/><path d="M1 8l2.500 3L6 8z" fill="#555"/><rect x="7.500" y="9.500" width="8" height="6" fill="#eee" stroke="#555"/><path d="M9 9.500v2h4v-2M9.500 15.500v-2h4v2" stroke="#555" fill="none"/></svg></div>
<div class="btn" style="left:33px;top:32px;width:19px;height:20px;font-weight:bold;font-size:10px;letter-spacing:1px;color:#444;">II</div>
<div class="inp" style="left:54px;top:32px;width:176px;height:20px;padding-left:3px;line-height:18px;font-size:12.500px;letter-spacing:0.5px;">[009]엔벨로프 검색기</div>
<div class="btn" style="left:229px;top:32px;width:15px;height:20px;"><svg width="9" height="5" style="left:2px;top:7px"><path d="M0 0h8l-4 4.500z" fill="#555"/></svg></div>
<div class="btn" style="left:247px;top:32px;width:19px;height:20px;"><svg width="15" height="15" style="left:1px;top:2px"><path d="M12.500 6A5.500 5.500 0 002.500 5M2.500 9a5.500 5.500 0 0010 1" stroke="#555" stroke-width="1.700" fill="none"/><path d="M14 2v4.500H9.500zM1 13V8.500h4.500z" fill="#555"/></svg></div>
<div class="btn" style="left:269px;top:32px;width:19px;height:20px;"><svg width="15" height="15" style="left:1px;top:2px"><path d="M1 1v13h13" stroke="#666" fill="none"/><path d="M2 10l3-4 3 2 5-5" stroke="#e02020" stroke-width="1.800" fill="none"/><path d="M2 7l3 3 3-2 5 1" stroke="#3a60c0" stroke-width="1" fill="none"/></svg></div>
<div class="btn" style="left:290px;top:32px;width:56px;height:20px;color:#9a9a9a;line-height:18px;letter-spacing:0.3px;">이탈삭제</div>
<div class="btn" style="left:349px;top:32px;width:19px;height:20px;font-weight:bold;font-size:10px;letter-spacing:1px;color:#444;">II</div>
<div class="btn" style="left:370px;top:32px;width:30px;height:20px;line-height:18px;text-align:left;padding-left:5px;">등록</div>
<div class="btn" style="left:10px;top:56px;width:20px;height:20px;"><svg width="14" height="14" style="left:2px;top:2px"><circle cx="7" cy="7" r="3.300" fill="none" stroke="#555" stroke-width="2.300"/><path d="M7 .3v2.400M7 11.300v2.400M.3 7h2.400M11.300 7h2.400M2.200 2.200l1.800 1.800M10 10l1.800 1.800M2.200 11.800L4 10M10 4l1.800-1.800" stroke="#555" stroke-width="2"/></svg></div>
<div class="btn" style="left:33px;top:56px;width:19px;height:20px;"><svg width="13" height="13" style="left:2px;top:3px"><path d="M1 1l11 11M12 1L1 12" stroke="#555" stroke-width="1.100"/></svg></div>
<div class="t" style="left:60px;top:59px;color:#444;letter-spacing:0.4px;">종목수:19</div>
<div style="left:122px;top:61px;width:11px;height:11px;"><svg width="11" height="11"><rect x=".500" y=".500" width="10" height="10" fill="#fff" stroke="#333"/><path d="M2.500 5.500l2 2.300 4-5" stroke="#000" stroke-width="1.600" fill="none"/></svg></div>
<div class="t" style="left:136px;top:59px;color:#222;letter-spacing:-0.2px;">자동삭제</div>
<div style="left:186px;top:61px;width:11px;height:11px;"><svg width="11" height="11"><rect x=".500" y=".500" width="10" height="10" fill="#fff" stroke="#333"/><path d="M2.500 5.500l2 2.300 4-5" stroke="#000" stroke-width="1.600" fill="none"/></svg></div>
<div class="t" style="left:200px;top:59px;color:#222;letter-spacing:-0.2px;">종목연동</div>
<div style="left:249px;top:61px;width:11px;height:11px;"><svg width="11" height="11"><rect x=".500" y=".500" width="10" height="10" fill="#fff" stroke="#333"/><path d="M2.500 5.500l2 2.300 4-5" stroke="#000" stroke-width="1.600" fill="none"/></svg></div>
<div class="t" style="left:263px;top:59px;color:#222;letter-spacing:-0.2px;">소리</div>
<div class="btn" style="left:289px;top:56px;width:29px;height:20px;line-height:18px;">뉴스</div>
<div class="btn" style="left:320px;top:56px;width:29px;height:20px;line-height:18px;">관심</div>
<div class="btn" style="left:351px;top:56px;width:19px;height:20px;"><svg width="9" height="14" style="left:4px;top:2px"><path d="M4.500 0l4 4.500h-3v5h3l-4 4.500-4-4.500h3v-5h-3z" fill="#444"/></svg></div>
<div class="btn" style="left:372px;top:56px;width:19px;height:20px;"><svg width="16" height="14" style="left:2px;top:2px"><rect x=".500" y="1.500" width="10" height="11" fill="#fff" stroke="#444"/><path d="M.5 5h10M5.500 1.500v11" stroke="#444"/><path d="M12 3.500l4 3.500-4 3.500z" fill="#444"/></svg></div>
<div style="left:3px;top:80px;width:385px;height:489px;background:#ebebeb;border-top:1px solid #f8f8f8;"></div>
<div class="t" style="left:11px;top:87px;color:#333;">조건</div>
<div class="t" style="left:11px;top:107px;color:#333;">대상</div>
<div class="inp" style="left:41px;top:84px;width:282px;height:19px;padding-left:3px;line-height:17px;color:#444;letter-spacing:0.25px;border-color:#c4c4c4;">[일]0봉전 Envelope(20,15) 종가가 Envelope 상한선 상향돌파</div>
<div class="inp" style="left:41px;top:104px;width:282px;height:19px;padding-left:3px;line-height:17px;color:#444;letter-spacing:0.25px;border-color:#c4c4c4;">&lt;업종대상(전체)&gt;&lt;관리+거래정지+환기종목+정리매매</div>
<div style="left:324px;top:84px;width:57px;height:19px;background:#cfe4fa;border:1px solid #2a5ad0;text-align:center;line-height:17px;color:#111;letter-spacing:0.3px;">비교분석</div>
<div style="left:324px;top:104px;width:57px;height:19px;background:#fbd8d4;border:1px solid #e03020;text-align:center;line-height:17px;color:#111;letter-spacing:0.3px;">지표분석</div>
<div style="left:8px;top:126px;width:358px;height:438px;background:#fbfcfe;border:1px solid #b4b4b4;"></div>
<div style="left:366px;top:126px;width:18px;height:438px;background:#c8c8c8;border-left:1px solid #e0e0e0;"></div>
<div style="left:366px;top:126px;width:18px;height:19px;background:#f0f0f0;border:1px solid #d8d8d8;"><svg width="10" height="7" style="left:3px;top:5px"><path d="M1 6l4-4 4 4" stroke="#444" stroke-width="1.600" fill="none"/></svg></div>
<div style="left:8px;top:126px;width:357px;height:19px;background:#dce6f3;border:1px solid #b8c4d4;"></div>
<div style="left:8px;top:127px;width:78px;height:17px;font-family:'Liberation Mono','Noto Sans CJK KR',monospace;font-weight:bold;font-size:13px;text-align:center;line-height:17px;letter-spacing:1.500px;color:#111;">종목명</div>
<div style="left:86px;top:127px;width:70px;height:17px;font-family:'Liberation Mono','Noto Sans CJK KR',monospace;font-weight:bold;font-size:13px;text-align:center;line-height:17px;letter-spacing:1.500px;color:#111;border-left:1px solid #b8c4d4;">현재가</div>
<div style="left:156px;top:127px;width:66px;height:17px;font-family:'Liberation Mono','Noto Sans CJK KR',monospace;font-weight:bold;font-size:13px;text-align:center;line-height:17px;letter-spacing:1.500px;color:#111;border-left:1px solid #b8c4d4;">대비</div>
<div style="left:222px;top:127px;width:60px;height:17px;font-family:'Liberation Mono','Noto Sans CJK KR',monospace;font-weight:bold;font-size:13px;text-align:center;line-height:17px;letter-spacing:1.500px;color:#111;border-left:1px solid #b8c4d4;">등락률</div>
<div style="left:282px;top:127px;width:83px;height:17px;font-family:'Liberation Mono','Noto Sans CJK KR',monospace;font-weight:bold;font-size:13px;text-align:center;line-height:17px;letter-spacing:1.500px;color:#111;border-left:1px solid #b8c4d4;">거래량</div>
<svg style="left:270px;top:131px" width="11" height="10"><path d="M.5.5h10L5.500 9.500z" fill="none" stroke="#777"/></svg>
<div style="left:9px;top:145px;width:356px;height:18px;background:#fff;"></div>
<div style="left:172px;top:145px;width:50px;height:18px;background:#ff0000;"></div>
<div style="left:223px;top:145px;width:59px;height:18px;background:#ff0000;"></div>
<div style="left:10px;top:145px;width:76px;height:18px;font-family:'Liberation Mono','Noto Sans CJK KR',monospace;font-weight:bold;font-size:13px;line-height:22px;letter-spacing:0.200px;color:#800a48;white-space:nowrap;overflow:hidden;">EDGC</div>
<div style="left:86px;top:145px;width:68px;height:18px;font-family:'Liberation Mono','Noto Sans CJK KR',monospace;font-weight:bold;font-size:13px;line-height:22px;text-align:right;letter-spacing:0.2px;overflow:hidden;color:#e61e0a;">536</div>
<svg style="left:158px;top:148px" width="11" height="11"><path d="M5.500 0L11 5.500H7.500V11h-4V5.500H0z" fill="#e61e0a"/></svg>
<div style="left:156px;top:145px;width:64px;height:18px;font-family:'Liberation Mono','Noto Sans CJK KR',monospace;font-weight:bold;font-size:13px;line-height:22px;text-align:right;letter-spacing:0.2px;overflow:hidden;color:#fff;">123</div>
<div style="left:222px;top:145px;width:58px;height:18px;font-family:'Liberation Mono','Noto Sans CJK KR',monospace;font-weight:bold;font-size:13px;line-height:22px;text-align:right;letter-spacing:0.2px;overflow:hidden;color:#fff;">+29.78</div>
<div style="left:282px;top:145px;width:81px;height:18px;font-family:'Liberation Mono','Noto Sans CJK KR',monospace;font-weight:bold;font-size:13px;line-height:22px;text-align:right;letter-spacing:0.2px;overflow:hidden;color:#000;">9,938,590</div>
<div style="left:9px;top:163px;width:356px;height:18px;background:#fff;"></div>
<div style="left:10px;top:163px;width:76px;height:18px;font-family:'Liberation Mono','Noto Sans CJK KR',monospace;font-weight:bold;font-size:13px;line-height:22px;letter-spacing:2.400px;color:#800a48;white-space:nowrap;overflow:hidden;">펩트론</div>
<div style="left:86px;top:163px;width:68px;height:18px;font-family:'Liberation Mono','Noto Sans CJK KR',monospace;font-weight:bold;font-size:13px;line-height:22px;text-align:right;letter-spacing:0.2px;overflow:hidden;color:#e61e0a;">29,350</div>
<svg style="left:159px;top:167px" width="10" height="9"><path d="M5 0l5 8.500H0z" fill="#e61e0a"/></svg>
<div style="left:156px;top:163px;width:64px;height:18px;font-family:'Liberation Mono','Noto Sans CJK KR',monospace;font-weight:bold;font-size:13px;line-height:22px;text-align:right;letter-spacing:0.2px;overflow:hidden;color:#e61e0a;">4,050</div>
<div style="left:222px;top:163px;width:58px;height:18px;font-family:'Liberation Mono','Noto Sans CJK KR',monospace;font-weight:bold;font-size:13px;line-height:22px;text-align:right;letter-spacing:0.2px;overflow:hidden;color:#e61e0a;">+16.01</div>
<div style="left:282px;top:163px;width:81px;height:18px;font-family:'Liberation Mono','Noto Sans CJK KR',monospace;font-weight:bold;font-size:13px;line-height:22px;text-align:right;letter-spacing:0.2px;overflow:hidden;color:#000;">3,700,204</div>
<div style="left:9px;top:181px;width:356px;height:18px;background:#ececec;"></div>
<div style="left:10px;top:181px;width:76px;height:18px;font-family:'Liberation Mono','Noto Sans CJK KR',monospace;font-weight:bold;font-size:13px;line-height:22px;letter-spacing:2.400px;color:#800a48;white-space:nowrap;overflow:hidden;">라이프시맨</div>
<div style="left:86px;top:181px;width:68px;height:18px;font-family:'Liberation Mono','Noto Sans CJK KR',monospace;font-weight:bold;font-size:13px;line-height:22px;text-align:right;letter-spacing:0.2px;overflow:hidden;color:#e61e0a;">2,600</div>
<svg style="left:159px;top:185px" width="10" height="9"><path d="M5 0l5 8.500H0z" fill="#e61e0a"/></svg>
<div style="left:156px;top:181px;width:64px;height:18px;font-family:'Liberation Mono','Noto Sans CJK KR',monospace;font-weight:bold;font-size:13px;line-height:22px;text-align:right;letter-spacing:0.2px;overflow:hidden;color:#e61e0a;">355</div>
<div style="left:222px;top:181px;width:58px;height:18px;font-family:'Liberation Mono','Noto Sans CJK KR',monospace;font-weight:bold;font-size:13px;line-height:22px;text-align:right;letter-spacing:0.2px;overflow:hidden;color:#e61e0a;">+15.81</div>
<div style="left:282px;top:181px;width:81px;height:18px;font-family:'Liberation Mono','Noto Sans CJK KR',monospace;font-weight:bold;font-size:13px;line-height:22px;text-align:right;letter-spacing:0.2px;overflow:hidden;color:#000;">8,500,095</div>
<div style="left:9px;top:199px;width:356px;height:18px;background:#ececec;"></div>
<div style="left:10px;top:199px;width:76px;height:18px;font-family:'Liberation Mono','Noto Sans CJK KR',monospace;font-weight:bold;font-size:13px;line-height:22px;letter-spacing:2.400px;color:#800a48;white-space:nowrap;overflow:hidden;">유비케어</div>
<div style="left:86px;top:199px;width:68px;height:18px;font-family:'Liberation Mono','Noto Sans CJK KR',monospace;font-weight:bold;font-size:13px;line-height:22px;text-align:right;letter-spacing:0.2px;overflow:hidden;color:#e61e0a;">7,170</div>
<svg style="left:159px;top:203px" width="10" height="9"><path d="M5 0l5 8.500H0z" fill="#e61e0a"/></svg>
<div style="left:156px;top:199px;width:64px;height:18px;font-family:'Liberation Mono','Noto Sans CJK KR',monospace;font-weight:bold;font-size:13px;line-height:22px;text-align:right;letter-spacing:0.2px;overflow:hidden;color:#e61e0a;">950</div>
<div style="left:222px;top:199px;width:58px;height:18px;font-family:'Liberation Mono','Noto Sans CJK KR',monospace;font-weight:bold;font-size:13px;line-height:22px;text-align:right;letter-spacing:0.2px;overflow:hidden;color:#e61e0a;">+15.27</div>
<div style="left:282px;top:199px;width:81px;height:18px;font-family:'Liberation Mono','Noto Sans CJK KR',monospace;font-weight:bold;font-size:13px;line-height:22px;text-align:right;letter-spacing:0.2px;overflow:hidden;color:#000;">7,135,362</div>
<div style="left:9px;top:217px;width:356px;height:18px;background:#c9e6f3;"></div>
<div style="left:10px;top:217px;width:76px;height:18px;font-family:'Liberation Mono','Noto Sans CJK KR',monospace;font-weight:bold;font-size:13px;line-height:22px;letter-spacing:2.400px;color:#800a48;white-space:nowrap;overflow:hidden;">아이즈비전</div>
<div style="left:86px;top:217px;width:68px;height:18px;font-family:'Liberation Mono','Noto Sans CJK KR',monospace;font-weight:bold;font-size:13px;line-height:22px;text-align:right;letter-spacing:0.2px;overflow:hidden;color:#e61e0a;">3,645</div>
<svg style="left:159px;top:221px" width="10" height="9"><path d="M5 0l5 8.500H0z" fill="#e61e0a"/></svg>
<div style="left:156px;top:217px;width:64px;height:18px;font-family:'Liberation Mono','Noto Sans CJK KR',monospace;font-weight:bold;font-size:13px;line-height:22px;text-align:right;letter-spacing:0.2px;overflow:hidden;color:#e61e0a;">425</div>
<div style="left:222px;top:217px;width:58px;height:18px;font-family:'Liberation Mono','Noto Sans CJK KR',monospace;font-weight:bold;font-size:13px;line-height:22px;text-align:right;letter-spacing:0.2px;overflow:hidden;color:#e61e0a;">+13.20</div>
<div style="left:282px;top:217px;width:81px;height:18px;font-family:'Liberation Mono','Noto Sans CJK KR',monospace;font-weight:bold;font-size:13px;line-height:22px;text-align:right;letter-spacing:0.2px;overflow:hidden;color:#000;">4,769,378</div>
<div style="left:9px;top:235px;width:356px;height:18px;background:#fff;"></div>
<div style="left:10px;top:235px;width:76px;height:18px;font-family:'Liberation Mono','Noto Sans CJK KR',monospace;font-weight:bold;font-size:13px;line-height:22px;letter-spacing:2.400px;color:#800a48;white-space:nowrap;overflow:hidden;">케일럼</div>
<div style="left:86px;top:235px;width:68px;height:18px;font-family:'Liberation Mono','Noto Sans CJK KR',monospace;font-weight:bold;font-size:13px;line-height:22px;text-align:right;letter-spacing:0.2px;overflow:hidden;color:#e61e0a;">4,000</div>
<svg style="left:159px;top:239px" width="10" height="9"><path d="M5 0l5 8.500H0z" fill="#e61e0a"/></svg>
<div style="left:156px;top:235px;width:64px;height:18px;font-family:'Liberation Mono','Noto Sans CJK KR',monospace;font-weight:bold;font-size:13px;line-height:22px;text-align:right;letter-spacing:0.2px;overflow:hidden;color:#e61e0a;">405</div>
<div style="left:222px;top:235px;width:58px;height:18px;font-family:'Liberation Mono','Noto Sans CJK KR',monospace;font-weight:bold;font-size:13px;line-height:22px;text-align:right;letter-spacing:0.2px;overflow:hidden;color:#e61e0a;">+11.27</div>
<div style="left:282px;top:235px;width:81px;height:18px;font-family:'Liberation Mono','Noto Sans CJK KR',monospace;font-weight:bold;font-size:13px;line-height:22px;text-align:right;letter-spacing:0.2px;overflow:hidden;color:#000;">873,021</div>
<div style="left:9px;top:253px;width:356px;height:18px;background:#ececec;"></div>
<div style="left:10px;top:253px;width:76px;height:18px;font-family:'Liberation Mono','Noto Sans CJK KR',monospace;font-weight:bold;font-size:13px;line-height:22px;letter-spacing:2.400px;color:#800a48;white-space:nowrap;overflow:hidden;">셀바이오휴</div>
<div style="left:86px;top:253px;width:68px;height:18px;font-family:'Liberation Mono','Noto Sans CJK KR',monospace;font-weight:bold;font-size:13px;line-height:22px;text-align:right;letter-spacing:0.2px;overflow:hidden;color:#e61e0a;">3,990</div>
<svg style="left:159px;top:257px" width="10" height="9"><path d="M5 0l5 8.500H0z" fill="#e61e0a"/></svg>
<div style="left:156px;top:253px;width:64px;height:18px;font-family:'Liberation Mono','Noto Sans CJK KR',monospace;font-weight:bold;font-size:13px;line-height:22px;text-align:right;letter-spacing:0.2px;overflow:hidden;color:#e61e0a;">365</div>
<div style="left:222px;top:253px;width:58px;height:18px;font-family:'Liberation Mono','Noto Sans CJK KR',monospace;font-weight:bold;font-size:13px;line-height:22px;text-align:right;letter-spacing:0.2px;overflow:hidden;color:#e61e0a;">+10.07</div>
<div style="left:282px;top:253px;width:81px;height:18px;font-family:'Liberation Mono','Noto Sans CJK KR',monospace;font-weight:bold;font-size:13px;line-height:22px;text-align:right;letter-spacing:0.2px;overflow:hidden;color:#000;">6,059,876</div>
<div style="left:9px;top:271px;width:356px;height:18px;background:#ececec;"></div>
<div style="left:10px;top:271px;width:76px;height:18px;font-family:'Liberation Mono','Noto Sans CJK KR',monospace;font-weight:bold;font-size:13px;line-height:22px;letter-spacing:2.400px;color:#800a48;white-space:nowrap;overflow:hidden;">뉴프렉스</div>
<div style="left:86px;top:271px;width:68px;height:18px;font-family:'Liberation Mono','Noto Sans CJK KR',monospace;font-weight:bold;font-size:13px;line-height:22px;text-align:right;letter-spacing:0.2px;overflow:hidden;color:#e61e0a;">9,590</div>
<svg style="left:159px;top:275px" width="10" height="9"><path d="M5 0l5 8.500H0z" fill="#e61e0a"/></svg>
<div style="left:156px;top:271px;width:64px;height:18px;font-family:'Liberation Mono','Noto Sans CJK KR',monospace;font-weight:bold;font-size:13px;line-height:22px;text-align:right;letter-spacing:0.2px;overflow:hidden;color:#e61e0a;">840</div>
<div style="left:222px;top:271px;width:58px;height:18px;font-family:'Liberation Mono','Noto Sans CJK KR',monospace;font-weight:bold;font-size:13px;line-height:22px;text-align:right;letter-spacing:0.2px;overflow:hidden;color:#e61e0a;">+9.60</div>
<div style="left:282px;top:271px;width:81px;height:18px;font-family:'Liberation Mono','Noto Sans CJK KR',monospace;font-weight:bold;font-size:13px;line-height:22px;text-align:right;letter-spacing:0.2px;overflow:hidden;color:#000;">5,058,815</div>
<div style="left:9px;top:289px;width:356px;height:18px;background:#fff;"></div>
<div style="left:10px;top:289px;width:76px;height:18px;font-family:'Liberation Mono','Noto Sans CJK KR',monospace;font-weight:bold;font-size:13px;line-height:22px;letter-spacing:2.400px;color:#000;white-space:nowrap;overflow:hidden;">메리츠금융</div>
<div style="left:86px;top:289px;width:68px;height:18px;font-family:'Liberation Mono','Noto Sans CJK KR',monospace;font-weight:bold;font-size:13px;line-height:22px;text-align:right;letter-spacing:0.2px;overflow:hidden;color:#e61e0a;">82,600</div>
<svg style="left:159px;top:293px" width="10" height="9"><path d="M5 0l5 8.500H0z" fill="#e61e0a"/></svg>
<div style="left:156px;top:289px;width:64px;height:18px;font-family:'Liberation Mono','Noto Sans CJK KR',monospace;font-weight:bold;font-size:13px;line-height:22px;text-align:right;letter-spacing:0.2px;overflow:hidden;color:#e61e0a;">7,000</div>
<div style="left:222px;top:289px;width:58px;height:18px;font-family:'Liberation Mono','Noto Sans CJK KR',monospace;font-weight:bold;font-size:13px;line-height:22px;text-align:right;letter-spacing:0.2px;overflow:hidden;color:#e61e0a;">+9.26</div>
<div style="left:282px;top:289px;width:81px;height:18px;font-family:'Liberation Mono','Noto Sans CJK KR',monospace;font-weight:bold;font-size:13px;line-height:22px;text-align:right;letter-spacing:0.2px;overflow:hidden;color:#000;">1,890,891</div>
<div style="left:9px;top:307px;width:356px;height:18px;background:#fff;"></div>
<div style="left:10px;top:307px;width:76px;height:18px;font-family:'Liberation Mono','Noto Sans CJK KR',monospace;font-weight:bold;font-size:13px;line-height:22px;letter-spacing:2.400px;color:#800a48;white-space:nowrap;overflow:hidden;">하이소닉</div>
<div style="left:86px;top:307px;width:68px;height:18px;font-family:'Liberation Mono','Noto Sans CJK KR',monospace;font-weight:bold;font-size:13px;line-height:22px;text-align:right;letter-spacing:0.2px;overflow:hidden;color:#e61e0a;">5,740</div>
<svg style="left:159px;top:311px" width="10" height="9"><path d="M5 0l5 8.500H0z" fill="#e61e0a"/></svg>
<div style="left:156px;top:307px;width:64px;height:18px;font-family:'Liberation Mono','Noto Sans CJK KR',monospace;font-weight:bold;font-size:13px;line-height:22px;text-align:right;letter-spacing:0.2px;overflow:hidden;color:#e61e0a;">470</div>
<div style="left:222px;top:307px;width:58px;height:18px;font-family:'Liberation Mono','Noto Sans CJK KR',monospace;font-weight:bold;font-size:13px;line-height:22px;text-align:right;letter-spacing:0.2px;overflow:hidden;color:#e61e0a;">+8.92</div>
<div style="left:282px;top:307px;width:81px;height:18px;font-family:'Liberation Mono','Noto Sans CJK KR',monospace;font-weight:bold;font-size:13px;line-height:22px;text-align:right;letter-spacing:0.2px;overflow:hidden;color:#000;">123,311</div>
<div style="left:9px;top:325px;width:356px;height:18px;background:#ececec;"></div>
<div style="left:10px;top:325px;width:76px;height:18px;font-family:'Liberation Mono','Noto Sans CJK KR',monospace;font-weight:bold;font-size:13px;line-height:22px;letter-spacing:2.400px;color:#000;white-space:nowrap;overflow:hidden;">덴티움</div>
<div style="left:86px;top:325px;width:68px;height:18px;font-family:'Liberation Mono','Noto Sans CJK KR',monospace;font-weight:bold;font-size:13px;line-height:22px;text-align:right;letter-spacing:0.2px;overflow:hidden;color:#e61e0a;">120,500</div>
<svg style="left:159px;top:329px" width="10" height="9"><path d="M5 0l5 8.500H0z" fill="#e61e0a"/></svg>
<div style="left:156px;top:325px;width:64px;height:18px;font-family:'Liberation Mono','Noto Sans CJK KR',monospace;font-weight:bold;font-size:13px;line-height:22px;text-align:right;letter-spacing:0.2px;overflow:hidden;color:#e61e0a;">9,100</div>
<div style="left:222px;top:325px;width:58px;height:18px;font-family:'Liberation Mono','Noto Sans CJK KR',monospace;font-weight:bold;font-size:13px;line-height:22px;text-align:right;letter-spacing:0.2px;overflow:hidden;color:#e61e0a;">+8.17</div>
<div style="left:282px;top:325px;width:81px;height:18px;font-family:'Liberation Mono','Noto Sans CJK KR',monospace;font-weight:bold;font-size:13px;line-height:22px;text-align:right;letter-spacing:0.2px;overflow:hidden;color:#000;">220,048</div>
<div style="left:9px;top:343px;width:356px;height:18px;background:#ececec;"></div>
<div style="left:10px;top:343px;width:76px;height:18px;font-family:'Liberation Mono','Noto Sans CJK KR',monospace;font-weight:bold;font-size:13px;line-height:22px;letter-spacing:2.400px;color:#800a48;white-space:nowrap;overflow:hidden;">코스나인</div>
<div style="left:86px;top:343px;width:68px;height:18px;font-family:'Liberation Mono','Noto Sans CJK KR',monospace;font-weight:bold;font-size:13px;line-height:22px;text-align:right;letter-spacing:0.2px;overflow:hidden;color:#e61e0a;">340</div>
<svg style="left:159px;top:347px" width="10" height="9"><path d="M5 0l5 8.500H0z" fill="#e61e0a"/></svg>
<div style="left:156px;top:343px;width:64px;height:18px;font-family:'Liberation Mono','Noto Sans CJK KR',monospace;font-weight:bold;font-size:13px;line-height:22px;text-align:right;letter-spacing:0.2px;overflow:hidden;color:#e61e0a;">25</div>
<div style="left:222px;top:343px;width:58px;height:18px;font-family:'Liberation Mono','Noto Sans CJK KR',monospace;font-weight:bold;font-size:13px;line-height:22px;text-align:right;letter-spacing:0.2px;overflow:hidden;color:#e61e0a;">+7.94</div>
<div style="left:282px;top:343px;width:81px;height:18px;font-family:'Liberation Mono','Noto Sans CJK KR',monospace;font-weight:bold;font-size:13px;line-height:22px;text-align:right;letter-spacing:0.2px;overflow:hidden;color:#000;">6,731,059</div>
<div style="left:9px;top:361px;width:356px;height:18px;background:#fff;"></div>
<div style="left:10px;top:361px;width:76px;height:18px;font-family:'Liberation Mono','Noto Sans CJK KR',monospace;font-weight:bold;font-size:13px;line-height:22px;letter-spacing:2.400px;color:#000;white-space:nowrap;overflow:hidden;">세아베스틸</div>
<div style="left:86px;top:361px;width:68px;height:18px;font-family:'Liberation Mono','Noto Sans CJK KR',monospace;font-weight:bold;font-size:13px;line-height:22px;text-align:right;letter-spacing:0.2px;overflow:hidden;color:#e61e0a;">26,300</div>
<svg style="left:159px;top:365px" width="10" height="9"><path d="M5 0l5 8.500H0z" fill="#e61e0a"/></svg>
<div style="left:156px;top:361px;width:64px;height:18px;font-family:'Liberation Mono','Noto Sans CJK KR',monospace;font-weight:bold;font-size:13px;line-height:22px;text-align:right;letter-spacing:0.2px;overflow:hidden;color:#e61e0a;">1,850</div>
<div style="left:222px;top:361px;width:58px;height:18px;font-family:'Liberation Mono','Noto Sans CJK KR',monospace;font-weight:bold;font-size:13px;line-height:22px;text-align:right;letter-spacing:0.2px;overflow:hidden;color:#e61e0a;">+7.57</div>
<div style="left:282px;top:361px;width:81px;height:18px;font-family:'Liberation Mono','Noto Sans CJK KR',monospace;font-weight:bold;font-size:13px;line-height:22px;text-align:right;letter-spacing:0.2px;overflow:hidden;color:#000;">576,030</div>
<div style="left:9px;top:379px;width:356px;height:18px;background:#fff;"></div>
<div style="left:10px;top:379px;width:76px;height:18px;font-family:'Liberation Mono','Noto Sans CJK KR',monospace;font-weight:bold;font-size:13px;line-height:22px;letter-spacing:2.400px;color:#800a48;white-space:nowrap;overflow:hidden;">손오공</div>
<div style="left:86px;top:379px;width:68px;height:18px;font-family:'Liberation Mono','Noto Sans CJK KR',monospace;font-weight:bold;font-size:13px;line-height:22px;text-align:right;letter-spacing:0.2px;overflow:hidden;color:#e61e0a;">2,850</div>
<svg style="left:159px;top:383px" width="10" height="9"><path d="M5 0l5 8.500H0z" fill="#e61e0a"/></svg>
<div style="left:156px;top:379px;width:64px;height:18px;font-family:'Liberation Mono','Noto Sans CJK KR',monospace;font-weight:bold;font-size:13px;line-height:22px;text-align:right;letter-spacing:0.2px;overflow:hidden;color:#e61e0a;">200</div>
<div style="left:222px;top:379px;width:58px;height:18px;font-family:'Liberation Mono','Noto Sans CJK KR',monospace;font-weight:bold;font-size:13px;line-height:22px;text-align:right;letter-spacing:0.2px;overflow:hidden;color:#e61e0a;">+7.55</div>
<div style="left:282px;top:379px;width:81px;height:18px;font-family:'Liberation Mono','Noto Sans CJK KR',monospace;font-weight:bold;font-size:13px;line-height:22px;text-align:right;letter-spacing:0.2px;overflow:hidden;color:#000;">397,922</div>
<div style="left:9px;top:397px;width:356px;height:18px;background:#ececec;"></div>
<div style="left:10px;top:397px;width:76px;height:18px;font-family:'Liberation Mono','Noto Sans CJK KR',monospace;font-weight:bold;font-size:13px;line-height:22px;letter-spacing:2.400px;color:#800a48;white-space:nowrap;overflow:hidden;">에스티팜</div>
<div style="left:86px;top:397px;width:68px;height:18px;font-family:'Liberation Mono','Noto Sans CJK KR',monospace;font-weight:bold;font-size:13px;line-height:22px;text-align:right;letter-spacing:0.2px;overflow:hidden;color:#e61e0a;">66,300</div>
<svg style="left:159px;top:401px" width="10" height="9"><path d="M5 0l5 8.500H0z" fill="#e61e0a"/></svg>
<div style="left:156px;top:397px;width:64px;height:18px;font-family:'Liberation Mono','Noto Sans CJK KR',monospace;font-weight:bold;font-size:13px;line-height:22px;text-align:right;letter-spacing:0.2px;overflow:hidden;color:#e61e0a;">4,600</div>
<div style="left:222px;top:397px;width:58px;height:18px;font-family:'Liberation Mono','Noto Sans CJK KR',monospace;font-weight:bold;font-size:13px;line-height:22px;text-align:right;letter-spacing:0.2px;overflow:hidden;color:#e61e0a;">+7.46</div>
<div style="left:282px;top:397px;width:81px;height:18px;font-family:'Liberation Mono','Noto Sans CJK KR',monospace;font-weight:bold;font-size:13px;line-height:22px;text-align:right;letter-spacing:0.2px;overflow:hidden;color:#000;">293,427</div>
<div style="left:9px;top:415px;width:356px;height:18px;background:#ececec;"></div>
<div style="left:10px;top:415px;width:76px;height:18px;font-family:'Liberation Mono','Noto Sans CJK KR',monospace;font-weight:bold;font-size:13px;line-height:22px;letter-spacing:2.400px;color:#800a48;white-space:nowrap;overflow:hidden;">에이텍</div>
<div style="left:86px;top:415px;width:68px;height:18px;font-family:'Liberation Mono','Noto Sans CJK KR',monospace;font-weight:bold;font-size:13px;line-height:22px;text-align:right;letter-spacing:0.2px;overflow:hidden;color:#e61e0a;">14,710</div>
<svg style="left:159px;top:419px" width="10" height="9"><path d="M5 0l5 8.500H0z" fill="#e61e0a"/></svg>
<div style="left:156px;top:415px;width:64px;height:18px;font-family:'Liberation Mono','Noto Sans CJK KR',monospace;font-weight:bold;font-size:13px;line-height:22px;text-align:right;letter-spacing:0.2px;overflow:hidden;color:#e61e0a;">990</div>
<div style="left:222px;top:415px;width:58px;height:18px;font-family:'Liberation Mono','Noto Sans CJK KR',monospace;font-weight:bold;font-size:13px;line-height:22px;text-align:right;letter-spacing:0.2px;overflow:hidden;color:#e61e0a;">+7.22</div>
<div style="left:282px;top:415px;width:81px;height:18px;font-family:'Liberation Mono','Noto Sans CJK KR',monospace;font-weight:bold;font-size:13px;line-height:22px;text-align:right;letter-spacing:0.2px;overflow:hidden;color:#000;">192,934</div>
<div style="left:9px;top:433px;width:356px;height:18px;background:#fff;"></div>
<div style="left:10px;top:433px;width:76px;height:18px;font-family:'Liberation Mono','Noto Sans CJK KR',monospace;font-weight:bold;font-size:13px;line-height:22px;letter-spacing:2.400px;color:#000;white-space:nowrap;overflow:hidden;">한화손해보</div>
<div style="left:86px;top:433px;width:68px;height:18px;font-family:'Liberation Mono','Noto Sans CJK KR',monospace;font-weight:bold;font-size:13px;line-height:22px;text-align:right;letter-spacing:0.2px;overflow:hidden;color:#e61e0a;">5,550</div>
<svg style="left:159px;top:437px" width="10" height="9"><path d="M5 0l5 8.500H0z" fill="#e61e0a"/></svg>
<div style="left:156px;top:433px;width:64px;height:18px;font-family:'Liberation Mono','Noto Sans CJK KR',monospace;font-weight:bold;font-size:13px;line-height:22px;text-align:right;letter-spacing:0.2px;overflow:hidden;color:#e61e0a;">370</div>
<div style="left:222px;top:433px;width:58px;height:18px;font-family:'Liberation Mono','Noto Sans CJK KR',monospace;font-weight:bold;font-size:13px;line-height:22px;text-align:right;letter-spacing:0.2px;overflow:hidden;color:#e61e0a;">+7.14</div>
<div style="left:282px;top:433px;width:81px;height:18px;font-family:'Liberation Mono','Noto Sans CJK KR',monospace;font-weight:bold;font-size:13px;line-height:22px;text-align:right;letter-spacing:0.2px;overflow:hidden;color:#000;">3,853,645</div>
<div style="left:9px;top:451px;width:356px;height:18px;background:#fff;"></div>
<div style="left:10px;top:451px;width:76px;height:18px;font-family:'Liberation Mono','Noto Sans CJK KR',monospace;font-weight:bold;font-size:13px;line-height:22px;letter-spacing:0.200px;color:#800a48;white-space:nowrap;overflow:hidden;">NHN KCP</div>
<div style="left:86px;top:451px;width:68px;height:18px;font-family:'Liberation Mono','Noto Sans CJK KR',monospace;font-weight:bold;font-size:13px;line-height:22px;text-align:right;letter-spacing:0.2px;overflow:hidden;color:#e61e0a;">13,930</div>
<svg style="left:159px;top:455px" width="10" height="9"><path d="M5 0l5 8.500H0z" fill="#e61e0a"/></svg>
<div style="left:156px;top:451px;width:64px;height:18px;font-family:'Liberation Mono','Noto Sans CJK KR',monospace;font-weight:bold;font-size:13px;line-height:22px;text-align:right;letter-spacing:0.2px;overflow:hidden;color:#e61e0a;">770</div>
<div style="left:222px;top:451px;width:58px;height:18px;font-family:'Liberation Mono','Noto Sans CJK KR',monospace;font-weight:bold;font-size:13px;line-height:22px;text-align:right;letter-spacing:0.2px;overflow:hidden;color:#e61e0a;">+5.85</div>
<div style="left:282px;top:451px;width:81px;height:18px;font-family:'Liberation Mono','Noto Sans CJK KR',monospace;font-weight:bold;font-size:13px;line-height:22px;text-align:right;letter-spacing:0.2px;overflow:hidden;color:#000;">6,112,823</div>
<div style="left:9px;top:469px;width:356px;height:18px;background:#ececec;"></div>
<div style="left:10px;top:469px;width:76px;height:18px;font-family:'Liberation Mono','Noto Sans CJK KR',monospace;font-weight:bold;font-size:13px;line-height:22px;letter-spacing:2.400px;color:#800a48;white-space:nowrap;overflow:hidden;">소룩스</div>
<div style="left:86px;top:469px;width:68px;height:18px;font-family:'Liberation Mono','Noto Sans CJK KR',monospace;font-weight:bold;font-size:13px;line-height:22px;text-align:right;letter-spacing:0.2px;overflow:hidden;color:#e61e0a;">2,365</div>
<svg style="left:159px;top:473px" width="10" height="9"><path d="M5 0l5 8.500H0z" fill="#e61e0a"/></svg>
<div style="left:156px;top:469px;width:64px;height:18px;font-family:'Liberation Mono','Noto Sans CJK KR',monospace;font-weight:bold;font-size:13px;line-height:22px;text-align:right;letter-spacing:0.2px;overflow:hidden;color:#e61e0a;">125</div>
<div style="left:222px;top:469px;width:58px;height:18px;font-family:'Liberation Mono','Noto Sans CJK KR',monospace;font-weight:bold;font-size:13px;line-height:22px;text-align:right;letter-spacing:0.2px;overflow:hidden;color:#e61e0a;">+5.58</div>
<div style="left:282px;top:469px;width:81px;height:18px;font-family:'Liberation Mono','Noto Sans CJK KR',monospace;font-weight:bold;font-size:13px;line-height:22px;text-align:right;letter-spacing:0.2px;overflow:hidden;color:#000;">1,726,861</div>
<div style="left:86px;top:145px;width:1px;height:342px;background:#c4c8d0;"></div>
<div style="left:156px;top:145px;width:1px;height:342px;background:#c4c8d0;"></div>
<div style="left:222px;top:145px;width:1px;height:342px;background:#c4c8d0;"></div>
<div style="left:282px;top:145px;width:1px;height:342px;background:#c4c8d0;"></div>
<div style="left:365px;top:145px;width:1px;height:342px;background:#c4c8d0;"></div>
<div style="left:8px;top:487px;width:358px;height:1px;background:#c4c8d0;"></div>
</div>
</div>
</body></html>
